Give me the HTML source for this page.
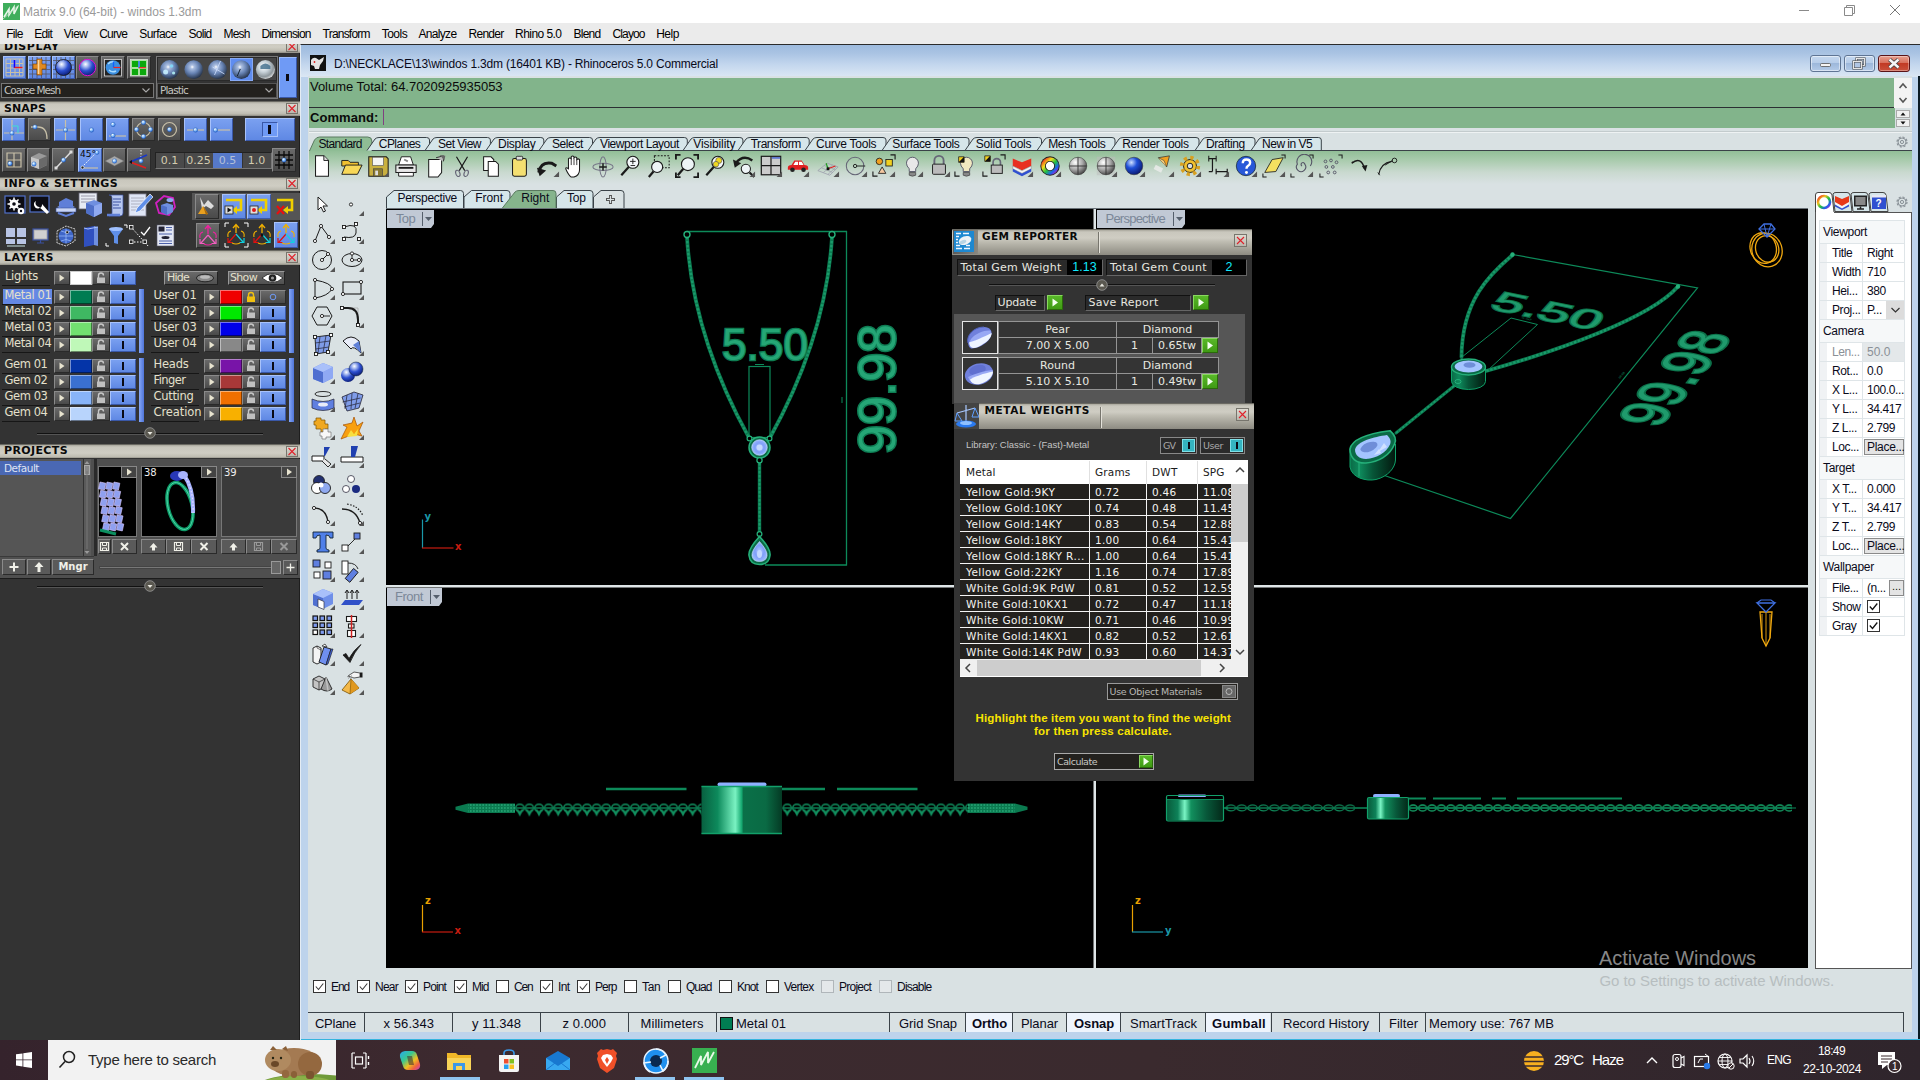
<!DOCTYPE html>
<html><head><meta charset="utf-8"><title>Matrix 9.0 (64-bit) - windos 1.3dm</title>
<style>
html,body{margin:0;padding:0;}
body{width:1920px;height:1080px;position:relative;overflow:hidden;background:#333;font-family:"Liberation Sans",sans-serif;}
div,span.t,svg.a{position:absolute;box-sizing:border-box;}
span.t{white-space:nowrap;display:block;}
.hdr{background:linear-gradient(#a9a79c 0,#c9c7bd 2px,#cfcdc3 8px,#bdbbb0 12px,#8d8b82 100%);border-top:1px solid #6a6962;}
.xb{background:linear-gradient(#dddbd2,#b9b7ad);border:1px solid #77756d;}
.btn{background:linear-gradient(#6a6a6a,#4a4a4a);border:1px solid;border-color:#8a8a8a #2a2a2a #2a2a2a #8a8a8a;}
.bon{background:linear-gradient(#7aa0f0,#5f88e4);border:1px solid;border-color:#a8c2fa #3a58a8 #3a58a8 #a8c2fa;}
.dk{background:#222;border:1px solid;border-color:#111 #666 #666 #111;}
</style></head><body>

<div style="left:0px;top:0px;width:1920px;height:23px;background:#fff;"></div>
<svg class="a" style="left:3px;top:3px" width="17" height="17" viewBox="0 0 17 17"><rect width="17" height="17" fill="#3fae5c"/><path d="M1 14 L6 6 L6 12 L11 4 L11 11 L15 3" stroke="#e8f6ea" stroke-width="1.6" fill="none"/><path d="M0 16 L16 2" stroke="#bfe5c6" stroke-width="0.8"/></svg>
<span class="t" style="left:23px;top:4px;font:400 12px/16px 'Liberation Sans',sans-serif;color:#9a9a9a;letter-spacing:-0.006px;">Matrix 9.0 (64-bit) - windos 1.3dm</span>
<svg class="a" style="left:1780px;top:0" width="140" height="23" viewBox="0 0 140 23"><path d="M19 10.500h10" stroke="#8a8a8a" stroke-width="1"/><path d="M64.500 7.500h8v8h-8z M66.500 7.500v-2h8v8h-2" stroke="#8a8a8a" fill="none" stroke-width="1"/><path d="M110 5l10 10M120 5l-10 10" stroke="#777" stroke-width="1"/></svg>
<div style="left:0px;top:23px;width:1920px;height:21px;background:#ebebeb;"></div>
<span class="t" style="left:6.2px;top:26px;font:400 12px/17px 'Liberation Sans',sans-serif;color:#000;letter-spacing:-0.734px;">File</span>
<span class="t" style="left:34.3px;top:26px;font:400 12px/17px 'Liberation Sans',sans-serif;color:#000;letter-spacing:-0.719px;">Edit</span>
<span class="t" style="left:63.8px;top:26px;font:400 12px/17px 'Liberation Sans',sans-serif;color:#000;letter-spacing:-0.523px;">View</span>
<span class="t" style="left:99.2px;top:26px;font:400 12px/17px 'Liberation Sans',sans-serif;color:#000;letter-spacing:-0.802px;">Curve</span>
<span class="t" style="left:139.3px;top:26px;font:400 12px/17px 'Liberation Sans',sans-serif;color:#000;letter-spacing:-0.593px;">Surface</span>
<span class="t" style="left:188.5px;top:26px;font:400 12px/17px 'Liberation Sans',sans-serif;color:#000;letter-spacing:-0.737px;">Solid</span>
<span class="t" style="left:223.5px;top:26px;font:400 12px/17px 'Liberation Sans',sans-serif;color:#000;letter-spacing:-0.785px;">Mesh</span>
<span class="t" style="left:261.4px;top:26px;font:400 12px/17px 'Liberation Sans',sans-serif;color:#000;letter-spacing:-0.832px;">Dimension</span>
<span class="t" style="left:322.6px;top:26px;font:400 12px/17px 'Liberation Sans',sans-serif;color:#000;letter-spacing:-0.792px;">Transform</span>
<span class="t" style="left:381.7px;top:26px;font:400 12px/17px 'Liberation Sans',sans-serif;color:#000;letter-spacing:-0.502px;">Tools</span>
<span class="t" style="left:418.5px;top:26px;font:400 12px/17px 'Liberation Sans',sans-serif;color:#000;letter-spacing:-0.684px;">Analyze</span>
<span class="t" style="left:468.5px;top:26px;font:400 12px/17px 'Liberation Sans',sans-serif;color:#000;letter-spacing:-0.726px;">Render</span>
<span class="t" style="left:515.1px;top:26px;font:400 12px/17px 'Liberation Sans',sans-serif;color:#000;letter-spacing:-0.563px;">Rhino 5.0</span>
<span class="t" style="left:573.5px;top:26px;font:400 12px/17px 'Liberation Sans',sans-serif;color:#000;letter-spacing:-0.758px;">Blend</span>
<span class="t" style="left:612.5px;top:26px;font:400 12px/17px 'Liberation Sans',sans-serif;color:#000;letter-spacing:-0.875px;">Clayoo</span>
<span class="t" style="left:656.2px;top:26px;font:400 12px/17px 'Liberation Sans',sans-serif;color:#000;letter-spacing:-0.520px;">Help</span>
<div style="left:0;top:44px;width:300px;height:996px;background:#333;overflow:hidden;border-right:1px solid #1e1e1e"></div>
<svg width="0" height="0" style="position:absolute"><defs><radialGradient id="gd" cx=".35" cy=".3" r=".8"><stop offset="0" stop-color="#fff"/><stop offset=".35" stop-color="#9fd0ff"/><stop offset="1" stop-color="#1c62d8"/></radialGradient><radialGradient id="gs" cx=".38" cy=".3" r=".75"><stop offset="0" stop-color="#fff"/><stop offset=".18" stop-color="#b9c9f5"/><stop offset=".55" stop-color="#2c4fd0"/><stop offset="1" stop-color="#0a1a70"/></radialGradient><radialGradient id="gm" cx=".42" cy=".36" r=".7"><stop offset="0" stop-color="#fff"/><stop offset=".15" stop-color="#a9bde0"/><stop offset=".5" stop-color="#6783b3"/><stop offset="1" stop-color="#1b2638"/></radialGradient><radialGradient id="gc" cx=".4" cy=".35" r=".7"><stop offset="0" stop-color="#fff"/><stop offset=".4" stop-color="#c9d3da"/><stop offset=".75" stop-color="#8e979c"/><stop offset="1" stop-color="#e8e8e8"/></radialGradient><linearGradient id="gb" x1="0" y1="0" x2="1" y2="1"><stop offset="0" stop-color="#a9c0f5"/><stop offset="1" stop-color="#2f51b8"/></linearGradient></defs></svg>
<div style="left:0;top:44px;width:300px;height:9px;overflow:hidden"><div class="hdr" style="left:0;top:-6px;width:300px;height:15px"></div><span class="t" style="left:4px;top:-5.500px;font:700 11px/15px DejaVu Sans,sans-serif;color:#0a0a0a;letter-spacing:.55px">DISPLAY</span><div class="xb" style="left:286px;top:-3px;width:12px;height:11px"><svg width="10" height="9" viewBox="0 0 10 9" style="display:block"><path d="M1.5 1l7 7M8.5 1l-7 7" stroke="#e0202a" stroke-width="1.1"/></svg></div></div>
<div class="bon" style="left:3px;top:56px;width:23px;height:23px;"></div>
<div class="bon" style="left:28px;top:56px;width:23px;height:23px;"></div>
<div class="bon" style="left:52px;top:56px;width:23px;height:23px;"></div>
<div class="btn" style="left:76px;top:56px;width:23px;height:23px;"></div>
<div class="btn" style="left:101px;top:56px;width:24px;height:23px;"></div>
<div class="btn" style="left:127px;top:56px;width:24px;height:23px;"></div>
<svg class="a" style="left:3px;top:56px" width="23" height="23" viewBox="0 0 23 23"><path d="M3 3h17v17h-17z" fill="none" stroke="#c9c0a8" stroke-width="1"/><path d="M7.5 3v17M12 3v17M16.5 3v17M3 7.5h17M3 12h17M3 16.5h17" stroke="#c9c0a8" stroke-width="1"/><path d="M11.5 4v8" stroke="#10f" stroke-width="1.6"/><path d="M11.5 11.5h8" stroke="#f01818" stroke-width="1.4"/></svg>
<svg class="a" style="left:28px;top:56px" width="23" height="23" viewBox="0 0 23 23"><path d="M1 4.5h21M1 9h21M1 13.500h21M1 18h21M4.500 1v21M9 1v21M13.500 1v21M18 1v21" stroke="#556" stroke-width=".8"/><path d="M9 3h5v5h4v5h-4v6h-5v-6h-4v-5h4z" fill="#e08a20" stroke="#7a3d00" stroke-width=".6"/><path d="M10.500 4v14" stroke="#ffd79a" stroke-width="1.6"/></svg>
<svg class="a" style="left:52px;top:56px" width="23" height="23" viewBox="0 0 23 23"><path d="M1 4.5h21M1 9h21M1 13.500h21M1 18h21M4.500 1v21M9 1v21M13.500 1v21M18 1v21" stroke="#556" stroke-width=".8"/><circle cx="11.5" cy="11.5" r="8" fill="url(#gs)" stroke="#111" stroke-width=".8"/></svg>
<svg class="a" style="left:76px;top:56px" width="23" height="23" viewBox="0 0 23 23"><circle cx="11.5" cy="11.5" r="8.200" fill="url(#gs)" stroke="#e010d0" stroke-width="1"/></svg>
<svg class="a" style="left:101px;top:56px" width="24" height="23" viewBox="0 0 24 23"><rect x="3.500" y="3.500" width="17" height="16.500" fill="#222" stroke="#ddd" stroke-width=".8"/><circle cx="12" cy="11.500" r="7.300" fill="#3c8fe0"/><path d="M7 8q3-3 6-2M8 14q3 3 7 1" stroke="#a9dcff" stroke-width="1.500" fill="none"/><path d="M12.500 5.500v6" stroke="#1060ff" stroke-width="1.300"/><path d="M12.500 11.500h7" stroke="#f02020" stroke-width="1.200"/></svg>
<svg class="a" style="left:127px;top:56px" width="24" height="23" viewBox="0 0 24 23"><rect x="3.500" y="3.500" width="17" height="16.500" fill="#a8e0a0" stroke="#ddd" stroke-width=".8"/><path d="M5 5h6v6h-6zM13 5h6v6h-6zM5 13h6v6h-6zM13 13h6v6h-6z" fill="#0ca80c"/><path d="M12 5v7" stroke="#1060ff" stroke-width="1.300"/><path d="M12 11.700h7" stroke="#f02020" stroke-width="1.200"/></svg>
<div style="left:1px;top:83px;width:153px;height:15px;background:#23211e;border:1px solid #777;"></div>
<span class="t" style="left:4px;top:83px;font:400 10.5px/15px 'DejaVu Sans','Liberation Sans',sans-serif;color:#c4c4c0;letter-spacing:-1.038px;">Coarse Mesh</span>
<svg class="a" style="left:140px;top:86px" width="12" height="9" viewBox="0 0 12 9"><path d="M2.500 2.500l3.500 3.500l3.500-3.500" stroke="#aaa" fill="none" stroke-width="1.100"/></svg>
<div style="left:156px;top:56px;width:122px;height:43px;border:1px solid #777;background:#333"></div>
<div style="left:157px;top:57px;width:120px;height:24px;background:#454545;border:1px solid #2a2a2a"></div>
<div style="left:230px;top:58px;width:23px;height:23px;background:#5f8df0;border:1px solid #86a9f5"></div>
<svg class="a" style="left:156px;top:56px" width="122" height="26" viewBox="0 0 122 26"><circle cx="13.599999999999994" cy="13.600" r="9.500" fill="url(#gm)"/><circle cx="9.599999999999994" cy="16" r="2.500" fill="#c8f0ff" opacity=".9"/><circle cx="15.599999999999994" cy="10" r="1.800" fill="#7fe0ff" opacity=".8"/><circle cx="17.599999999999994" cy="17" r="1.600" fill="#bff" opacity=".8"/><circle cx="37.69999999999999" cy="13.600" r="9.300" fill="url(#gm)"/><circle cx="61.5" cy="13.600" r="9.500" fill="url(#gm)"/><path d="M56.5 11l12 7M64.5 5l-6 14" stroke="#cfe0ff" stroke-width=".9" opacity=".9"/><circle cx="85.30000000000001" cy="13.600" r="9.300" fill="url(#gm)"/><path d="M84.30000000000001 13l-3 7" stroke="#123" stroke-width="1"/><circle cx="109.39999999999998" cy="13.600" r="9.500" fill="url(#gc)"/><path d="M104.39999999999998 10q5-5 10 0v3h-10z" fill="#3c6a8a" opacity=".8"/></svg>
<div style="left:157px;top:83px;width:120px;height:15px;background:#23211e;border:1px solid #555;"></div>
<span class="t" style="left:160px;top:83px;font:400 10.5px/15px 'DejaVu Sans','Liberation Sans',sans-serif;color:#c4c4c0;letter-spacing:-0.851px;">Plastic</span>
<svg class="a" style="left:263px;top:86px" width="12" height="9" viewBox="0 0 12 9"><path d="M2.500 2.500l3.500 3.500l3.500-3.500" stroke="#aaa" fill="none" stroke-width="1.100"/></svg>
<div style="left:279px;top:57px;width:18px;height:41px;background:#6f9af5;border:1px solid;border-color:#9dbcfa #3a58a8 #3a58a8 #9dbcfa"></div>
<div style="left:286px;top:74px;width:3px;height:7px;background:#0a0a14"></div>
<div class="hdr" style="left:0px;top:101px;width:300px;height:15px;"></div>
<span class="t" style="left:4px;top:101px;font:700 11px/15px 'DejaVu Sans','Liberation Sans',sans-serif;color:#0a0a0a;letter-spacing:0.075px;">SNAPS</span>
<div class="xb" style="left:286px;top:103px;width:12px;height:11px;"><svg width="10" height="9" viewBox="0 0 10 9" style="display:block"><path d="M1.5 1l7 7M8.5 1l-7 7" stroke="#e0202a" stroke-width="1.1"/></svg></div>
<div class="bon" style="left:2px;top:118px;width:23px;height:23px;"></div>
<div class="btn" style="left:28px;top:118px;width:23px;height:23px;"></div>
<div class="bon" style="left:54px;top:118px;width:23px;height:23px;"></div>
<div class="bon" style="left:80px;top:118px;width:23px;height:23px;"></div>
<div class="bon" style="left:106px;top:118px;width:23px;height:23px;"></div>
<div class="btn" style="left:132px;top:118px;width:23px;height:23px;"></div>
<div class="btn" style="left:158px;top:118px;width:23px;height:23px;"></div>
<div class="bon" style="left:184px;top:118px;width:23px;height:23px;"></div>
<div class="bon" style="left:210px;top:118px;width:23px;height:23px;"></div>
<svg class="a" style="left:2px;top:118px" width="23" height="23" viewBox="0 0 23 23"><path d="M10 2v20M2 15h20" stroke="#c8c0a8" stroke-width="1.200"/><path d="M10 8h6v7" stroke="#40e0d0" stroke-width="1" fill="none"/><circle cx="10" cy="15" r="2.2" fill="url(#gd)" stroke="#1a4fa8" stroke-width=".4"/></svg>
<svg class="a" style="left:28px;top:118px" width="23" height="23" viewBox="0 0 23 23"><path d="M3 9h7q9 0 9 12" stroke="#c8c0a8" stroke-width="1.300" fill="none"/><circle cx="7" cy="9" r="2.2" fill="url(#gd)" stroke="#1a4fa8" stroke-width=".4"/></svg>
<svg class="a" style="left:54px;top:118px" width="23" height="23" viewBox="0 0 23 23"><path d="M11.5 2v20M2 12h19" stroke="#c8c0a8" stroke-width="1.200"/><circle cx="11.5" cy="12" r="2.2" fill="url(#gd)" stroke="#1a4fa8" stroke-width=".4"/></svg>
<svg class="a" style="left:80px;top:118px" width="23" height="23" viewBox="0 0 23 23"><circle cx="11.5" cy="12" r="2.2" fill="url(#gd)" stroke="#1a4fa8" stroke-width=".4"/></svg>
<svg class="a" style="left:106px;top:118px" width="23" height="23" viewBox="0 0 23 23"><path d="M3 18h17" stroke="#c8c0a8" stroke-width="1.200"/><circle cx="7" cy="6.5" r="2.2" fill="url(#gd)" stroke="#1a4fa8" stroke-width=".4"/><circle cx="7" cy="17.5" r="2.2" fill="url(#gd)" stroke="#1a4fa8" stroke-width=".4"/></svg>
<svg class="a" style="left:132px;top:118px" width="23" height="23" viewBox="0 0 23 23"><circle cx="11.500" cy="11.500" r="7" fill="none" stroke="#c8c0a8" stroke-width="1.200"/><circle cx="11.5" cy="4.5" r="2.2" fill="url(#gd)" stroke="#1a4fa8" stroke-width=".4"/><circle cx="11.5" cy="18.5" r="2.2" fill="url(#gd)" stroke="#1a4fa8" stroke-width=".4"/><circle cx="4.5" cy="11.5" r="2.2" fill="url(#gd)" stroke="#1a4fa8" stroke-width=".4"/><circle cx="18.5" cy="11.5" r="2.2" fill="url(#gd)" stroke="#1a4fa8" stroke-width=".4"/></svg>
<svg class="a" style="left:158px;top:118px" width="23" height="23" viewBox="0 0 23 23"><circle cx="11.500" cy="11.500" r="7" fill="none" stroke="#c8c0a8" stroke-width="1.200"/><circle cx="11.5" cy="11.5" r="2.2" fill="url(#gd)" stroke="#1a4fa8" stroke-width=".4"/></svg>
<svg class="a" style="left:184px;top:118px" width="23" height="23" viewBox="0 0 23 23"><path d="M3 12h17" stroke="#c8c0a8" stroke-width="1.200"/><circle cx="11.5" cy="12" r="2.2" fill="url(#gd)" stroke="#1a4fa8" stroke-width=".4"/></svg>
<svg class="a" style="left:210px;top:118px" width="23" height="23" viewBox="0 0 23 23"><path d="M5 12h15" stroke="#c8c0a8" stroke-width="1.200"/><circle cx="5.5" cy="12" r="2.2" fill="url(#gd)" stroke="#1a4fa8" stroke-width=".4"/></svg>
<div class="bon" style="left:245px;top:118px;width:50px;height:23px;"></div>
<div style="left:262px;top:122px;width:16px;height:15px;border:1px solid;border-color:#3a58a8 #a8c2fa #a8c2fa #3a58a8;background:#6f9af5"></div>
<div style="left:268px;top:125px;width:3px;height:9px;background:#0a0a14"></div>
<div class="btn" style="left:2px;top:148px;width:24px;height:24px;"></div>
<div class="btn" style="left:27px;top:148px;width:23px;height:24px;"></div>
<div class="btn" style="left:52px;top:148px;width:23px;height:24px;"></div>
<div class="bon" style="left:78px;top:148px;width:24px;height:24px;"></div>
<div class="btn" style="left:103px;top:148px;width:23px;height:24px;"></div>
<div class="btn" style="left:127px;top:148px;width:24px;height:24px;"></div>
<svg class="a" style="left:2px;top:148px" width="24" height="24" viewBox="0 0 24 24"><path d="M5 5h14v14h-14zM12 5v14M5 12h14" stroke="#c8c0a8" fill="none" stroke-width="1.200"/><circle cx="8" cy="15.5" r="2.2" fill="url(#gd)" stroke="#1a4fa8" stroke-width=".4"/></svg>
<svg class="a" style="left:27px;top:148px" width="23" height="24" viewBox="0 0 23 24"><path d="M4 9l8-4 8 3v9l-8 4-8-3z" fill="#9a9a9a"/><path d="M4 9l8 2.500v9.500l-8-3z" fill="#c8c8c8"/><path d="M12 11.500l8-3.500v9l-8 4z" fill="#6a6a6a"/><circle cx="7" cy="16" r="2.2" fill="url(#gd)" stroke="#1a4fa8" stroke-width=".4"/></svg>
<svg class="a" style="left:52px;top:148px" width="23" height="24" viewBox="0 0 23 24"><path d="M4 20L19 4" stroke="#ddd" stroke-width="1.400"/><rect x="2.500" y="18.500" width="3" height="3" fill="#ddd"/><rect x="17.500" y="2.500" width="3" height="3" fill="#ddd"/><circle cx="11.5" cy="12" r="2.2" fill="url(#gd)" stroke="#1a4fa8" stroke-width=".4"/></svg>
<svg class="a" style="left:78px;top:148px" width="24" height="24" viewBox="0 0 24 24"><path d="M3 20h17" stroke="#c8c0a8" stroke-width="1.200"/><path d="M4 19L19 4" stroke="#fff" stroke-width="1" stroke-dasharray="1.500 1.500"/><circle cx="4.500" cy="19.500" r="1.500" fill="#222" stroke="#fff" stroke-width=".6"/><circle cx="19" cy="4.5" r="2" fill="url(#gd)" stroke="#1a4fa8" stroke-width=".4"/></svg>
<span class="t" style="left:80px;top:149px;font:400 9px/11px 'DejaVu Sans','Liberation Sans',sans-serif;color:#0a0a0a;">45°</span>
<svg class="a" style="left:103px;top:148px" width="23" height="24" viewBox="0 0 23 24"><path d="M2 13l9.500-5 9.500 5-9.500 5z" fill="#a8a8a8" stroke="#666" stroke-width=".5"/><circle cx="11.5" cy="13" r="2.2" fill="url(#gd)" stroke="#1a4fa8" stroke-width=".4"/></svg>
<svg class="a" style="left:127px;top:148px" width="24" height="24" viewBox="0 0 24 24"><path d="M14 2v10" stroke="#fff" stroke-width="1" stroke-dasharray="1.500 1.500"/><path d="M3 14l17-7" stroke="#1838c8" stroke-width="1.500"/><path d="M3 14l16 6" stroke="#e02020" stroke-width="1.500"/><path d="M2 14l3-2v4z" fill="#111"/><circle cx="14" cy="13" r="2.2" fill="url(#gd)" stroke="#1a4fa8" stroke-width=".4"/></svg>
<div style="left:155px;top:152px;width:117px;height:17px;background:#4a4a4a;border:1px solid;border-color:#222 #777 #777 #222"></div>
<div style="left:213px;top:153px;width:29px;height:15px;background:#5679c9"></div>
<span class="t" style="left:155px;top:153px;font:400 11px/15px 'DejaVu Sans','Liberation Sans',sans-serif;color:#d4ccb0;width:29px;text-align:center;">0.1</span>
<span class="t" style="left:184px;top:153px;font:400 11px/15px 'DejaVu Sans','Liberation Sans',sans-serif;color:#d4ccb0;width:29px;text-align:center;">0.25</span>
<div style="left:184px;top:153px;width:1px;height:15px;background:#333"></div>
<span class="t" style="left:213px;top:153px;font:400 11px/15px 'DejaVu Sans','Liberation Sans',sans-serif;color:#b4c0d8;width:29px;text-align:center;">0.5</span>
<span class="t" style="left:242px;top:153px;font:400 11px/15px 'DejaVu Sans','Liberation Sans',sans-serif;color:#d4ccb0;width:29px;text-align:center;">1.0</span>
<div style="left:242px;top:153px;width:1px;height:15px;background:#333"></div>
<div class="btn" style="left:272px;top:148px;width:24px;height:24px;"></div>
<svg class="a" style="left:272px;top:148px" width="24" height="24" viewBox="0 0 24 24"><path d="M7 3v18M12 3v18M17 3v18M3 7h18M3 12h18M3 17h18" stroke="#0a0a0a" stroke-width="1.300"/><circle cx="12" cy="12" r="2.2" fill="url(#gd)" stroke="#1a4fa8" stroke-width=".4"/></svg>
<div class="hdr" style="left:0px;top:177px;width:300px;height:14px;"></div>
<span class="t" style="left:4px;top:177px;font:700 11px/14px 'DejaVu Sans','Liberation Sans',sans-serif;color:#0a0a0a;letter-spacing:0.376px;">INFO &amp; SETTINGS</span>
<div class="xb" style="left:286px;top:178px;width:12px;height:11px;"><svg width="10" height="9" viewBox="0 0 10 9" style="display:block"><path d="M1.5 1l7 7M8.5 1l-7 7" stroke="#e0202a" stroke-width="1.1"/></svg></div>
<svg class="a" style="left:4px;top:193px" width="23" height="26" viewBox="0 0 23 26"><rect x="1" y="3" width="20" height="17" fill="#0c0c14" stroke="#5070c8" stroke-width="1.200"/><circle cx="10" cy="11" r="4.500" fill="#fff"/><circle cx="10" cy="11" r="1.800" fill="#0c0c14"/><circle cx="17" cy="18" r="3.300" fill="#fff"/><circle cx="17" cy="18" r="1.200" fill="#0c0c14"/><path d="M10 4.500v13M3.500 11h13M5.500 6.500l9 9M14.500 6.500l-9 9" stroke="#fff" stroke-width="1.500"/><circle cx="10" cy="11" r="1.800" fill="#0c0c14"/></svg>
<svg class="a" style="left:29px;top:193px" width="23" height="26" viewBox="0 0 23 26"><rect x="1" y="3" width="19" height="16" fill="#0c0c14" stroke="#5070c8" stroke-width="1.200"/><path d="M7 8a4 4 0 1 0 6 3l7 8-2 2-8-7a4 4 0 0 1-3-6z" fill="#fff"/></svg>
<svg class="a" style="left:54px;top:193px" width="24" height="26" viewBox="0 0 24 26"><path d="M3 14l9-4 9 4-9 4z" fill="#7f9ce8"/><path d="M5 9l7-4 7 3v6l-7 3-7-3z" fill="#5f7fd8"/><path d="M2 15h20v4h-20z" fill="#c8d4f4" stroke="#3a50a0" stroke-width=".6"/><path d="M4 20l8 3 8-3" stroke="#5f7fd8" stroke-width="2" fill="none"/></svg>
<svg class="a" style="left:78px;top:192px" width="25" height="28" viewBox="0 0 25 28"><rect x="1" y="1" width="18" height="16" fill="#e8ecf4" stroke="#667" stroke-width=".8"/><path d="M3 4h14M3 7h14M3 10h14" stroke="#889" stroke-width=".8"/><path d="M8 11l8-3 8 3v10l-8 4-8-4z" fill="#6f8fe0"/><path d="M8 11l8 3v11l-8-4z" fill="#4f6fc8"/><path d="M16 14l8-3v10l-8 4z" fill="#8fa9f0"/></svg>
<svg class="a" style="left:105px;top:193px" width="22" height="26" viewBox="0 0 22 26"><path d="M4 2h14v18q0 3-3 3h-11q3 0 3-3v-15q0-3-3-3z" fill="#b8c8f0" stroke="#3a50a0" stroke-width=".7"/><path d="M8 6h8M8 9h8M8 12h6M8 15h8" stroke="#3a50a0" stroke-width="1"/><path d="M2 22h13" stroke="#5f7fd8" stroke-width="2.500"/></svg>
<svg class="a" style="left:128px;top:192px" width="25" height="27" viewBox="0 0 25 27"><rect x="1" y="2" width="17" height="22" fill="#dfe6f6" stroke="#889" stroke-width=".8"/><path d="M3 6h13M3 9h13M3 12h13M3 15h13M3 18h13" stroke="#99a" stroke-width=".7"/><path d="M22 2l3 3-13 14-5 2 2-5z" fill="#5f8fe8" stroke="#fff" stroke-width=".7"/></svg>
<svg class="a" style="left:153px;top:193px" width="24" height="26" viewBox="0 0 24 26"><path d="M3 10l8-7 9 2 2 9-6 8-10-2z" fill="none" stroke="#d020c0" stroke-width="1.800"/><path d="M8 12l6-2 6 2v7l-6 3-6-3z" fill="#6f8fe0"/><path d="M8 12l6 2v8l-6-3z" fill="#4f6fc8"/><ellipse cx="17" cy="7" rx="3.500" ry="2" fill="#8fa9f0"/></svg>
<div style="left:192px;top:193px;width:108px;height:27px;background:#555"></div>
<div class="btn" style="left:195px;top:194px;width:24px;height:25px;"></div>
<div class="bon" style="left:222px;top:194px;width:24px;height:25px;"></div>
<div class="bon" style="left:247px;top:194px;width:24px;height:25px;"></div>
<svg class="a" style="left:195px;top:194px" width="24" height="25" viewBox="0 0 24 25"><path d="M5 3l4 8 4-5 6 6-3 3-5-3-4 3z" fill="#ddd"/><path d="M3 20l5-8 5 8z" fill="#e8a020"/><path d="M8 12l5 8-2 1z" fill="#a86808"/></svg>
<svg class="a" style="left:222px;top:194px" width="24" height="25" viewBox="0 0 24 25"><path d="M4 6h15v10h-5" stroke="#f0d000" stroke-width="2.600" fill="none"/><path d="M15 12v8l-5-4z" fill="#f0d000"/><rect x="3" y="12" width="8" height="8" fill="#ddd" stroke="#222" stroke-width=".8"/><path d="M5.500 13.500v5l4-2.500z" fill="#111"/></svg>
<svg class="a" style="left:247px;top:194px" width="24" height="25" viewBox="0 0 24 25"><path d="M4 6h15v10h-5" stroke="#f0d000" stroke-width="2.600" fill="none"/><path d="M15 12v8l-5-4z" fill="#f0d000"/><rect x="3" y="12" width="8" height="8" fill="#ddd" stroke="#222" stroke-width=".8"/><circle cx="7" cy="16" r="2" fill="#e01818"/></svg>
<svg class="a" style="left:273px;top:194px" width="24" height="25" viewBox="0 0 24 25"><path d="M4 6h15v10h-5" stroke="#f0d000" stroke-width="2.600" fill="none"/><path d="M15 12v8l-5-4z" fill="#f0d000"/><path d="M4 12l7 8M11 12l-7 8" stroke="#e81010" stroke-width="2.200"/></svg>
<svg class="a" style="left:4px;top:224px" width="23" height="26" viewBox="0 0 23 26"><path d="M2 4h9v9h-9zM13 4h9v9h-9zM2 15h9v5h-9zM13 15h9v5h-9z" fill="#b8c4e4"/><path d="M3 22h18" stroke="#9aa" stroke-width="1.500"/></svg>
<svg class="a" style="left:31px;top:226px" width="19" height="22" viewBox="0 0 19 22"><rect x="2" y="3" width="15" height="11" fill="#aaa" stroke="#3a50a0" stroke-width="1.200"/><rect x="3.500" y="4.500" width="12" height="8" fill="#d0d0d0"/><path d="M6 17h7M9.500 14v3" stroke="#3a50a0" stroke-width="1.200"/></svg>
<svg class="a" style="left:54px;top:223px" width="24" height="26" viewBox="0 0 24 26"><path d="M3 8l9-5 9 3v12l-9 5-9-3z" fill="none" stroke="#fff" stroke-width=".8" stroke-dasharray="2 1"/><circle cx="12" cy="13" r="7.500" fill="#3f66c8"/><path d="M5 13h14M12 5.500v15M7 8q5 3 10 0M7 18q5-3 10 0" stroke="#9fc0ff" stroke-width=".7" fill="none"/><rect x="12" y="8" width="2.500" height="2.500" fill="#111" stroke="#fff" stroke-width=".5"/></svg>
<svg class="a" style="left:81px;top:224px" width="19" height="26" viewBox="0 0 19 26"><path d="M3 4l10-2v19l-10 2z" fill="#3050c0"/><path d="M13 2l4 1v19l-4-1z" fill="#6f8fe0"/><path d="M3 4l4 1 10-2" stroke="#a8c0ff" stroke-width="1" fill="none"/></svg>
<svg class="a" style="left:104px;top:223px" width="24" height="27" viewBox="0 0 24 27"><path d="M5 6h14l-5 7v8l-4-1v-7z" fill="#5f8fe8"/><ellipse cx="12" cy="6" rx="7" ry="2" fill="#9fc0ff"/><path d="M2 20v3h3M20 2h3v3" stroke="#fff" stroke-width="1" fill="none"/></svg>
<svg class="a" style="left:128px;top:224px" width="26" height="26" viewBox="0 0 26 26"><path d="M3 3l18 20M3 18h14" stroke="#fff" stroke-width="1" stroke-dasharray="1.500 1.500"/><rect x="1.500" y="1.500" width="3.500" height="3.500" fill="#222" stroke="#fff" stroke-width=".8"/><rect x="1.500" y="16" width="3.500" height="3.500" fill="#222" stroke="#fff" stroke-width=".8"/><rect x="15" y="16" width="3.500" height="3.500" fill="#222" stroke="#fff" stroke-width=".8"/><path d="M13 8l3 3 6-8" stroke="#fff" stroke-width="1.300" fill="none"/></svg>
<svg class="a" style="left:156px;top:224px" width="20" height="25" viewBox="0 0 20 25"><rect x="1" y="1" width="17" height="21" fill="#e4e8f4" stroke="#556" stroke-width=".6"/><rect x="2.500" y="2.500" width="6" height="5" fill="#223"/><path d="M10 3.500h6M10 6h6M3 10h13M3 17h13M3 19.500h13" stroke="#3a50a0" stroke-width=".9"/><ellipse cx="9.500" cy="13.500" rx="4" ry="1.500" fill="#223"/></svg>
<div class="btn" style="left:196px;top:223px;width:24px;height:25px;"></div>
<div class="bon" style="left:274px;top:222px;width:24px;height:26px;"></div>
<svg class="a" style="left:196px;top:223px" width="24" height="25" viewBox="0 0 24 25"><path d="M12 3v8M9 6l3-3.500 3 3.500" stroke="#f020a0" stroke-width="1.300" fill="none"/><path d="M12 12l-7 8M4 16v4.500h4.500" stroke="#f060c0" stroke-width="1.200" fill="none"/><path d="M12 12l7 8M20 16v4.500h-4.500" stroke="#f060c0" stroke-width="1.200" fill="none"/><path d="M7 9q-4 1-3 6M17 9q4 1 3 6M8 21q4 2 8 0" stroke="#f020a0" stroke-width="1.100" fill="none"/></svg>
<svg class="a" style="left:224px;top:222px" width="25" height="26" viewBox="0 0 25 26"><path d="M12 3v8M9 6l3-3.500 3 3.500" stroke="#f0b000" stroke-width="1.300" fill="none"/><path d="M12 12l-7 8M4 16v4.500h4.500" stroke="#e01010" stroke-width="1.200" fill="none"/><path d="M12 12l7 8M20 16v4.500h-4.500" stroke="#10d0e0" stroke-width="1.200" fill="none"/><path d="M7 9q-4 1-3 6M17 9q4 1 3 6M8 21q4 2 8 0" stroke="#f0b000" stroke-width="1.100" fill="none"/><path d="M1 5v-4h4M20 1h4v4M1 21v4h4M24 21v4h-4" stroke="#fff" stroke-width="1" fill="none"/></svg>
<svg class="a" style="left:250px;top:222px" width="23" height="26" viewBox="0 0 23 26"><path d="M12 3v8M9 6l3-3.500 3 3.500" stroke="#f0b000" stroke-width="1.300" fill="none"/><path d="M12 12l-7 8M4 16v4.500h4.500" stroke="#e01010" stroke-width="1.200" fill="none"/><path d="M12 12l7 8M20 16v4.500h-4.500" stroke="#10d0e0" stroke-width="1.200" fill="none"/><path d="M7 9q-4 1-3 6M17 9q4 1 3 6M8 21q4 2 8 0" stroke="#f0b000" stroke-width="1.100" fill="none"/><circle cx="12" cy="13" r="1.500" fill="#111"/></svg>
<svg class="a" style="left:274px;top:222px" width="24" height="26" viewBox="0 0 24 26"><path d="M12 3v8M9 6l3-3.500 3 3.500" stroke="#f0b000" stroke-width="1.300" fill="none"/><path d="M12 12l-7 8M4 16v4.500h4.500" stroke="#e01010" stroke-width="1.200" fill="none"/><path d="M12 12l7 8M20 16v4.500h-4.500" stroke="#10d0e0" stroke-width="1.200" fill="none"/><path d="M7 9q-4 1-3 6M17 9q4 1 3 6M8 21q4 2 8 0" stroke="#f0b000" stroke-width="1.100" fill="none"/></svg>
<div class="hdr" style="left:0px;top:250px;width:300px;height:15px;"></div>
<span class="t" style="left:4px;top:250px;font:700 11px/15px 'DejaVu Sans','Liberation Sans',sans-serif;color:#0a0a0a;letter-spacing:0.610px;">LAYERS</span>
<div class="xb" style="left:286px;top:252px;width:12px;height:11px;"><svg width="10" height="9" viewBox="0 0 10 9" style="display:block"><path d="M1.5 1l7 7M8.5 1l-7 7" stroke="#e0202a" stroke-width="1.1"/></svg></div>
<span class="t" style="left:5px;top:268.3px;font:400 11.5px/16px 'DejaVu Sans','Liberation Sans',sans-serif;color:#e4e0cc;letter-spacing:-0.282px;">Lights</span>
<div style="left:2px;top:285px;width:48px;height:1px;background:#161616"></div>
<div class="btn" style="left:54px;top:271px;width:16px;height:14px;"></div>
<svg class="a" style="left:54px;top:271px" width="16" height="14" viewBox="0 0 16 14"><path d="M5.500 3.500v7l5-3.500z" fill="#e8e4d0"/></svg>
<div style="left:70px;top:271px;width:22px;height:14px;background:#fff;border:1px solid #ccc"></div>
<div class="btn" style="left:92px;top:271px;width:18px;height:14px;"></div>
<svg class="a" style="left:92px;top:271px" width="18" height="14" viewBox="0 0 18 14"><path d="M6.500 7v-2.500a2.500 2.500 0 0 1 5 0" stroke="#c8c8c8" stroke-width="1.400" fill="none"/><rect x="5" y="6.500" width="8" height="5.500" fill="#c0c0c0"/></svg>
<div class="bon" style="left:110px;top:271px;width:26px;height:14px;"></div>
<div style="left:122px;top:274px;width:2px;height:8px;background:#0a0a14"></div>
<div style="left:164px;top:271px;width:54px;height:14px;background:linear-gradient(#6a6a6a,#505050);border:1px solid;border-color:#999 #222 #222 #999"></div>
<span class="t" style="left:167px;top:270px;font:400 11px/16px 'DejaVu Sans','Liberation Sans',sans-serif;color:#e4e0cc;letter-spacing:-0.770px;">Hide</span>
<svg class="a" style="left:195px;top:273px" width="22" height="10" viewBox="0 0 22 10"><ellipse cx="10" cy="5" rx="8.500" ry="3.800" fill="#888" stroke="#111" stroke-width=".8"/><ellipse cx="10" cy="4" rx="5" ry="1.800" fill="#bbb"/></svg>
<div style="left:228px;top:271px;width:57px;height:14px;background:linear-gradient(#6a6a6a,#505050);border:1px solid;border-color:#999 #222 #222 #999"></div>
<span class="t" style="left:230px;top:270px;font:400 11px/16px 'DejaVu Sans','Liberation Sans',sans-serif;color:#e4e0cc;letter-spacing:-0.670px;">Show</span>
<svg class="a" style="left:261px;top:272px" width="24" height="12" viewBox="0 0 24 12"><path d="M1 6q10.500-9 21 0q-10.500 9-21 0z" fill="#fff" stroke="#111" stroke-width=".8"/><circle cx="11.500" cy="6" r="3.800" fill="#222"/><circle cx="11.500" cy="6" r="1.600" fill="#999"/></svg>
<div style="left:3px;top:289px;width:49px;height:15px;background:#6488e4"></div>
<span class="t" style="left:4.5px;top:287.3px;font:400 11.5px/16px 'DejaVu Sans','Liberation Sans',sans-serif;color:#e4e0cc;letter-spacing:-0.380px;">Metal 01</span>
<div style="left:2px;top:304px;width:48px;height:1px;background:#161616"></div>
<div class="btn" style="left:54px;top:290px;width:16px;height:14px;"></div>
<svg class="a" style="left:54px;top:290px" width="16" height="14" viewBox="0 0 16 14"><path d="M5.500 3.500v7l5-3.500z" fill="#e8e4d0"/></svg>
<div style="left:70px;top:290px;width:22px;height:14px;background:#007c52;border:1px solid;border-color:rgba(255,255,255,.45) rgba(0,0,0,.45) rgba(0,0,0,.45) rgba(255,255,255,.45)"></div>
<div class="btn" style="left:92px;top:290px;width:18px;height:14px;"></div>
<svg class="a" style="left:92px;top:290px" width="18" height="14" viewBox="0 0 18 14"><path d="M6.500 7v-2.500a2.500 2.500 0 0 1 5 0" stroke="#c8c8c8" stroke-width="1.400" fill="none"/><rect x="5" y="6.500" width="8" height="5.500" fill="#c0c0c0"/></svg>
<div class="bon" style="left:110px;top:290px;width:26px;height:14px;"></div>
<div style="left:122px;top:293px;width:2px;height:8px;background:#0a0a14"></div>
<span class="t" style="left:4.5px;top:303.3px;font:400 11.5px/16px 'DejaVu Sans','Liberation Sans',sans-serif;color:#e4e0cc;letter-spacing:-0.380px;">Metal 02</span>
<div style="left:2px;top:320px;width:48px;height:1px;background:#161616"></div>
<div class="btn" style="left:54px;top:306px;width:16px;height:14px;"></div>
<svg class="a" style="left:54px;top:306px" width="16" height="14" viewBox="0 0 16 14"><path d="M5.500 3.500v7l5-3.500z" fill="#e8e4d0"/></svg>
<div style="left:70px;top:306px;width:22px;height:14px;background:#3fb862;border:1px solid;border-color:rgba(255,255,255,.45) rgba(0,0,0,.45) rgba(0,0,0,.45) rgba(255,255,255,.45)"></div>
<div class="btn" style="left:92px;top:306px;width:18px;height:14px;"></div>
<svg class="a" style="left:92px;top:306px" width="18" height="14" viewBox="0 0 18 14"><path d="M6.500 7v-2.500a2.500 2.500 0 0 1 5 0" stroke="#c8c8c8" stroke-width="1.400" fill="none"/><rect x="5" y="6.500" width="8" height="5.500" fill="#c0c0c0"/></svg>
<div class="bon" style="left:110px;top:306px;width:26px;height:14px;"></div>
<div style="left:122px;top:309px;width:2px;height:8px;background:#0a0a14"></div>
<span class="t" style="left:4.5px;top:319.3px;font:400 11.5px/16px 'DejaVu Sans','Liberation Sans',sans-serif;color:#e4e0cc;letter-spacing:-0.380px;">Metal 03</span>
<div style="left:2px;top:336px;width:48px;height:1px;background:#161616"></div>
<div class="btn" style="left:54px;top:322px;width:16px;height:14px;"></div>
<svg class="a" style="left:54px;top:322px" width="16" height="14" viewBox="0 0 16 14"><path d="M5.500 3.500v7l5-3.500z" fill="#e8e4d0"/></svg>
<div style="left:70px;top:322px;width:22px;height:14px;background:#72e070;border:1px solid;border-color:rgba(255,255,255,.45) rgba(0,0,0,.45) rgba(0,0,0,.45) rgba(255,255,255,.45)"></div>
<div class="btn" style="left:92px;top:322px;width:18px;height:14px;"></div>
<svg class="a" style="left:92px;top:322px" width="18" height="14" viewBox="0 0 18 14"><path d="M6.500 7v-2.500a2.500 2.500 0 0 1 5 0" stroke="#c8c8c8" stroke-width="1.400" fill="none"/><rect x="5" y="6.500" width="8" height="5.500" fill="#c0c0c0"/></svg>
<div class="bon" style="left:110px;top:322px;width:26px;height:14px;"></div>
<div style="left:122px;top:325px;width:2px;height:8px;background:#0a0a14"></div>
<span class="t" style="left:4.5px;top:335.3px;font:400 11.5px/16px 'DejaVu Sans','Liberation Sans',sans-serif;color:#e4e0cc;letter-spacing:-0.380px;">Metal 04</span>
<div style="left:2px;top:352px;width:48px;height:1px;background:#161616"></div>
<div class="btn" style="left:54px;top:338px;width:16px;height:14px;"></div>
<svg class="a" style="left:54px;top:338px" width="16" height="14" viewBox="0 0 16 14"><path d="M5.500 3.500v7l5-3.500z" fill="#e8e4d0"/></svg>
<div style="left:70px;top:338px;width:22px;height:14px;background:#bff8b8;border:1px solid;border-color:rgba(255,255,255,.45) rgba(0,0,0,.45) rgba(0,0,0,.45) rgba(255,255,255,.45)"></div>
<div class="btn" style="left:92px;top:338px;width:18px;height:14px;"></div>
<svg class="a" style="left:92px;top:338px" width="18" height="14" viewBox="0 0 18 14"><path d="M6.500 7v-2.500a2.500 2.500 0 0 1 5 0" stroke="#c8c8c8" stroke-width="1.400" fill="none"/><rect x="5" y="6.500" width="8" height="5.500" fill="#c0c0c0"/></svg>
<div class="bon" style="left:110px;top:338px;width:26px;height:14px;"></div>
<div style="left:122px;top:341px;width:2px;height:8px;background:#0a0a14"></div>
<span class="t" style="left:4.5px;top:356.3px;font:400 11.5px/16px 'DejaVu Sans','Liberation Sans',sans-serif;color:#e4e0cc;letter-spacing:-0.413px;">Gem 01</span>
<div style="left:2px;top:373px;width:48px;height:1px;background:#161616"></div>
<div class="btn" style="left:54px;top:359px;width:16px;height:14px;"></div>
<svg class="a" style="left:54px;top:359px" width="16" height="14" viewBox="0 0 16 14"><path d="M5.500 3.500v7l5-3.500z" fill="#e8e4d0"/></svg>
<div style="left:70px;top:359px;width:22px;height:14px;background:#0434a8;border:1px solid;border-color:rgba(255,255,255,.45) rgba(0,0,0,.45) rgba(0,0,0,.45) rgba(255,255,255,.45)"></div>
<div class="btn" style="left:92px;top:359px;width:18px;height:14px;"></div>
<svg class="a" style="left:92px;top:359px" width="18" height="14" viewBox="0 0 18 14"><path d="M6.500 7v-2.500a2.500 2.500 0 0 1 5 0" stroke="#c8c8c8" stroke-width="1.400" fill="none"/><rect x="5" y="6.500" width="8" height="5.500" fill="#c0c0c0"/></svg>
<div class="bon" style="left:110px;top:359px;width:26px;height:14px;"></div>
<div style="left:122px;top:362px;width:2px;height:8px;background:#0a0a14"></div>
<span class="t" style="left:4.5px;top:372.3px;font:400 11.5px/16px 'DejaVu Sans','Liberation Sans',sans-serif;color:#e4e0cc;letter-spacing:-0.413px;">Gem 02</span>
<div style="left:2px;top:389px;width:48px;height:1px;background:#161616"></div>
<div class="btn" style="left:54px;top:375px;width:16px;height:14px;"></div>
<svg class="a" style="left:54px;top:375px" width="16" height="14" viewBox="0 0 16 14"><path d="M5.500 3.500v7l5-3.500z" fill="#e8e4d0"/></svg>
<div style="left:70px;top:375px;width:22px;height:14px;background:#3a70d0;border:1px solid;border-color:rgba(255,255,255,.45) rgba(0,0,0,.45) rgba(0,0,0,.45) rgba(255,255,255,.45)"></div>
<div class="btn" style="left:92px;top:375px;width:18px;height:14px;"></div>
<svg class="a" style="left:92px;top:375px" width="18" height="14" viewBox="0 0 18 14"><path d="M6.500 7v-2.500a2.500 2.500 0 0 1 5 0" stroke="#c8c8c8" stroke-width="1.400" fill="none"/><rect x="5" y="6.500" width="8" height="5.500" fill="#c0c0c0"/></svg>
<div class="bon" style="left:110px;top:375px;width:26px;height:14px;"></div>
<div style="left:122px;top:378px;width:2px;height:8px;background:#0a0a14"></div>
<span class="t" style="left:4.5px;top:388.3px;font:400 11.5px/16px 'DejaVu Sans','Liberation Sans',sans-serif;color:#e4e0cc;letter-spacing:-0.413px;">Gem 03</span>
<div style="left:2px;top:405px;width:48px;height:1px;background:#161616"></div>
<div class="btn" style="left:54px;top:391px;width:16px;height:14px;"></div>
<svg class="a" style="left:54px;top:391px" width="16" height="14" viewBox="0 0 16 14"><path d="M5.500 3.500v7l5-3.500z" fill="#e8e4d0"/></svg>
<div style="left:70px;top:391px;width:22px;height:14px;background:#88b4f8;border:1px solid;border-color:rgba(255,255,255,.45) rgba(0,0,0,.45) rgba(0,0,0,.45) rgba(255,255,255,.45)"></div>
<div class="btn" style="left:92px;top:391px;width:18px;height:14px;"></div>
<svg class="a" style="left:92px;top:391px" width="18" height="14" viewBox="0 0 18 14"><path d="M6.500 7v-2.500a2.500 2.500 0 0 1 5 0" stroke="#c8c8c8" stroke-width="1.400" fill="none"/><rect x="5" y="6.500" width="8" height="5.500" fill="#c0c0c0"/></svg>
<div class="bon" style="left:110px;top:391px;width:26px;height:14px;"></div>
<div style="left:122px;top:394px;width:2px;height:8px;background:#0a0a14"></div>
<span class="t" style="left:4.5px;top:404.3px;font:400 11.5px/16px 'DejaVu Sans','Liberation Sans',sans-serif;color:#e4e0cc;letter-spacing:-0.413px;">Gem 04</span>
<div style="left:2px;top:421px;width:48px;height:1px;background:#161616"></div>
<div class="btn" style="left:54px;top:407px;width:16px;height:14px;"></div>
<svg class="a" style="left:54px;top:407px" width="16" height="14" viewBox="0 0 16 14"><path d="M5.500 3.500v7l5-3.500z" fill="#e8e4d0"/></svg>
<div style="left:70px;top:407px;width:22px;height:14px;background:#b8d4fc;border:1px solid;border-color:rgba(255,255,255,.45) rgba(0,0,0,.45) rgba(0,0,0,.45) rgba(255,255,255,.45)"></div>
<div class="btn" style="left:92px;top:407px;width:18px;height:14px;"></div>
<svg class="a" style="left:92px;top:407px" width="18" height="14" viewBox="0 0 18 14"><path d="M6.500 7v-2.500a2.500 2.500 0 0 1 5 0" stroke="#c8c8c8" stroke-width="1.400" fill="none"/><rect x="5" y="6.500" width="8" height="5.500" fill="#c0c0c0"/></svg>
<div class="bon" style="left:110px;top:407px;width:26px;height:14px;"></div>
<div style="left:122px;top:410px;width:2px;height:8px;background:#0a0a14"></div>
<span class="t" style="left:153.5px;top:287.3px;font:400 11.5px/16px 'DejaVu Sans','Liberation Sans',sans-serif;color:#e4e0cc;letter-spacing:-0.214px;">User 01</span>
<div style="left:151px;top:304px;width:48px;height:1px;background:#161616"></div>
<div class="btn" style="left:204px;top:290px;width:16px;height:14px;"></div>
<svg class="a" style="left:204px;top:290px" width="16" height="14" viewBox="0 0 16 14"><path d="M5.500 3.500v7l5-3.500z" fill="#e8e4d0"/></svg>
<div style="left:220px;top:290px;width:22px;height:14px;background:#f00000;border:1px solid;border-color:rgba(255,255,255,.45) rgba(0,0,0,.45) rgba(0,0,0,.45) rgba(255,255,255,.45)"></div>
<div class="btn" style="left:242px;top:290px;width:18px;height:14px;"></div>
<svg class="a" style="left:242px;top:290px" width="18" height="14" viewBox="0 0 18 14"><path d="M6.500 7v-2a2.500 2.500 0 0 1 5 0v2" stroke="#f0c010" stroke-width="1.400" fill="none"/><rect x="5" y="6.500" width="8" height="5.500" fill="#f0c010"/></svg>
<div class="btn" style="left:260px;top:290px;width:26px;height:14px;"></div>
<svg class="a" style="left:260px;top:290px" width="26" height="14" viewBox="0 0 26 14"><circle cx="13" cy="7" r="2.800" fill="none" stroke="#6f9af5" stroke-width="1"/></svg>
<span class="t" style="left:153.5px;top:303.3px;font:400 11.5px/16px 'DejaVu Sans','Liberation Sans',sans-serif;color:#e4e0cc;letter-spacing:-0.214px;">User 02</span>
<div style="left:151px;top:320px;width:48px;height:1px;background:#161616"></div>
<div class="btn" style="left:204px;top:306px;width:16px;height:14px;"></div>
<svg class="a" style="left:204px;top:306px" width="16" height="14" viewBox="0 0 16 14"><path d="M5.500 3.500v7l5-3.500z" fill="#e8e4d0"/></svg>
<div style="left:220px;top:306px;width:22px;height:14px;background:#00e800;border:1px solid;border-color:rgba(255,255,255,.45) rgba(0,0,0,.45) rgba(0,0,0,.45) rgba(255,255,255,.45)"></div>
<div class="btn" style="left:242px;top:306px;width:18px;height:14px;"></div>
<svg class="a" style="left:242px;top:306px" width="18" height="14" viewBox="0 0 18 14"><path d="M6.500 7v-2.500a2.500 2.500 0 0 1 5 0" stroke="#c8c8c8" stroke-width="1.400" fill="none"/><rect x="5" y="6.500" width="8" height="5.500" fill="#c0c0c0"/></svg>
<div class="bon" style="left:260px;top:306px;width:26px;height:14px;"></div>
<div style="left:272px;top:309px;width:2px;height:8px;background:#0a0a14"></div>
<span class="t" style="left:153.5px;top:319.3px;font:400 11.5px/16px 'DejaVu Sans','Liberation Sans',sans-serif;color:#e4e0cc;letter-spacing:-0.214px;">User 03</span>
<div style="left:151px;top:336px;width:48px;height:1px;background:#161616"></div>
<div class="btn" style="left:204px;top:322px;width:16px;height:14px;"></div>
<svg class="a" style="left:204px;top:322px" width="16" height="14" viewBox="0 0 16 14"><path d="M5.500 3.500v7l5-3.500z" fill="#e8e4d0"/></svg>
<div style="left:220px;top:322px;width:22px;height:14px;background:#0000e8;border:1px solid;border-color:rgba(255,255,255,.45) rgba(0,0,0,.45) rgba(0,0,0,.45) rgba(255,255,255,.45)"></div>
<div class="btn" style="left:242px;top:322px;width:18px;height:14px;"></div>
<svg class="a" style="left:242px;top:322px" width="18" height="14" viewBox="0 0 18 14"><path d="M6.500 7v-2.500a2.500 2.500 0 0 1 5 0" stroke="#c8c8c8" stroke-width="1.400" fill="none"/><rect x="5" y="6.500" width="8" height="5.500" fill="#c0c0c0"/></svg>
<div class="bon" style="left:260px;top:322px;width:26px;height:14px;"></div>
<div style="left:272px;top:325px;width:2px;height:8px;background:#0a0a14"></div>
<span class="t" style="left:153.5px;top:335.3px;font:400 11.5px/16px 'DejaVu Sans','Liberation Sans',sans-serif;color:#e4e0cc;letter-spacing:-0.214px;">User 04</span>
<div style="left:151px;top:352px;width:48px;height:1px;background:#161616"></div>
<div class="btn" style="left:204px;top:338px;width:16px;height:14px;"></div>
<svg class="a" style="left:204px;top:338px" width="16" height="14" viewBox="0 0 16 14"><path d="M5.500 3.500v7l5-3.500z" fill="#e8e4d0"/></svg>
<div style="left:220px;top:338px;width:22px;height:14px;background:#888;border:1px solid;border-color:rgba(255,255,255,.45) rgba(0,0,0,.45) rgba(0,0,0,.45) rgba(255,255,255,.45)"></div>
<div class="btn" style="left:242px;top:338px;width:18px;height:14px;"></div>
<svg class="a" style="left:242px;top:338px" width="18" height="14" viewBox="0 0 18 14"><path d="M6.500 7v-2.500a2.500 2.500 0 0 1 5 0" stroke="#c8c8c8" stroke-width="1.400" fill="none"/><rect x="5" y="6.500" width="8" height="5.500" fill="#c0c0c0"/></svg>
<div class="bon" style="left:260px;top:338px;width:26px;height:14px;"></div>
<div style="left:272px;top:341px;width:2px;height:8px;background:#0a0a14"></div>
<span class="t" style="left:153.5px;top:356.3px;font:400 11.5px/16px 'DejaVu Sans','Liberation Sans',sans-serif;color:#e4e0cc;letter-spacing:-0.213px;">Heads</span>
<div style="left:151px;top:373px;width:48px;height:1px;background:#161616"></div>
<div class="btn" style="left:204px;top:359px;width:16px;height:14px;"></div>
<svg class="a" style="left:204px;top:359px" width="16" height="14" viewBox="0 0 16 14"><path d="M5.500 3.500v7l5-3.500z" fill="#e8e4d0"/></svg>
<div style="left:220px;top:359px;width:22px;height:14px;background:#7814a8;border:1px solid;border-color:rgba(255,255,255,.45) rgba(0,0,0,.45) rgba(0,0,0,.45) rgba(255,255,255,.45)"></div>
<div class="btn" style="left:242px;top:359px;width:18px;height:14px;"></div>
<svg class="a" style="left:242px;top:359px" width="18" height="14" viewBox="0 0 18 14"><path d="M6.500 7v-2.500a2.500 2.500 0 0 1 5 0" stroke="#c8c8c8" stroke-width="1.400" fill="none"/><rect x="5" y="6.500" width="8" height="5.500" fill="#c0c0c0"/></svg>
<div class="bon" style="left:260px;top:359px;width:26px;height:14px;"></div>
<div style="left:272px;top:362px;width:2px;height:8px;background:#0a0a14"></div>
<span class="t" style="left:153.5px;top:372.3px;font:400 11.5px/16px 'DejaVu Sans','Liberation Sans',sans-serif;color:#e4e0cc;letter-spacing:-0.561px;">Finger</span>
<div style="left:151px;top:389px;width:48px;height:1px;background:#161616"></div>
<div class="btn" style="left:204px;top:375px;width:16px;height:14px;"></div>
<svg class="a" style="left:204px;top:375px" width="16" height="14" viewBox="0 0 16 14"><path d="M5.500 3.500v7l5-3.500z" fill="#e8e4d0"/></svg>
<div style="left:220px;top:375px;width:22px;height:14px;background:#a83838;border:1px solid;border-color:rgba(255,255,255,.45) rgba(0,0,0,.45) rgba(0,0,0,.45) rgba(255,255,255,.45)"></div>
<div class="btn" style="left:242px;top:375px;width:18px;height:14px;"></div>
<svg class="a" style="left:242px;top:375px" width="18" height="14" viewBox="0 0 18 14"><path d="M6.500 7v-2.500a2.500 2.500 0 0 1 5 0" stroke="#c8c8c8" stroke-width="1.400" fill="none"/><rect x="5" y="6.500" width="8" height="5.500" fill="#c0c0c0"/></svg>
<div class="bon" style="left:260px;top:375px;width:26px;height:14px;"></div>
<div style="left:272px;top:378px;width:2px;height:8px;background:#0a0a14"></div>
<span class="t" style="left:153.5px;top:388.3px;font:400 11.5px/16px 'DejaVu Sans','Liberation Sans',sans-serif;color:#e4e0cc;letter-spacing:-0.303px;">Cutting</span>
<div style="left:151px;top:405px;width:48px;height:1px;background:#161616"></div>
<div class="btn" style="left:204px;top:391px;width:16px;height:14px;"></div>
<svg class="a" style="left:204px;top:391px" width="16" height="14" viewBox="0 0 16 14"><path d="M5.500 3.500v7l5-3.500z" fill="#e8e4d0"/></svg>
<div style="left:220px;top:391px;width:22px;height:14px;background:#f07000;border:1px solid;border-color:rgba(255,255,255,.45) rgba(0,0,0,.45) rgba(0,0,0,.45) rgba(255,255,255,.45)"></div>
<div class="btn" style="left:242px;top:391px;width:18px;height:14px;"></div>
<svg class="a" style="left:242px;top:391px" width="18" height="14" viewBox="0 0 18 14"><path d="M6.500 7v-2.500a2.500 2.500 0 0 1 5 0" stroke="#c8c8c8" stroke-width="1.400" fill="none"/><rect x="5" y="6.500" width="8" height="5.500" fill="#c0c0c0"/></svg>
<div class="bon" style="left:260px;top:391px;width:26px;height:14px;"></div>
<div style="left:272px;top:394px;width:2px;height:8px;background:#0a0a14"></div>
<span class="t" style="left:153.5px;top:404.3px;font:400 11.5px/16px 'DejaVu Sans','Liberation Sans',sans-serif;color:#e4e0cc;letter-spacing:-0.082px;">Creation</span>
<div style="left:151px;top:421px;width:48px;height:1px;background:#161616"></div>
<div class="btn" style="left:204px;top:407px;width:16px;height:14px;"></div>
<svg class="a" style="left:204px;top:407px" width="16" height="14" viewBox="0 0 16 14"><path d="M5.500 3.500v7l5-3.500z" fill="#e8e4d0"/></svg>
<div style="left:220px;top:407px;width:22px;height:14px;background:#f8b000;border:1px solid;border-color:rgba(255,255,255,.45) rgba(0,0,0,.45) rgba(0,0,0,.45) rgba(255,255,255,.45)"></div>
<div class="btn" style="left:242px;top:407px;width:18px;height:14px;"></div>
<svg class="a" style="left:242px;top:407px" width="18" height="14" viewBox="0 0 18 14"><path d="M6.500 7v-2.500a2.500 2.500 0 0 1 5 0" stroke="#c8c8c8" stroke-width="1.400" fill="none"/><rect x="5" y="6.500" width="8" height="5.500" fill="#c0c0c0"/></svg>
<div class="bon" style="left:260px;top:407px;width:26px;height:14px;"></div>
<div style="left:272px;top:410px;width:2px;height:8px;background:#0a0a14"></div>
<div style="left:139px;top:289px;width:5px;height:64px;background:linear-gradient(90deg,#86a8f8,#4f74d8)"></div>
<div style="left:139px;top:358px;width:5px;height:64px;background:linear-gradient(90deg,#86a8f8,#4f74d8)"></div>
<div style="left:289px;top:289px;width:5px;height:64px;background:linear-gradient(90deg,#86a8f8,#4f74d8)"></div>
<div style="left:289px;top:358px;width:5px;height:64px;background:linear-gradient(90deg,#86a8f8,#4f74d8)"></div>
<div style="left:37px;top:433px;width:226px;height:1px;background:#111"></div>
<div style="left:37px;top:434px;width:226px;height:1px;background:#555"></div>
<svg class="a" style="left:144px;top:427px" width="12" height="12" viewBox="0 0 12 12"><circle cx="6" cy="6" r="5.300" fill="#5a5850" stroke="#999" stroke-width=".8"/><path d="M3.500 5h5l-2.500 3z" fill="#e8e8e0"/></svg>
<div class="hdr" style="left:0px;top:444px;width:300px;height:14px;"></div>
<span class="t" style="left:4px;top:444px;font:700 11px/14px 'DejaVu Sans','Liberation Sans',sans-serif;color:#0a0a0a;letter-spacing:0.376px;">PROJECTS</span>
<div class="xb" style="left:286px;top:446px;width:12px;height:11px;"><svg width="10" height="9" viewBox="0 0 10 9" style="display:block"><path d="M1.5 1l7 7M8.5 1l-7 7" stroke="#e0202a" stroke-width="1.1"/></svg></div>
<div style="left:0px;top:459px;width:300px;height:98px;background:#4f4f4f"></div>
<div style="left:0px;top:459px;width:83px;height:97px;background:#555"></div>
<div style="left:0px;top:461px;width:81px;height:14px;background:#4a68b4"></div>
<span class="t" style="left:4px;top:460px;font:400 10.5px/16px 'DejaVu Sans','Liberation Sans',sans-serif;color:#dfe4f4;letter-spacing:-0.481px;">Default</span>
<div style="left:83px;top:459px;width:8px;height:97px;background:#5a5a5a;border-left:1px solid #333"></div>
<div style="left:84px;top:465px;width:6px;height:10px;background:#888;border:1px solid #aaa"></div>
<svg class="a" style="left:83px;top:459px" width="8" height="97" viewBox="0 0 8 97"><path d="M1.500 5l2.500-3 2.500 3zM1.500 92l2.500 3 2.500-3z" fill="#999"/><path d="M4 12v78" stroke="#777" stroke-width="1"/></svg>
<div style="left:94px;top:459px;width:3px;height:120px;background:#2a2a2a"></div>
<div style="left:98px;top:466px;width:39px;height:71px;background:#000;border:1px solid #777"></div>
<div style="left:121px;top:466px;width:16px;height:12px;background:#444;border:1px solid #888"></div>
<svg class="a" style="left:121px;top:466px" width="16" height="12" viewBox="0 0 16 12"><path d="M6 2.500v7l5-3.500z" fill="#e8e4d0"/></svg>
<div style="left:141px;top:466px;width:76px;height:71px;background:#000;border:1px solid #777"></div>
<div style="left:201px;top:466px;width:16px;height:12px;background:#444;border:1px solid #888"></div>
<svg class="a" style="left:201px;top:466px" width="16" height="12" viewBox="0 0 16 12"><path d="M6 2.500v7l5-3.500z" fill="#e8e4d0"/></svg>
<span class="t" style="left:144px;top:466px;font:400 10px/13px 'DejaVu Sans','Liberation Sans',sans-serif;color:#eee;">38</span>
<div style="left:221px;top:466px;width:76px;height:71px;background:#3a3a3a;border:1px solid #777"></div>
<div style="left:281px;top:466px;width:16px;height:12px;background:#444;border:1px solid #888"></div>
<svg class="a" style="left:281px;top:466px" width="16" height="12" viewBox="0 0 16 12"><path d="M6 2.500v7l5-3.500z" fill="#e8e4d0"/></svg>
<span class="t" style="left:224px;top:466px;font:400 10px/13px 'DejaVu Sans','Liberation Sans',sans-serif;color:#eee;">39</span>
<svg class="a" style="left:98px;top:478px" width="39" height="58" viewBox="0 0 39 58"><g fill="#8fa0f0" stroke="#d8c8ff" stroke-width=".6"><rect x="2.0" y="4.0" width="6" height="7" transform="rotate(12 2 4)"/><rect x="9.0" y="4.0" width="6" height="7" transform="rotate(12 9 4)"/><rect x="16.0" y="4.0" width="6" height="7" transform="rotate(12 16 4)"/><rect x="2.8" y="12.0" width="6" height="7" transform="rotate(12 2 12)"/><rect x="9.8" y="12.0" width="6" height="7" transform="rotate(12 9 12)"/><rect x="16.8" y="12.0" width="6" height="7" transform="rotate(12 16 12)"/><rect x="3.6" y="20.0" width="6" height="7" transform="rotate(12 2 20)"/><rect x="10.6" y="20.0" width="6" height="7" transform="rotate(12 9 20)"/><rect x="17.6" y="20.0" width="6" height="7" transform="rotate(12 16 20)"/><rect x="4.4" y="28.0" width="6" height="7" transform="rotate(12 2 28)"/><rect x="11.4" y="28.0" width="6" height="7" transform="rotate(12 9 28)"/><rect x="18.4" y="28.0" width="6" height="7" transform="rotate(12 16 28)"/><rect x="5.2" y="36.0" width="6" height="7" transform="rotate(12 2 36)"/><rect x="12.2" y="36.0" width="6" height="7" transform="rotate(12 9 36)"/><rect x="19.2" y="36.0" width="6" height="7" transform="rotate(12 16 36)"/><rect x="6.0" y="44.0" width="6" height="7" transform="rotate(12 2 44)"/><rect x="13.0" y="44.0" width="6" height="7" transform="rotate(12 9 44)"/><rect x="20.0" y="44.0" width="6" height="7" transform="rotate(12 16 44)"/></g><path d="M2 52l16 4" stroke="#0c9060" stroke-width="3"/></svg>
<svg class="a" style="left:141px;top:466px" width="76" height="71" viewBox="0 0 76 71"><ellipse cx="39" cy="40" rx="12" ry="24" transform="rotate(-14 39 40)" fill="none" stroke="#0e9a68" stroke-width="3.600"/><ellipse cx="39" cy="40" rx="12" ry="24" transform="rotate(-14 39 40)" fill="none" stroke="#4fd8a8" stroke-width=".9"/><path d="M43 9q10 14 9 38" stroke="#a8b4ff" stroke-width="4" fill="none"/><path d="M43 9q10 14 9 38" stroke="#e4e0ff" stroke-width="1.200" fill="none" stroke-dasharray="1.500 2"/><ellipse cx="36" cy="10" rx="7" ry="5" fill="#2838b8"/><ellipse cx="42" cy="9" rx="5" ry="4" fill="#a8b4ff"/></svg>
<div style="left:98px;top:539px;width:13px;height:15px;background:#5a5a5a;border:1px solid;border-color:#8a8a8a #2a2a2a #2a2a2a #8a8a8a"></div>
<svg class="a" style="left:98px;top:539px" width="13" height="15" viewBox="0 0 13 15"><path d="M2.5 3.500h8v8h-8z" fill="none" stroke="#f0f0e8" stroke-width="1.200"/><path d="M4.5 3.500v3h4v-3M4.5 11.500v-2.500h4v2.500" stroke="#f0f0e8" stroke-width="1" fill="none"/></svg>
<div style="left:112px;top:539px;width:25px;height:15px;background:#5a5a5a;border:1px solid;border-color:#8a8a8a #2a2a2a #2a2a2a #8a8a8a"></div>
<svg class="a" style="left:112px;top:539px" width="25" height="15" viewBox="0 0 25 15"><path d="M9.0 4l7 7M16.0 4l-7 7" stroke="#f0f0e8" stroke-width="2"/></svg>
<div style="left:141px;top:539px;width:25px;height:15px;background:#5a5a5a;border:1px solid;border-color:#8a8a8a #2a2a2a #2a2a2a #8a8a8a"></div>
<svg class="a" style="left:141px;top:539px" width="25" height="15" viewBox="0 0 25 15"><path d="M12.5 4l-4 4.500h2.500v3h3v-3h2.500z" fill="#f0f0e8"/></svg>
<div style="left:166px;top:539px;width:25px;height:15px;background:#5a5a5a;border:1px solid;border-color:#8a8a8a #2a2a2a #2a2a2a #8a8a8a"></div>
<svg class="a" style="left:166px;top:539px" width="25" height="15" viewBox="0 0 25 15"><path d="M8.5 3.500h8v8h-8z" fill="none" stroke="#f0f0e8" stroke-width="1.200"/><path d="M10.5 3.500v3h4v-3M10.5 11.500v-2.500h4v2.500" stroke="#f0f0e8" stroke-width="1" fill="none"/></svg>
<div style="left:191px;top:539px;width:26px;height:15px;background:#5a5a5a;border:1px solid;border-color:#8a8a8a #2a2a2a #2a2a2a #8a8a8a"></div>
<svg class="a" style="left:191px;top:539px" width="26" height="15" viewBox="0 0 26 15"><path d="M9.5 4l7 7M16.5 4l-7 7" stroke="#f0f0e8" stroke-width="2"/></svg>
<div style="left:221px;top:539px;width:25px;height:15px;background:#5a5a5a;border:1px solid;border-color:#8a8a8a #2a2a2a #2a2a2a #8a8a8a"></div>
<svg class="a" style="left:221px;top:539px" width="25" height="15" viewBox="0 0 25 15"><path d="M12.5 4l-4 4.500h2.500v3h3v-3h2.500z" fill="#f0f0e8"/></svg>
<div style="left:246px;top:539px;width:25px;height:15px;background:#5a5a5a;border:1px solid;border-color:#8a8a8a #2a2a2a #2a2a2a #8a8a8a"></div>
<svg class="a" style="left:246px;top:539px" width="25" height="15" viewBox="0 0 25 15"><path d="M8.5 3.500h8v8h-8z" fill="none" stroke="#999" stroke-width="1.200"/><path d="M10.5 3.500v3h4v-3M10.5 11.500v-2.500h4v2.500" stroke="#999" stroke-width="1" fill="none"/></svg>
<div style="left:271px;top:539px;width:26px;height:15px;background:#5a5a5a;border:1px solid;border-color:#8a8a8a #2a2a2a #2a2a2a #8a8a8a"></div>
<svg class="a" style="left:271px;top:539px" width="26" height="15" viewBox="0 0 26 15"><path d="M9.5 4l7 7M16.5 4l-7 7" stroke="#999" stroke-width="2"/></svg>
<div style="left:0px;top:556px;width:300px;height:23px;background:#4f4f4f"></div>
<div style="left:0px;top:578px;width:300px;height:1px;background:#1c1c1c"></div>
<div style="left:0px;top:556px;width:94px;height:1px;background:#3a3a3a"></div>
<div style="left:2px;top:559px;width:24px;height:16px;background:#5a5a5a;border:1px solid;border-color:#8a8a8a #2a2a2a #2a2a2a #8a8a8a"></div>
<div style="left:27px;top:559px;width:24px;height:16px;background:#5a5a5a;border:1px solid;border-color:#8a8a8a #2a2a2a #2a2a2a #8a8a8a"></div>
<div style="left:52px;top:559px;width:42px;height:16px;background:#5a5a5a;border:1px solid;border-color:#8a8a8a #2a2a2a #2a2a2a #8a8a8a"></div>
<svg class="a" style="left:2px;top:559px" width="24" height="16" viewBox="0 0 24 16"><path d="M12 3.500v9M7.500 8h9" stroke="#f0f0e8" stroke-width="2"/></svg>
<svg class="a" style="left:27px;top:559px" width="24" height="16" viewBox="0 0 24 16"><path d="M12 3l-4.500 5h3v5h3v-5h3z" fill="#f0f0e8"/></svg>
<span class="t" style="left:52px;top:559px;font:700 10px/16px 'DejaVu Sans','Liberation Sans',sans-serif;color:#f0f0e8;width:42px;text-align:center;">Mngr</span>
<div style="left:99px;top:566px;width:180px;height:3px;background:#777;border:1px solid #444"></div>
<div style="left:271px;top:561px;width:10px;height:13px;background:#666;border:1px solid #999"></div>
<div style="left:283px;top:560px;width:15px;height:15px;background:#5a5a5a;border:1px solid;border-color:#8a8a8a #2a2a2a #2a2a2a #8a8a8a"></div>
<svg class="a" style="left:283px;top:560px" width="15" height="15" viewBox="0 0 15 15"><path d="M7.500 3.500v8M3.500 7.500h8" stroke="#f0f0e8" stroke-width="1.300"/></svg>
<div style="left:37px;top:586px;width:226px;height:1px;background:#111"></div>
<div style="left:37px;top:587px;width:226px;height:1px;background:#555"></div>
<svg class="a" style="left:144px;top:580px" width="12" height="12" viewBox="0 0 12 12"><circle cx="6" cy="6" r="5.300" fill="#5a5850" stroke="#999" stroke-width=".8"/><path d="M3.500 5h5l-2.500 3z" fill="#e8e8e0"/></svg>
<div style="left:300px;top:44px;width:1620px;height:996px;background:#bdd3ec;border-top:1px solid #2b2b2b;border-left:1px solid #e4ecf4"></div>
<div style="left:301px;top:45px;width:1619px;height:32px;background:linear-gradient(#9dbbdf 0,#a9c3e3 8px,#c4d7ee 20px,#dbe7f4 100%)"></div>
<div style="left:1918px;top:76px;width:2px;height:964px;background:#0a1a24"></div>
<div style="left:308px;top:76px;width:1604px;height:956px;background:#d9e1e3"></div>
<div style="left:301px;top:1038.5px;width:1619px;height:1.5px;background:#35b4de"></div>
<svg class="a" style="left:310px;top:55px;" width="16" height="16" viewBox="0 0 16 16"><rect width="16" height="16" fill="#111"/><path d="M1 5q2-3 5-2l3 2 5-3-1 4-3 4-1 4h-4l-1-3-3-1z" fill="#e4e4e4"/><circle cx="4.500" cy="7" r=".9" fill="#e02020"/></svg>
<span class="t" style="left:334px;top:57px;font:400 12px/15px 'Liberation Sans',sans-serif;color:#0a0a1a;letter-spacing:-0.194px;">D:\NECKLACE\13\windos 1.3dm (16401 KB) - Rhinoceros 5.0 Commercial</span>
<div style="left:1810px;top:55px;width:31px;height:17px;border-radius:3px;border:1px solid #5f7594;background:linear-gradient(#c5d8ef 0,#b7cde9 45%,#9db8db 50%,#b4cbe8 100%);box-shadow:inset 0 0 0 1px rgba(255,255,255,.5)"></div>
<div style="left:1844px;top:55px;width:31px;height:17px;border-radius:3px;border:1px solid #5f7594;background:linear-gradient(#c5d8ef 0,#b7cde9 45%,#9db8db 50%,#b4cbe8 100%);box-shadow:inset 0 0 0 1px rgba(255,255,255,.5)"></div>
<div style="left:1878px;top:55px;width:32px;height:17px;border-radius:3px;border:1px solid #5a1418;background:linear-gradient(#e8a090 0,#d8705c 45%,#c23a24 50%,#c9513c 100%);box-shadow:inset 0 0 0 1px rgba(255,255,255,.35)"></div>
<svg class="a" style="left:1810px;top:55px;" width="31" height="17" viewBox="0 0 31 17"><rect x="10.500" y="8.500" width="10" height="3" rx="1" fill="#f4f4f4" stroke="#555" stroke-width=".8"/></svg>
<svg class="a" style="left:1844px;top:55px;" width="31" height="17" viewBox="0 0 31 17"><rect x="12.500" y="3.500" width="8" height="7" fill="none" stroke="#555" stroke-width="2.200"/><rect x="12.500" y="3.500" width="8" height="7" fill="none" stroke="#f4f4f4" stroke-width=".9"/><rect x="9.500" y="6.500" width="8" height="7" fill="#b0c6e4" stroke="#555" stroke-width="2.200"/><rect x="9.500" y="6.500" width="8" height="7" fill="none" stroke="#f4f4f4" stroke-width=".9"/></svg>
<svg class="a" style="left:1878px;top:55px;" width="32" height="17" viewBox="0 0 32 17"><path d="M11.500 4.500l9 8M20.500 4.500l-9 8" stroke="#444" stroke-width="4.200"/><path d="M11.500 4.500l9 8M20.500 4.500l-9 8" stroke="#f6f6f6" stroke-width="2.400"/></svg>
<div style="left:309px;top:78px;width:1585px;height:30px;background:#82b48b"></div>
<div style="left:309px;top:107px;width:1602px;height:1px;background:#2b2f33"></div>
<div style="left:309px;top:108px;width:1586px;height:20px;background:#82b48b"></div>
<div style="left:1894px;top:78px;width:18px;height:30px;background:#f3f3f3"></div>
<svg class="a" style="left:1894px;top:78px;" width="18" height="30" viewBox="0 0 18 30"><path d="M5.500 10l3.500-4 3.500 4M5.500 20l3.500 4 3.500-4" stroke="#555" stroke-width="1.600" fill="none"/></svg>
<div style="left:1895px;top:108px;width:17px;height:20px;background:#d9e1e3"></div>
<div style="left:1896px;top:110px;width:14px;height:8px;background:#f0f0f0;border:1px solid #aaa"></div>
<div style="left:1896px;top:119px;width:14px;height:8px;background:#f0f0f0;border:1px solid #aaa"></div>
<svg class="a" style="left:1896px;top:110px;" width="14" height="17" viewBox="0 0 14 17"><path d="M4.500 5.500l2.500-3 2.500 3zM4.500 11.500l2.500 3 2.500-3z" fill="#111"/></svg>
<span class="t" style="left:310px;top:78px;font:400 13px/17px 'Liberation Sans',sans-serif;color:#0a0a0a;letter-spacing:-0.032px;">Volume Total: 64.7020925935053</span>
<span class="t" style="left:310px;top:109px;font:700 13px/17px 'Liberation Sans',sans-serif;color:#0a0a0a;letter-spacing:0.077px;">Command:</span>
<div style="left:383px;top:109px;width:1px;height:16px;background:#804080"></div>
<div style="left:309px;top:131px;width:1603px;height:1px;background:#c3cbcd"></div>
<div style="left:309px;top:132px;width:1603px;height:1px;background:#eef2f3"></div>
<div style="left:309px;top:150px;width:1603px;height:34px;background:linear-gradient(#8fbd95 0,#a9cbad 30%,#c9d9cf 65%,#d9e1e3 100%)"></div>
<svg class="a" style="left:309px;top:135.5px;" width="1603" height="16" viewBox="0 0 1603 16"><path d="M0.5 15 L5.5 4 Q7.5 1 10.5 1 H58.80000000000001 Q62.80000000000001 1 62.80000000000001 5 V15" fill="#8fbd95" stroke="#5a7a60" stroke-width="1"/><path d="M58 14.5 L66 3 Q67.5 1.500 70 1.500 H117.5 Q120.5 1.500 120.5 4 V14.500" fill="#d6e6ea" stroke="#3a4248" stroke-width="1"/><path d="M116 14.5 L124 3 Q125.5 1.500 128 1.500 H178.39999999999998 Q181.39999999999998 1.500 181.39999999999998 4 V14.500" fill="#d6e6ea" stroke="#3a4248" stroke-width="1"/><path d="M177 14.5 L185 3 Q186.5 1.500 189 1.500 H231.79999999999995 Q234.79999999999995 1.500 234.79999999999995 4 V14.500" fill="#d6e6ea" stroke="#3a4248" stroke-width="1"/><path d="M230 14.5 L238 3 Q239.5 1.500 242 1.500 H280.5 Q283.5 1.500 283.5 4 V14.500" fill="#d6e6ea" stroke="#3a4248" stroke-width="1"/><path d="M279 14.5 L287 3 Q288.5 1.500 291 1.500 H375.29999999999995 Q378.29999999999995 1.500 378.29999999999995 4 V14.500" fill="#d6e6ea" stroke="#3a4248" stroke-width="1"/><path d="M374 14.5 L382 3 Q383.5 1.500 386 1.500 H430.9 Q433.9 1.500 433.9 4 V14.500" fill="#d6e6ea" stroke="#3a4248" stroke-width="1"/><path d="M429 14.5 L437 3 Q438.5 1.500 441 1.500 H497.20000000000005 Q500.20000000000005 1.500 500.20000000000005 4 V14.500" fill="#d6e6ea" stroke="#3a4248" stroke-width="1"/><path d="M496 14.5 L504 3 Q505.5 1.500 508 1.500 H574 Q577 1.500 577 4 V14.500" fill="#d6e6ea" stroke="#3a4248" stroke-width="1"/><path d="M573 14.5 L581 3 Q582.5 1.500 585 1.500 H657 Q660 1.500 660 4 V14.500" fill="#d6e6ea" stroke="#3a4248" stroke-width="1"/><path d="M656 14.5 L664 3 Q665.5 1.500 668 1.500 H729.5 Q732.5 1.500 732.5 4 V14.500" fill="#d6e6ea" stroke="#3a4248" stroke-width="1"/><path d="M728 14.5 L736 3 Q737.5 1.500 740 1.500 H803 Q806 1.500 806 4 V14.500" fill="#d6e6ea" stroke="#3a4248" stroke-width="1"/><path d="M802 14.5 L810 3 Q811.5 1.500 814 1.500 H887 Q890 1.500 890 4 V14.500" fill="#d6e6ea" stroke="#3a4248" stroke-width="1"/><path d="M886 14.5 L894 3 Q895.5 1.500 898 1.500 H943 Q946 1.500 946 4 V14.500" fill="#d6e6ea" stroke="#3a4248" stroke-width="1"/><path d="M942 14.5 L950 3 Q951.5 1.500 954 1.500 H1009.3 Q1012.3 1.500 1012.3 4 V14.500" fill="#d6e6ea" stroke="#3a4248" stroke-width="1"/><path d="M62.80000000000001 14.500H1603" stroke="#3a4248" stroke-width="1"/></svg>
<span class="t" style="left:318.4px;top:137px;font:400 12px/15px 'Liberation Sans',sans-serif;color:#0a0a14;letter-spacing:-0.662px;">Standard</span>
<span class="t" style="left:378.8px;top:137px;font:400 12px/15px 'Liberation Sans',sans-serif;color:#0a0a14;letter-spacing:-0.551px;">CPlanes</span>
<span class="t" style="left:438.1px;top:137px;font:400 12px/15px 'Liberation Sans',sans-serif;color:#0a0a14;letter-spacing:-0.542px;">Set View</span>
<span class="t" style="left:498px;top:137px;font:400 12px/15px 'Liberation Sans',sans-serif;color:#0a0a14;letter-spacing:-0.278px;">Display</span>
<span class="t" style="left:551.9px;top:137px;font:400 12px/15px 'Liberation Sans',sans-serif;color:#0a0a14;letter-spacing:-0.375px;">Select</span>
<span class="t" style="left:600.1px;top:137px;font:400 12px/15px 'Liberation Sans',sans-serif;color:#0a0a14;letter-spacing:-0.469px;">Viewport Layout</span>
<span class="t" style="left:693.3px;top:137px;font:400 12px/15px 'Liberation Sans',sans-serif;color:#0a0a14;letter-spacing:-0.113px;">Visibility</span>
<span class="t" style="left:750.7px;top:137px;font:400 12px/15px 'Liberation Sans',sans-serif;color:#0a0a14;letter-spacing:-0.458px;">Transform</span>
<span class="t" style="left:816px;top:137px;font:400 12px/15px 'Liberation Sans',sans-serif;color:#0a0a14;letter-spacing:-0.258px;">Curve Tools</span>
<span class="t" style="left:892.3px;top:137px;font:400 12px/15px 'Liberation Sans',sans-serif;color:#0a0a14;letter-spacing:-0.414px;">Surface Tools</span>
<span class="t" style="left:975.7px;top:137px;font:400 12px/15px 'Liberation Sans',sans-serif;color:#0a0a14;letter-spacing:-0.192px;">Solid Tools</span>
<span class="t" style="left:1048.2px;top:137px;font:400 12px/15px 'Liberation Sans',sans-serif;color:#0a0a14;letter-spacing:-0.327px;">Mesh Tools</span>
<span class="t" style="left:1122.2px;top:137px;font:400 12px/15px 'Liberation Sans',sans-serif;color:#0a0a14;letter-spacing:-0.340px;">Render Tools</span>
<span class="t" style="left:1206px;top:137px;font:400 12px/15px 'Liberation Sans',sans-serif;color:#0a0a14;letter-spacing:-0.414px;">Drafting</span>
<span class="t" style="left:1262.1px;top:137px;font:400 12px/15px 'Liberation Sans',sans-serif;color:#0a0a14;letter-spacing:-0.521px;">New in V5</span>
<svg class="a" style="left:1894px;top:134px;" width="16" height="16" viewBox="0 0 16 16"><circle cx="8" cy="8" r="5" fill="none" stroke="#8a9298" stroke-width="1.200" stroke-dasharray="2.200 1.700"/><circle cx="8" cy="8" r="4" fill="none" stroke="#8a9298" stroke-width="1"/><circle cx="8" cy="8" r="1.600" fill="none" stroke="#8a9298" stroke-width="1"/></svg>
<svg class="a" style="left:1894px;top:194px;" width="16" height="16" viewBox="0 0 16 16"><circle cx="8" cy="8" r="5" fill="none" stroke="#8a9298" stroke-width="1.200" stroke-dasharray="2.200 1.700"/><circle cx="8" cy="8" r="4" fill="none" stroke="#8a9298" stroke-width="1"/><circle cx="8" cy="8" r="1.600" fill="none" stroke="#8a9298" stroke-width="1"/></svg>
<svg class="a" style="left:310px;top:154px" width="24" height="24" viewBox="0 0 26 26"><path d="M6 2h9l5 5v17h-14z" fill="#fff" stroke="#1a1a1a" stroke-width="1.100"/><path d="M15 2v5h5" fill="#ddd" stroke="#1a1a1a" stroke-width="1"/></svg>
<svg class="a" style="left:339px;top:154px" width="24" height="24" viewBox="0 0 26 26"><path d="M3 7h7l2 2h9v4h-18z" fill="#f0c030" stroke="#1a1a1a" stroke-width="1"/><path d="M3 22l4-10h18l-5 10z" fill="#f8d858" stroke="#1a1a1a" stroke-width="1"/></svg>
<svg class="a" style="left:366px;top:154px" width="24" height="24" viewBox="0 0 26 26"><path d="M3 3h19l2 2v19h-21z" fill="#c9b040" stroke="#1a1a1a" stroke-width="1.100"/><rect x="7" y="3.500" width="12" height="9" fill="#f4f4f4" stroke="#555" stroke-width=".7"/><rect x="8" y="16" width="10" height="8" fill="#8a7a30" stroke="#444" stroke-width=".7"/><rect x="10" y="18" width="3" height="5" fill="#ddd"/><path d="M25 19v6h-6z" fill="#555"/></svg>
<svg class="a" style="left:394px;top:154px" width="24" height="24" viewBox="0 0 26 26"><path d="M8 3h10l3 9h-16z" fill="#fff" stroke="#1a1a1a" stroke-width="1"/><path d="M2 12h22v8h-22z" fill="#e8e8e8" stroke="#1a1a1a" stroke-width="1.100"/><path d="M5 20h16v4h-16z" fill="#fff" stroke="#1a1a1a" stroke-width="1"/><path d="M5 15h16" stroke="#1a1a1a" stroke-width="2"/><path d="M11 6l4 2" stroke="#888" stroke-width="2"/></svg>
<svg class="a" style="left:425px;top:154px" width="24" height="24" viewBox="0 0 26 26"><path d="M4 6h14v14l-4 5h-10z" fill="#fff" stroke="#1a1a1a" stroke-width="1.100"/><path d="M12 4l8-2v6" fill="#bbb" stroke="#1a1a1a" stroke-width=".9"/><path d="M16 1l6 1-1 5z" fill="#666"/></svg>
<svg class="a" style="left:450px;top:154px" width="24" height="24" viewBox="0 0 26 26"><path d="M7 3l9 15M19 3l-9 15" stroke="#1a1a1a" stroke-width="1.300"/><ellipse cx="8.500" cy="21" rx="2.200" ry="3.500" fill="none" stroke="#667" stroke-width="1.200" transform="rotate(-20 8.500 21)"/><ellipse cx="17.500" cy="21" rx="2.200" ry="3.500" fill="none" stroke="#667" stroke-width="1.200" transform="rotate(20 17.500 21)"/></svg>
<svg class="a" style="left:479px;top:154px" width="24" height="24" viewBox="0 0 26 26"><path d="M5 3h8l3 3v12h-11z" fill="#fff" stroke="#1a1a1a" stroke-width="1.100"/><path d="M10 8h8l3 3v13h-11z" fill="#fff" stroke="#1a1a1a" stroke-width="1.100"/></svg>
<svg class="a" style="left:507px;top:154px" width="24" height="24" viewBox="0 0 26 26"><rect x="6" y="5" width="15" height="19" rx="2" fill="#f4e070" stroke="#1a1a1a" stroke-width="1.100"/><rect x="10" y="2.500" width="7" height="4" rx="1" fill="#ddd" stroke="#1a1a1a" stroke-width=".9"/></svg>
<svg class="a" style="left:536px;top:154px" width="24" height="24" viewBox="0 0 26 26"><path d="M3 20q2-12 14-10l5 3" fill="none" stroke="#1a1a1a" stroke-width="3.200"/><path d="M1 15l3 9 7-6z" fill="#1a1a1a"/><path d="M25 19v6h-6z" fill="#555"/></svg>
<svg class="a" style="left:562px;top:154px" width="24" height="24" viewBox="0 0 26 26"><path d="M7 12v-7q1.500-1.500 3 0v-2q1.500-1.500 3 0v1q1.500-1.500 3 0v2q1.500-1.500 3 0v11q0 6-6 8h-3q-3-2-6-9q0-2 3 0z" fill="#fff" stroke="#1a1a1a" stroke-width="1.100"/><path d="M10 5v7M13 4v8M16 6v6" stroke="#1a1a1a" stroke-width=".9"/></svg>
<svg class="a" style="left:591px;top:154px" width="24" height="24" viewBox="0 0 26 26"><ellipse cx="13" cy="14" rx="11" ry="4" fill="none" stroke="#778" stroke-width="1.100"/><ellipse cx="13" cy="14" rx="3.500" ry="11" fill="none" stroke="#778" stroke-width="1.100"/><path d="M9 14h8M13 10v8" stroke="#1a1a1a" stroke-width="1.600"/></svg>
<svg class="a" style="left:619px;top:154px" width="24" height="24" viewBox="0 0 26 26"><circle cx="15" cy="9" r="6.500" fill="#f4f8fa" stroke="#1a1a1a" stroke-width="1.200"/><path d="M10.500 14l-8 9" stroke="#1a1a1a" stroke-width="2.400"/><path d="M12 8h6M15 5v6M12.500 12.500h5" stroke="#1a1a1a" stroke-width="1"/></svg>
<svg class="a" style="left:647px;top:154px" width="24" height="24" viewBox="0 0 26 26"><rect x="8" y="2" width="16" height="13" fill="none" stroke="#1a1a1a" stroke-width="1.100" stroke-dasharray="2 1.500"/><circle cx="11" cy="14" r="6" fill="#eef4f6" stroke="#1a1a1a" stroke-width="1.200"/><path d="M7 19l-5 6" stroke="#1a1a1a" stroke-width="2.400"/></svg>
<svg class="a" style="left:675px;top:154px" width="24" height="24" viewBox="0 0 26 26"><circle cx="14" cy="11" r="7" fill="#eef4f6" stroke="#1a1a1a" stroke-width="1.200"/><path d="M9 16l-6 7" stroke="#1a1a1a" stroke-width="2.400"/><path d="M1 6v-5h5M20 1h5v5M25 20v5h-5M6 25h-5v-5" fill="none" stroke="#1a1a1a" stroke-width="2"/></svg>
<svg class="a" style="left:704px;top:154px" width="24" height="24" viewBox="0 0 26 26"><circle cx="15" cy="9" r="6.500" fill="#f4f8fa" stroke="#1a1a1a" stroke-width="1.200"/><path d="M10.500 14l-8 9" stroke="#1a1a1a" stroke-width="2.400"/><circle cx="16" cy="7" r="3.300" fill="#f0d820" stroke="#555" stroke-width=".7"/><circle cx="13" cy="11" r="3" fill="#f0d820" stroke="#555" stroke-width=".7"/></svg>
<svg class="a" style="left:732px;top:154px" width="24" height="24" viewBox="0 0 26 26"><path d="M4 10q8-10 18-3" fill="none" stroke="#1a1a1a" stroke-width="2.600"/><path d="M1 6l2 9 7-5z" fill="#1a1a1a"/><circle cx="15" cy="16" r="5" fill="#eef4f6" stroke="#1a1a1a" stroke-width="1.100"/><path d="M19 20l5 5" stroke="#1a1a1a" stroke-width="2.200"/><path d="M25 19v6h-6z" fill="#555"/></svg>
<svg class="a" style="left:759px;top:154px" width="24" height="24" viewBox="0 0 26 26"><rect x="2.500" y="2.500" width="21" height="20" fill="#ccc" stroke="#1a1a1a" stroke-width="1.300"/><path d="M13 2.500v20M2.500 12.500h21" stroke="#1a1a1a" stroke-width="1.300"/><rect x="14" y="3.500" width="9" height="1.500" fill="#4060d0"/><path d="M25 19v6h-6z" fill="#555"/></svg>
<svg class="a" style="left:786px;top:154px" width="24" height="24" viewBox="0 0 26 26"><path d="M2 15q0-3 4-3l3-5h8l3 5q4 0 4 3v2h-22z" fill="#e02020"/><path d="M8 12l2-3.500h3v3.500zM14 8.500h3l2 3.500h-5z" fill="#fff"/><circle cx="7" cy="17" r="2.500" fill="#222"/><circle cx="19" cy="17" r="2.500" fill="#222"/><path d="M25 19v6h-6z" fill="#555"/></svg>
<svg class="a" style="left:816px;top:154px" width="24" height="24" viewBox="0 0 26 26"><path d="M2 18l10-8 12 4-9 9z" fill="none" stroke="#99a" stroke-width=".8"/><path d="M6 15l12 5M9 12.500l12 4.500M8 20l10-8M13 22l9-8" stroke="#99a" stroke-width=".7"/><path d="M13 16l8-3" stroke="#e02020" stroke-width="1.300"/><path d="M13 16l-2-6" stroke="#20a020" stroke-width="1.300"/><rect x="11.500" y="14.500" width="3" height="3" fill="#111"/><path d="M25 19v6h-6z" fill="#555"/></svg>
<svg class="a" style="left:844px;top:154px" width="24" height="24" viewBox="0 0 26 26"><circle cx="12" cy="13" r="9.500" fill="none" stroke="#667" stroke-width="1.100"/><circle cx="12" cy="13" r="1.800" fill="none" stroke="#1a1a1a" stroke-width="1"/><path d="M14 13h9" stroke="#1a1a1a" stroke-width="1"/><path d="M25 19v6h-6z" fill="#555"/></svg>
<svg class="a" style="left:872px;top:154px" width="24" height="24" viewBox="0 0 26 26"><rect x="15" y="6" width="7" height="7" fill="#f0d020" stroke="#1a1a1a" stroke-width=".9"/><circle cx="8" cy="8" r="3.500" fill="#f0a020" stroke="#1a1a1a" stroke-width=".9"/><path d="M7 21l4-7 4 7z" fill="#f4c8a0" stroke="#1a1a1a" stroke-width=".9"/><path d="M1 19v5h5M20 1h5v5" stroke="#1a1a1a" stroke-width="1.200" fill="none"/><path d="M25 19v6h-6z" fill="#555"/></svg>
<svg class="a" style="left:900px;top:154px" width="24" height="24" viewBox="0 0 26 26"><path d="M7 10a6.500 6.500 0 1 1 13 0q0 3-3 6v3h-7v-3q-3-3-3-6z" fill="#e8e8e8" stroke="#556" stroke-width="1"/><path d="M10 20h7v3q-3.500 2-7 0z" fill="#888" stroke="#444" stroke-width=".8"/><path d="M25 19v6h-6z" fill="#555"/></svg>
<svg class="a" style="left:927px;top:154px" width="24" height="24" viewBox="0 0 26 26"><path d="M8 11v-4a5 5 0 0 1 10 0v4" fill="none" stroke="#667" stroke-width="2"/><rect x="6" y="11" width="14" height="11" rx="1" fill="#bbb" stroke="#1a1a1a" stroke-width="1"/><path d="M25 19v6h-6z" fill="#555"/></svg>
<svg class="a" style="left:954px;top:154px" width="24" height="24" viewBox="0 0 26 26"><path d="M7 10a6.500 6.500 0 1 1 13 0q0 3-3 6v3h-7v-3q-3-3-3-6z" fill="#f0e8c0" stroke="#556" stroke-width="1"/><path d="M10 20h7v3q-3.500 2-7 0z" fill="#888" stroke="#444" stroke-width=".8"/><path d="M5 3h6v6h-6z" fill="#f0d020" stroke="#1a1a1a" stroke-width=".8"/><path d="M5 9l6-6v6z" fill="#111"/><path d="M1 19v5h5" stroke="#1a1a1a" stroke-width="1.200" fill="none"/></svg>
<svg class="a" style="left:982px;top:154px" width="24" height="24" viewBox="0 0 26 26"><path d="M12 12v-3a4 4 0 0 1 8 0v3" fill="none" stroke="#667" stroke-width="1.800"/><rect x="10" y="12" width="12" height="9" fill="#bbb" stroke="#1a1a1a" stroke-width="1"/><path d="M3 2h6v6h-6z" fill="#f0d020" stroke="#1a1a1a" stroke-width=".8"/><path d="M3 8l6-6v6z" fill="#111"/><path d="M1 19v5h5M20 1h5v5" stroke="#1a1a1a" stroke-width="1.200" fill="none"/></svg>
<svg class="a" style="left:1010px;top:154px" width="24" height="24" viewBox="0 0 26 26"><path d="M3 5l10 4 10-4v8l-10 5-10-5z" fill="#e83020"/><path d="M3 13l10 5 10-5v3l-10 5-10-5z" fill="#f4f4f4" stroke="#777" stroke-width=".5"/><path d="M3 16l10 5 10-5v3l-10 5-10-5z" fill="#3050d0"/><path d="M25 19v6h-6z" fill="#555"/></svg>
<svg class="a" style="left:1038px;top:154px" width="24" height="24" viewBox="0 0 26 26"><circle cx="13" cy="13" r="10.500" fill="#222"/><circle cx="13" cy="13" r="7.500" fill="none" stroke="url(#rb)" stroke-width="4"/><circle cx="13" cy="13" r="4.500" fill="#fff"/><defs><linearGradient id="rb" x1="0" y1="0" x2="1" y2="1"><stop offset="0" stop-color="#f02020"/><stop offset=".3" stop-color="#f0e020"/><stop offset=".55" stop-color="#20c040"/><stop offset=".8" stop-color="#2060f0"/><stop offset="1" stop-color="#c020c0"/></linearGradient></defs><path d="M25 19v6h-6z" fill="#555"/></svg>
<svg class="a" style="left:1066px;top:154px" width="24" height="24" viewBox="0 0 26 26"><defs><radialGradient id="sg" cx=".35" cy=".3" r=".8"><stop offset="0" stop-color="#fff"/><stop offset=".5" stop-color="#aaa"/><stop offset="1" stop-color="#333"/></radialGradient><radialGradient id="sb" cx=".35" cy=".3" r=".8"><stop offset="0" stop-color="#cfe0ff"/><stop offset=".4" stop-color="#2050d8"/><stop offset="1" stop-color="#061060"/></radialGradient></defs><circle cx="13" cy="13" r="9.500" fill="url(#sg)" stroke="#333" stroke-width=".6"/><path d="M13 3.500v19M3.500 13h19" stroke="#333" stroke-width="1"/></svg>
<svg class="a" style="left:1094px;top:154px" width="24" height="24" viewBox="0 0 26 26"><rect x="3" y="3" width="20" height="20" fill="#bbb" opacity=".5"/><circle cx="13" cy="13" r="9.500" fill="url(#sg)" stroke="#333" stroke-width=".6"/><path d="M13 3.500v19M3.500 13h19" stroke="#333" stroke-width="1"/><path d="M25 19v6h-6z" fill="#555"/></svg>
<svg class="a" style="left:1122px;top:154px" width="24" height="24" viewBox="0 0 26 26"><circle cx="13" cy="13" r="9.500" fill="url(#sb)" stroke="#333" stroke-width=".6"/><path d="M25 19v6h-6z" fill="#555"/></svg>
<svg class="a" style="left:1151px;top:154px" width="24" height="24" viewBox="0 0 26 26"><path d="M8 4l12-2-3 12z" fill="#f0a020" stroke="#333" stroke-width=".8"/><path d="M8 4l6 3 3 7" fill="#f8d080" stroke="#333" stroke-width=".6"/><path d="M4 14l8 4" stroke="#eee" stroke-width="5" opacity=".8"/><path d="M25 19v6h-6z" fill="#555"/></svg>
<svg class="a" style="left:1178px;top:154px" width="24" height="24" viewBox="0 0 26 26"><circle cx="13" cy="13" r="7" fill="#f0c030" stroke="#1a1a1a" stroke-width="1"/><circle cx="13" cy="13" r="9" fill="none" stroke="#d8a020" stroke-width="4" stroke-dasharray="3.500 3.570"/><circle cx="13" cy="13" r="3" fill="#d9e1e3" stroke="#1a1a1a" stroke-width="1"/><path d="M25 19v6h-6z" fill="#555"/></svg>
<svg class="a" style="left:1206px;top:154px" width="24" height="24" viewBox="0 0 26 26"><path d="M3 5h8M7 5v14M3 19h4M11 19h12M11 16v6M23 16v6" stroke="#1a1a1a" stroke-width="1.300" fill="none"/><path d="M3 2v6M11 2v6" stroke="#1a1a1a" stroke-width="1.100"/><path d="M25 19v6h-6z" fill="#555"/></svg>
<svg class="a" style="left:1234px;top:154px" width="24" height="24" viewBox="0 0 26 26"><circle cx="13" cy="13" r="10.500" fill="#2858d8" stroke="#123" stroke-width=".8"/><path d="M9.500 10q0-4 4-4t4 3.500q0 2-2.500 3.500-1.500 1-1.500 3" stroke="#fff" stroke-width="2.600" fill="none"/><circle cx="13.500" cy="20" r="1.600" fill="#fff"/><path d="M25 19v6h-6z" fill="#555"/></svg>
<svg class="a" style="left:1262px;top:154px" width="24" height="24" viewBox="0 0 26 26"><path d="M3 20l8-14 12-2-8 15z" fill="#f4e060" stroke="#1a1a1a" stroke-width=".9"/><path d="M1 21v4h4M21 1h4v4" stroke="#1a1a1a" stroke-width="1.100" fill="none"/><path d="M25 19v6h-6z" fill="#555"/></svg>
<svg class="a" style="left:1290px;top:154px" width="24" height="24" viewBox="0 0 26 26"><path d="M13 13a2 2 0 1 1 3-2a5 5 0 1 1-8 0a8 8 0 1 1 14 2" fill="none" stroke="#556" stroke-width="1.200"/><path d="M1 21v4h4M21 1h4v4" stroke="#1a1a1a" stroke-width="1.100" fill="none"/><path d="M25 19v6h-6z" fill="#555"/></svg>
<svg class="a" style="left:1319px;top:154px" width="24" height="24" viewBox="0 0 26 26"><g fill="none" stroke="#556" stroke-width="1"><circle cx="7" cy="8" r="1.500"/><circle cx="13" cy="7" r="1.500"/><circle cx="19" cy="9" r="1.500"/><circle cx="8" cy="14" r="1.500"/><circle cx="15" cy="14" r="1.500"/><circle cx="10" cy="20" r="1.500"/><circle cx="17" cy="20" r="1.500"/></g><path d="M1 21v4h4M21 1h4v4" stroke="#1a1a1a" stroke-width="1.100" fill="none"/></svg>
<svg class="a" style="left:1348px;top:154px" width="24" height="24" viewBox="0 0 26 26"><path d="M4 10q10-8 14 6" fill="none" stroke="#1a1a1a" stroke-width="1.600"/><path d="M15 13l4 6 2-7z" fill="#1a1a1a"/><circle cx="5" cy="9" r="1" fill="#1a1a1a"/></svg>
<svg class="a" style="left:1376px;top:154px" width="24" height="24" viewBox="0 0 26 26"><path d="M3 22q2-12 14-14" fill="none" stroke="#1a1a1a" stroke-width="1.200"/><path d="M10 12l8-5" stroke="#1a1a1a" stroke-width="1"/><circle cx="20" cy="7" r="2.500" fill="none" stroke="#1a1a1a" stroke-width="1"/><path d="M2 20l2 3" stroke="#1a1a1a"/></svg>
<svg class="a" style="left:310px;top:191px;" width="26" height="26" viewBox="0 0 26 26"><path d="M8 6v13l3-3 2.500 5 2-1-2.500-5h4.500z" fill="#fff" stroke="#1a1a1a" stroke-width="1"/></svg>
<svg class="a" style="left:339px;top:191px;" width="26" height="26" viewBox="0 0 26 26"><circle cx="12" cy="13.5" r="1.600" fill="#fff" stroke="#1a1a1a" stroke-width=".9"/><path d="M25 20v5h-5z" fill="#555"/></svg>
<svg class="a" style="left:310px;top:219px;" width="26" height="26" viewBox="0 0 26 26"><path d="M5 22l6-15 8 11" fill="none" stroke="#1a1a1a" stroke-width="1"/><circle cx="5" cy="22" r="1.600" fill="#fff" stroke="#1a1a1a" stroke-width=".9"/><circle cx="11" cy="7" r="1.600" fill="#fff" stroke="#1a1a1a" stroke-width=".9"/><circle cx="19" cy="18" r="1.600" fill="#fff" stroke="#1a1a1a" stroke-width=".9"/><path d="M25 20v5h-5z" fill="#555"/></svg>
<svg class="a" style="left:339px;top:219px;" width="26" height="26" viewBox="0 0 26 26"><path d="M5 8q14-5 12 6q-1 6-12 4" fill="none" stroke="#1a1a1a" stroke-width="1"/><rect x="3.5" y="6.5" width="3" height="3" fill="#fff" stroke="#1a1a1a" stroke-width=".9"/><rect x="15.5" y="3.5" width="3" height="3" fill="#fff" stroke="#1a1a1a" stroke-width=".9"/><rect x="3.5" y="18.5" width="3" height="3" fill="#fff" stroke="#1a1a1a" stroke-width=".9"/><rect x="18.5" y="18.5" width="3" height="3" fill="#fff" stroke="#1a1a1a" stroke-width=".9"/><path d="M25 20v5h-5z" fill="#555"/></svg>
<svg class="a" style="left:310px;top:247px;" width="26" height="26" viewBox="0 0 26 26"><circle cx="12" cy="13" r="9.500" fill="none" stroke="#1a1a1a" stroke-width="1"/><path d="M12 13l6-6" stroke="#1a1a1a" stroke-width="1"/><circle cx="12" cy="13" r="1.600" fill="#fff" stroke="#1a1a1a" stroke-width=".9"/><circle cx="18" cy="7" r="1.600" fill="#fff" stroke="#1a1a1a" stroke-width=".9"/><path d="M25 20v5h-5z" fill="#555"/></svg>
<svg class="a" style="left:339px;top:247px;" width="26" height="26" viewBox="0 0 26 26"><ellipse cx="13" cy="13" rx="10" ry="6.500" fill="none" stroke="#1a1a1a" stroke-width="1"/><path d="M13 7v6h7" stroke="#1a1a1a" stroke-width=".9" fill="none"/><circle cx="13" cy="6.5" r="1.600" fill="#fff" stroke="#1a1a1a" stroke-width=".9"/><circle cx="13" cy="13" r="1.600" fill="#fff" stroke="#1a1a1a" stroke-width=".9"/><circle cx="20" cy="13" r="1.600" fill="#fff" stroke="#1a1a1a" stroke-width=".9"/><path d="M25 20v5h-5z" fill="#555"/></svg>
<svg class="a" style="left:310px;top:275px;" width="26" height="26" viewBox="0 0 26 26"><path d="M5 5q17 3 17 9q-4 7-17 9z" fill="none" stroke="#1a1a1a" stroke-width="1"/><circle cx="5" cy="5" r="1.600" fill="#fff" stroke="#1a1a1a" stroke-width=".9"/><circle cx="5" cy="23" r="1.600" fill="#fff" stroke="#1a1a1a" stroke-width=".9"/><circle cx="22" cy="14" r="1.600" fill="#fff" stroke="#1a1a1a" stroke-width=".9"/><path d="M25 20v5h-5z" fill="#555"/></svg>
<svg class="a" style="left:339px;top:275px;" width="26" height="26" viewBox="0 0 26 26"><rect x="4" y="7" width="18" height="12" fill="none" stroke="#1a1a1a" stroke-width="1.100"/><circle cx="4" cy="19" r="1.600" fill="#fff" stroke="#1a1a1a" stroke-width=".9"/><circle cx="22" cy="7" r="1.600" fill="#fff" stroke="#1a1a1a" stroke-width=".9"/><path d="M25 20v5h-5z" fill="#555"/></svg>
<svg class="a" style="left:310px;top:303px;" width="26" height="26" viewBox="0 0 26 26"><path d="M7 4h10l5 9-5 9h-10l-5-9z" fill="none" stroke="#1a1a1a" stroke-width="1"/><path d="M12 13h8" stroke="#1a1a1a" stroke-width=".9"/><circle cx="12" cy="13" r="1.600" fill="#fff" stroke="#1a1a1a" stroke-width=".9"/><path d="M25 20v5h-5z" fill="#555"/></svg>
<svg class="a" style="left:339px;top:303px;" width="26" height="26" viewBox="0 0 26 26"><path d="M3 5h16v17" fill="none" stroke="#aaa" stroke-width=".8"/><path d="M3 5h6q10 0 10 12v5" fill="none" stroke="#1a1a1a" stroke-width="2"/><rect x="1.5" y="3.5" width="3" height="3" fill="#fff" stroke="#1a1a1a" stroke-width=".9"/><rect x="17.5" y="20.5" width="3" height="3" fill="#fff" stroke="#1a1a1a" stroke-width=".9"/><path d="M25 20v5h-5z" fill="#555"/></svg>
<svg class="a" style="left:310px;top:331px;" width="26" height="26" viewBox="0 0 26 26"><path d="M5 6l16-2-3 17-12 2z" fill="#7f9ce8" stroke="#1a1a1a" stroke-width=".9"/><path d="M10 5.500l-2 17M16 4.500l-3 17.500M5 12l15-2M5.500 18l13.500-2" stroke="#223" stroke-width=".7"/><rect x="3.5" y="4.5" width="3" height="3" fill="#fff" stroke="#1a1a1a" stroke-width=".9"/><rect x="19.5" y="2.5" width="3" height="3" fill="#fff" stroke="#1a1a1a" stroke-width=".9"/><rect x="16.5" y="19.5" width="3" height="3" fill="#fff" stroke="#1a1a1a" stroke-width=".9"/><rect x="4.5" y="21.5" width="3" height="3" fill="#fff" stroke="#1a1a1a" stroke-width=".9"/><path d="M25 20v5h-5z" fill="#555"/></svg>
<svg class="a" style="left:339px;top:331px;" width="26" height="26" viewBox="0 0 26 26"><path d="M4 10q8-8 16 0l2 12q-8-8-10-4z" fill="#e8ecf8" stroke="#1a1a1a" stroke-width="1"/><path d="M14 14l8 8-2-12z" fill="#5f7fd8"/><path d="M25 20v5h-5z" fill="#555"/></svg>
<svg class="a" style="left:310px;top:359px;" width="26" height="26" viewBox="0 0 26 26"><path d="M3 9l10-5 10 4v11l-10 5-10-4z" fill="#6f8fe8"/><path d="M3 9l10 4v11l-10-4z" fill="#4f6fd0"/><path d="M13 13l10-5v11l-10 5z" fill="#8fa9f4"/><path d="M3 9l10-5 10 4-10 5z" fill="#a9c0fa"/><path d="M25 20v5h-5z" fill="#555"/></svg>
<svg class="a" style="left:339px;top:359px;" width="26" height="26" viewBox="0 0 26 26"><circle cx="9" cy="16" r="7" fill="url(#gs)"/><circle cx="17" cy="10" r="7" fill="url(#gs)" stroke="#123" stroke-width=".5"/><path d="M25 20v5h-5z" fill="#555"/></svg>
<svg class="a" style="left:310px;top:387px;" width="26" height="26" viewBox="0 0 26 26"><ellipse cx="13" cy="7" rx="8" ry="2.500" fill="none" stroke="#1a1a1a" stroke-width=".9"/><path d="M2 12q11 5 22 0v9q-11 5-22 0z" fill="#5f7fe0" stroke="#223" stroke-width=".7"/><ellipse cx="13" cy="17.500" rx="5" ry="2" fill="#e8ecf8"/><path d="M25 20v5h-5z" fill="#555"/></svg>
<svg class="a" style="left:339px;top:387px;" width="26" height="26" viewBox="0 0 26 26"><path d="M3 10l12-5 9 3-4 13-12 3z" fill="#7f9ce8" stroke="#223" stroke-width=".8"/><path d="M8 8l-2 14M13 6l-1 16M19 6.500l-3 15M3.500 15l18-4M5 20l16-4" stroke="#223" stroke-width=".7"/><path d="M25 20v5h-5z" fill="#555"/></svg>
<svg class="a" style="left:310px;top:415px;" width="26" height="26" viewBox="0 0 26 26"><path d="M6 3h5v2h4v4h3v5h-3v3h-4v-3h-5v-4h-2v-4h2z" fill="#f0a820" stroke="#7a5000" stroke-width=".7"/><path d="M13 14h5v3h3v5h-5v2h-4v-3h-2v-4h3z" fill="#f8f8f8" stroke="#777" stroke-width=".7"/><path d="M25 20v5h-5z" fill="#555"/></svg>
<svg class="a" style="left:339px;top:415px;" width="26" height="26" viewBox="0 0 26 26"><path d="M2 24l6-12-4-2 9-2 2-6 3 9 6-4-4 9 3 5-8-2z" fill="#f8a010" stroke="#a85000" stroke-width=".7"/><path d="M8 22l4-7 3 4 4-5-1 7z" fill="#f8e040"/><path d="M25 20v5h-5z" fill="#555"/></svg>
<svg class="a" style="left:310px;top:443px;" width="26" height="26" viewBox="0 0 26 26"><path d="M2 13h12v5h-12z" fill="#fff" stroke="#1a1a1a" stroke-width="1"/><path d="M14 4h6l-5 9h-1z" fill="#2040b0"/><path d="M12 18l6 6 3-3-6-5" fill="#e8e8e8" stroke="#1a1a1a" stroke-width=".9"/><path d="M25 20v5h-5z" fill="#555"/></svg>
<svg class="a" style="left:339px;top:443px;" width="26" height="26" viewBox="0 0 26 26"><path d="M2 14h22v5h-22z" fill="#fff" stroke="#1a1a1a" stroke-width="1"/><path d="M12 3h7l-3 11h-4z" fill="#2040b0"/><path d="M25 20v5h-5z" fill="#555"/></svg>
<svg class="a" style="left:310px;top:472px;" width="26" height="26" viewBox="0 0 26 26"><circle cx="9" cy="9" r="5.500" fill="#223070" stroke="#1a1a1a" stroke-width=".8"/><circle cx="7" cy="16" r="5.500" fill="#fff" stroke="#1a1a1a" stroke-width=".9"/><circle cx="15" cy="16" r="5.500" fill="#8fa9f0" stroke="#1a1a1a" stroke-width=".9"/><circle cx="11" cy="13" r="2.500" fill="#fff"/><path d="M25 20v5h-5z" fill="#555"/></svg>
<svg class="a" style="left:339px;top:472px;" width="26" height="26" viewBox="0 0 26 26"><circle cx="12" cy="7" r="3.500" fill="#fff" stroke="#445" stroke-width=".9"/><circle cx="7" cy="17" r="3.500" fill="#fff" stroke="#445" stroke-width=".9"/><circle cx="17" cy="17" r="4" fill="#1a2a80"/><path d="M25 20v5h-5z" fill="#555"/></svg>
<svg class="a" style="left:310px;top:501px;" width="26" height="26" viewBox="0 0 26 26"><path d="M4 7q12 0 14 14" fill="none" stroke="#1a1a1a" stroke-width="1.400"/><circle cx="4" cy="7" r="1.600" fill="#fff" stroke="#1a1a1a" stroke-width=".9"/><circle cx="18" cy="21" r="1.600" fill="#fff" stroke="#1a1a1a" stroke-width=".9"/><path d="M25 20v5h-5z" fill="#555"/></svg>
<svg class="a" style="left:339px;top:501px;" width="26" height="26" viewBox="0 0 26 26"><path d="M3 8q14 0 18 14" fill="none" stroke="#1a1a1a" stroke-width="1.400"/><path d="M8 3q12 2 16 12" fill="none" stroke="#1a1a1a" stroke-width="1.200" stroke-dasharray="1.500 1.500"/><circle cx="21" cy="22" r="1.600" fill="#fff" stroke="#1a1a1a" stroke-width=".9"/><path d="M25 20v5h-5z" fill="#555"/></svg>
<svg class="a" style="left:310px;top:529px;" width="26" height="26" viewBox="0 0 26 26"><path d="M3 3h20v6h-3q0-3-4-3v13q0 2 3 2v2h-12v-2q3 0 3-2v-13q-4 0-4 3h-3z" fill="#4f7fe8" stroke="#123" stroke-width=".9"/><path d="M25 20v5h-5z" fill="#555"/></svg>
<svg class="a" style="left:339px;top:529px;" width="26" height="26" viewBox="0 0 26 26"><path d="M7 19l10-10" stroke="#1a1a1a" stroke-width=".9"/><rect x="3" y="16" width="6" height="6" fill="#fff" stroke="#1a1a1a" stroke-width=".9"/><rect x="15" y="4" width="6" height="6" fill="#5f7fe0" stroke="#1a1a1a" stroke-width=".9"/><path d="M25 20v5h-5z" fill="#555"/></svg>
<svg class="a" style="left:310px;top:557px;" width="26" height="26" viewBox="0 0 26 26"><rect x="3" y="3" width="7" height="7" fill="#5f7fe0" stroke="#1a1a1a" stroke-width=".9"/><rect x="15" y="5" width="6" height="6" fill="#fff" stroke="#1a1a1a" stroke-width=".9"/><rect x="4" y="15" width="6" height="6" fill="#fff" stroke="#1a1a1a" stroke-width=".9"/><rect x="13" y="14" width="8" height="8" fill="#5f7fe0" stroke="#1a1a1a" stroke-width=".9"/><path d="M25 20v5h-5z" fill="#555"/></svg>
<svg class="a" style="left:339px;top:557px;" width="26" height="26" viewBox="0 0 26 26"><rect x="3" y="4" width="6" height="13" fill="#fff" stroke="#1a1a1a" stroke-width=".9"/><path d="M9 6q8 0 10 6" fill="none" stroke="#1a1a1a" stroke-width=".9"/><rect x="10" y="12" width="6" height="13" fill="#5f7fe0" stroke="#1a1a1a" stroke-width=".9" transform="rotate(40 13 18)"/><path d="M25 20v5h-5z" fill="#555"/></svg>
<svg class="a" style="left:310px;top:585px;" width="26" height="26" viewBox="0 0 26 26"><path d="M3 9l10-5 10 4v11l-10 5-10-4z" fill="#6f8fe8"/><path d="M3 9l10 4v11l-10-4z" fill="#4f6fd0"/><path d="M3 9l10-5 10 4-10 5z" fill="#a9c0fa"/><path d="M8 14l6 2.500v8l-6-2.500z" fill="#fff" stroke="#334" stroke-width=".7"/><path d="M25 20v5h-5z" fill="#555"/></svg>
<svg class="a" style="left:339px;top:585px;" width="26" height="26" viewBox="0 0 26 26"><path d="M2 20l4-5h18l-4 5z" fill="#3050c8"/><path d="M8 14v-8M13 14v-8M18 14v-8M6 8l2-3 2 3M11 8l2-3 2 3M16 8l2-3 2 3" stroke="#1a1a1a" stroke-width="1" fill="none"/><path d="M25 20v5h-5z" fill="#555"/></svg>
<svg class="a" style="left:310px;top:613px;" width="26" height="26" viewBox="0 0 26 26"><g stroke="#111" stroke-width="1.200"><rect x="3" y="3" width="4.500" height="4.500" fill="#7f9cf0"/><rect x="10" y="3" width="4.500" height="4.500" fill="#7f9cf0"/><rect x="17" y="3" width="4.500" height="4.500" fill="#7f9cf0"/><rect x="3" y="10" width="4.500" height="4.500" fill="#7f9cf0"/><rect x="10" y="10" width="4.500" height="4.500" fill="#7f9cf0"/><rect x="17" y="10" width="4.500" height="4.500" fill="#7f9cf0"/><rect x="3" y="17" width="4.500" height="4.500" fill="#fff"/><rect x="10" y="17" width="4.500" height="4.500" fill="#7f9cf0"/><rect x="17" y="17" width="4.500" height="4.500" fill="#7f9cf0"/></g><path d="M25 20v5h-5z" fill="#555"/></svg>
<svg class="a" style="left:339px;top:613px;" width="26" height="26" viewBox="0 0 26 26"><rect x="7.500" y="3.500" width="10" height="5" fill="#fff" stroke="#1a1a1a" stroke-width="1.100"/><rect x="9.500" y="11" width="5.500" height="4" fill="#fff" stroke="#1a1a1a" stroke-width="1.100"/><rect x="8.500" y="17.500" width="8" height="6" fill="#fff" stroke="#1a1a1a" stroke-width="1.100"/><path d="M12.500 2v23" stroke="#d02020" stroke-width="1.500"/><path d="M25 20v5h-5z" fill="#555"/></svg>
<svg class="a" style="left:310px;top:641px;" width="26" height="26" viewBox="0 0 26 26"><path d="M3 7l4-2 4 2v14l-4 2-4-2z" fill="#f4f4f4" stroke="#1a1a1a" stroke-width=".9"/><path d="M7 5v2l4 2" fill="none" stroke="#1a1a1a" stroke-width=".6"/><path d="M12 5l3-2 2 3z" fill="#fff" stroke="#1a1a1a" stroke-width=".7"/><path d="M14 6l7 2-5 16-7-3z" fill="#6f8ff0" stroke="#1a1a1a" stroke-width=".9"/><path d="M16 24l2-1 5-15-2 0z" fill="#3f5fd0" stroke="#1a1a1a" stroke-width=".6"/><path d="M25 20v5h-5z" fill="#555"/></svg>
<svg class="a" style="left:339px;top:641px;" width="26" height="26" viewBox="0 0 26 26"><path d="M4 14l3-1.500 3 5q5-9 12-14q-7 8-11 18z" fill="#1a1a1a" stroke="#1a1a1a" stroke-width=".8"/><path d="M25 20v5h-5z" fill="#555"/></svg>
<svg class="a" style="left:310px;top:670px;" width="26" height="26" viewBox="0 0 26 26"><path d="M3 9l6-3 6 3v8l-6 3-6-3z" fill="#c4c4c4" stroke="#222" stroke-width=".9"/><path d="M3 9l6 3 6-3M9 12v8" fill="none" stroke="#222" stroke-width=".7"/><path d="M11 19l5-12 6 12q-5 4-11 0z" fill="#9a9a9a" stroke="#222" stroke-width=".9"/><path d="M16 7l2 14" stroke="#ddd" stroke-width="1.500" opacity=".6"/><path d="M25 20v5h-5z" fill="#555"/></svg>
<svg class="a" style="left:339px;top:670px;" width="26" height="26" viewBox="0 0 26 26"><path d="M3 20l9-11 8 9-9 6z" fill="#f4b848" stroke="#7a5000" stroke-width=".8"/><path d="M12 9l8 9-9 6z" fill="#e09820"/><path d="M12 9l-1 15" stroke="#7a5000" stroke-width=".6"/><path d="M9 6l6-4 6 1v4l-6 1z" fill="#f4f4f4" stroke="#1a1a1a" stroke-width=".7"/><path d="M21 2.500h2.500v5h-2.500z" fill="#1a1a1a"/><path d="M8 7l4-3M9 8.500l4-3M11 9l3-2" stroke="#888" stroke-width=".8"/><path d="M25 20v5h-5z" fill="#555"/></svg>
<svg class="a" style="left:386px;top:188.5px;" width="1424" height="21" viewBox="0 0 1424 21"><path d="M0.5 19.500V8L8 1.500H74.5Q77.5 1.500 77.5 4.500V19.500" fill="#d6e6ea" stroke="#3a4248" stroke-width="1"/><path d="M78.0 19.500V8L85.5 1.500H121Q124 1.500 124 4.500V19.500" fill="#d6e6ea" stroke="#3a4248" stroke-width="1"/><path d="M170.5 19.500V8L178 1.500H204Q207 1.500 207 4.500V19.500" fill="#d6e6ea" stroke="#3a4248" stroke-width="1"/><path d="M207.5 19.500V8L215 1.500H235Q238 1.500 238 4.500V19.500" fill="#d9e1e3" stroke="#3a4248" stroke-width="1"/><path d="M116 19.500L129 3Q130.5 1.500 133 1.500H167Q170 1.500 170 4.500V19.500z" fill="#86b48c" stroke="#5a7a60" stroke-width="1"/><path d="M0 19.500H1422" stroke="#6a7278" stroke-width="1"/><path d="M224.500 6v9M220 10.500h9" stroke="#555" stroke-width="3"/><path d="M224.500 7v7M221 10.500h7" stroke="#d9e1e3" stroke-width="1.200"/></svg>
<span class="t" style="left:397.5px;top:190px;font:400 12px/17px 'Liberation Sans',sans-serif;color:#0a0a1a;letter-spacing:-0.290px;">Perspective</span>
<span class="t" style="left:475.3px;top:190px;font:400 12px/17px 'Liberation Sans',sans-serif;color:#0a0a1a;letter-spacing:-0.061px;">Front</span>
<span class="t" style="left:521.3px;top:190px;font:400 12px/17px 'Liberation Sans',sans-serif;color:#0a0a1a;letter-spacing:-0.022px;">Right</span>
<span class="t" style="left:567px;top:190px;font:400 12px/17px 'Liberation Sans',sans-serif;color:#0a0a1a;letter-spacing:-0.182px;">Top</span>
<div style="left:313px;top:980px;width:13px;height:13px;background:#fff;border:1px solid #333"></div>
<svg class="a" style="left:313px;top:980px;" width="13" height="13" viewBox="0 0 13 13"><path d="M2.800 6.500l2.700 3 4.800-6" stroke="#3a3a3a" stroke-width="1.100" fill="none"/></svg>
<span class="t" style="left:331px;top:980px;font:400 12px/15px 'Liberation Sans',sans-serif;color:#0a0a1a;letter-spacing:-1.117px;">End</span>
<div style="left:357px;top:980px;width:13px;height:13px;background:#fff;border:1px solid #333"></div>
<svg class="a" style="left:357px;top:980px;" width="13" height="13" viewBox="0 0 13 13"><path d="M2.800 6.500l2.700 3 4.800-6" stroke="#3a3a3a" stroke-width="1.100" fill="none"/></svg>
<span class="t" style="left:375px;top:980px;font:400 12px/15px 'Liberation Sans',sans-serif;color:#0a0a1a;letter-spacing:-0.752px;">Near</span>
<div style="left:405px;top:980px;width:13px;height:13px;background:#fff;border:1px solid #333"></div>
<svg class="a" style="left:405px;top:980px;" width="13" height="13" viewBox="0 0 13 13"><path d="M2.800 6.500l2.700 3 4.800-6" stroke="#3a3a3a" stroke-width="1.100" fill="none"/></svg>
<span class="t" style="left:423px;top:980px;font:400 12px/15px 'Liberation Sans',sans-serif;color:#0a0a1a;letter-spacing:-0.870px;">Point</span>
<div style="left:454px;top:980px;width:13px;height:13px;background:#fff;border:1px solid #333"></div>
<svg class="a" style="left:454px;top:980px;" width="13" height="13" viewBox="0 0 13 13"><path d="M2.800 6.500l2.700 3 4.800-6" stroke="#3a3a3a" stroke-width="1.100" fill="none"/></svg>
<span class="t" style="left:472px;top:980px;font:400 12px/15px 'Liberation Sans',sans-serif;color:#0a0a1a;letter-spacing:-0.945px;">Mid</span>
<div style="left:496px;top:980px;width:13px;height:13px;background:#fff;border:1px solid #333"></div>
<span class="t" style="left:514px;top:980px;font:400 12px/15px 'Liberation Sans',sans-serif;color:#0a0a1a;letter-spacing:-1.171px;">Cen</span>
<div style="left:540px;top:980px;width:13px;height:13px;background:#fff;border:1px solid #333"></div>
<svg class="a" style="left:540px;top:980px;" width="13" height="13" viewBox="0 0 13 13"><path d="M2.800 6.500l2.700 3 4.800-6" stroke="#3a3a3a" stroke-width="1.100" fill="none"/></svg>
<span class="t" style="left:558px;top:980px;font:400 12px/15px 'Liberation Sans',sans-serif;color:#0a0a1a;letter-spacing:-0.614px;">Int</span>
<div style="left:577px;top:980px;width:13px;height:13px;background:#fff;border:1px solid #333"></div>
<svg class="a" style="left:577px;top:980px;" width="13" height="13" viewBox="0 0 13 13"><path d="M2.800 6.500l2.700 3 4.800-6" stroke="#3a3a3a" stroke-width="1.100" fill="none"/></svg>
<span class="t" style="left:595px;top:980px;font:400 12px/15px 'Liberation Sans',sans-serif;color:#0a0a1a;letter-spacing:-0.962px;">Perp</span>
<div style="left:624px;top:980px;width:13px;height:13px;background:#fff;border:1px solid #333"></div>
<span class="t" style="left:642px;top:980px;font:400 12px/15px 'Liberation Sans',sans-serif;color:#0a0a1a;letter-spacing:-0.282px;">Tan</span>
<div style="left:668px;top:980px;width:13px;height:13px;background:#fff;border:1px solid #333"></div>
<span class="t" style="left:686px;top:980px;font:400 12px/15px 'Liberation Sans',sans-serif;color:#0a0a1a;letter-spacing:-0.963px;">Quad</span>
<div style="left:719px;top:980px;width:13px;height:13px;background:#fff;border:1px solid #333"></div>
<span class="t" style="left:737px;top:980px;font:400 12px/15px 'Liberation Sans',sans-serif;color:#0a0a1a;letter-spacing:-0.921px;">Knot</span>
<div style="left:766px;top:980px;width:13px;height:13px;background:#fff;border:1px solid #333"></div>
<span class="t" style="left:784px;top:980px;font:400 12px/15px 'Liberation Sans',sans-serif;color:#0a0a1a;letter-spacing:-0.753px;">Vertex</span>
<div style="left:821px;top:980px;width:13px;height:13px;background:#e4e8ea;border:1px solid #b0b6ba"></div>
<span class="t" style="left:839px;top:980px;font:400 12px/15px 'Liberation Sans',sans-serif;color:#0a0a1a;letter-spacing:-0.764px;">Project</span>
<div style="left:879px;top:980px;width:13px;height:13px;background:#e4e8ea;border:1px solid #b0b6ba"></div>
<span class="t" style="left:897px;top:980px;font:400 12px/15px 'Liberation Sans',sans-serif;color:#0a0a1a;letter-spacing:-0.788px;">Disable</span>
<div style="left:308px;top:1012px;width:1596px;height:1px;background:#3a4248"></div>
<div style="left:364px;top:1013px;width:1px;height:19px;background:#3a4248"></div>
<div style="left:452px;top:1013px;width:1px;height:19px;background:#3a4248"></div>
<div style="left:540px;top:1013px;width:1px;height:19px;background:#3a4248"></div>
<div style="left:628px;top:1013px;width:1px;height:19px;background:#3a4248"></div>
<div style="left:716px;top:1013px;width:1px;height:19px;background:#3a4248"></div>
<div style="left:889px;top:1013px;width:1px;height:19px;background:#3a4248"></div>
<div style="left:965px;top:1013px;width:1px;height:19px;background:#3a4248"></div>
<div style="left:1012px;top:1013px;width:1px;height:19px;background:#3a4248"></div>
<div style="left:1066px;top:1013px;width:1px;height:19px;background:#3a4248"></div>
<div style="left:1120px;top:1013px;width:1px;height:19px;background:#3a4248"></div>
<div style="left:1205px;top:1013px;width:1px;height:19px;background:#3a4248"></div>
<div style="left:1271px;top:1013px;width:1px;height:19px;background:#3a4248"></div>
<div style="left:1379px;top:1013px;width:1px;height:19px;background:#3a4248"></div>
<div style="left:1425px;top:1013px;width:1px;height:19px;background:#3a4248"></div>
<div style="left:1903px;top:1013px;width:1px;height:19px;background:#3a4248"></div>
<span class="t" style="left:315px;top:1015px;font:400 13px/17px 'Liberation Sans',sans-serif;color:#0a0a1a;letter-spacing:-0.273px;">CPlane</span>
<span class="t" style="left:383.5px;top:1015px;font:400 13px/17px 'Liberation Sans',sans-serif;color:#0a0a1a;letter-spacing:0.079px;">x 56.343</span>
<span class="t" style="left:472px;top:1015px;font:400 13px/17px 'Liberation Sans',sans-serif;color:#0a0a1a;letter-spacing:0.012px;">y 11.348</span>
<span class="t" style="left:562.5px;top:1015px;font:400 13px/17px 'Liberation Sans',sans-serif;color:#0a0a1a;letter-spacing:0.123px;">z 0.000</span>
<span class="t" style="left:640.5px;top:1015px;font:400 13px/17px 'Liberation Sans',sans-serif;color:#0a0a1a;letter-spacing:0.081px;">Millimeters</span>
<div style="left:720px;top:1017px;width:13px;height:13px;background:#007c52;border:1px solid #111"></div>
<span class="t" style="left:736px;top:1015px;font:400 13px/17px 'Liberation Sans',sans-serif;color:#0a0a1a;letter-spacing:0.018px;">Metal 01</span>
<span class="t" style="left:899px;top:1015px;font:400 13px/17px 'Liberation Sans',sans-serif;color:#0a0a1a;letter-spacing:-0.059px;">Grid Snap</span>
<div style="left:966px;top:1013px;width:46px;height:19px;background:#eef4fc"></div>
<span class="t" style="left:972px;top:1015px;font:700 13px/17px 'Liberation Sans',sans-serif;color:#0a0a1a;letter-spacing:-0.076px;">Ortho</span>
<span class="t" style="left:1021px;top:1015px;font:400 13px/17px 'Liberation Sans',sans-serif;color:#0a0a1a;letter-spacing:-0.096px;">Planar</span>
<div style="left:1067px;top:1013px;width:53px;height:19px;background:#eef4fc"></div>
<span class="t" style="left:1074px;top:1015px;font:700 13px/17px 'Liberation Sans',sans-serif;color:#0a0a1a;letter-spacing:-0.090px;">Osnap</span>
<span class="t" style="left:1130px;top:1015px;font:400 13px/17px 'Liberation Sans',sans-serif;color:#0a0a1a;letter-spacing:0.031px;">SmartTrack</span>
<div style="left:1206px;top:1013px;width:64px;height:19px;background:#eef4fc"></div>
<span class="t" style="left:1212px;top:1015px;font:700 13px/17px 'Liberation Sans',sans-serif;color:#0a0a1a;letter-spacing:0.285px;">Gumball</span>
<span class="t" style="left:1283px;top:1015px;font:400 13px/17px 'Liberation Sans',sans-serif;color:#0a0a1a;letter-spacing:0.003px;">Record History</span>
<span class="t" style="left:1389px;top:1015px;font:400 13px/17px 'Liberation Sans',sans-serif;color:#0a0a1a;letter-spacing:0.019px;">Filter</span>
<span class="t" style="left:1429px;top:1015px;font:400 13px/17px 'Liberation Sans',sans-serif;color:#0a0a1a;letter-spacing:0.081px;">Memory use: 767 MB</span>
<svg class="a" style="left:386px;top:209px" width="1422" height="759" viewBox="386 209 1422 759"><defs><linearGradient id="cyl" x1="0" y1="0" x2="1" y2="0"><stop offset="0" stop-color="#086040"/><stop offset=".2" stop-color="#0d8a5c"/><stop offset=".42" stop-color="#7af2c2"/><stop offset=".5" stop-color="#15a870"/><stop offset=".52" stop-color="#0a7048"/><stop offset=".8" stop-color="#0a6a44"/><stop offset="1" stop-color="#043a24"/></linearGradient><linearGradient id="cyl2" x1="0" y1="0" x2="1" y2="0"><stop offset="0" stop-color="#075a3a"/><stop offset=".2" stop-color="#0e8259"/><stop offset=".32" stop-color="#7af4c4"/><stop offset=".43" stop-color="#12905e"/><stop offset=".7" stop-color="#08583a"/><stop offset="1" stop-color="#032818"/></linearGradient><linearGradient id="cyp" x1="0" y1="0" x2="1" y2="0"><stop offset="0" stop-color="#0a6a46"/><stop offset=".22" stop-color="#0e8a5c"/><stop offset=".5" stop-color="#075638"/><stop offset="1" stop-color="#02180e"/></linearGradient><radialGradient id="gem" cx=".5" cy=".5" r=".6"><stop offset="0" stop-color="#b4ccff"/><stop offset=".5" stop-color="#7f9ff8"/><stop offset="1" stop-color="#a8c4ff"/></radialGradient></defs><rect x="386" y="209" width="1422" height="759" fill="#000"/><rect x="386" y="585" width="1422" height="2.500" fill="#dfe6e8"/><rect x="1093.500" y="209" width="2.500" height="759" fill="#dfe6e8"/><path d="M686.500 231.500H847M846.500 231V565.500M765 565H847" stroke="#0d8a5a" stroke-width="1.300" fill="none"/><path d="M842 397v6" stroke="#0d8a5a" stroke-width="1"/><path d="M687 237Q693 337 749.500 438.500" fill="none" stroke="#0c7a50" stroke-width="3.8" stroke-linecap="round"/><path d="M687 237Q693 337 749.500 438.500" fill="none" stroke="#1a9a6a" stroke-width="2.4" stroke-dasharray="2.400 1.600"/><path d="M832 237Q826 337 769.500 438.500" fill="none" stroke="#0c7a50" stroke-width="3.8" stroke-linecap="round"/><path d="M832 237Q826 337 769.500 438.500" fill="none" stroke="#1a9a6a" stroke-width="2.4" stroke-dasharray="2.400 1.600"/><path d="M759.500 463V532" fill="none" stroke="#0c7a50" stroke-width="3.4" stroke-linecap="round"/><path d="M759.500 463V532" fill="none" stroke="#1a9a6a" stroke-width="2.0" stroke-dasharray="2.400 1.600"/><circle cx="687" cy="234.500" r="3" fill="#000" stroke="#25b07a" stroke-width="1.400"/><circle cx="832" cy="234.500" r="3" fill="#000" stroke="#25b07a" stroke-width="1.400"/><rect x="749" y="366.500" width="21" height="71" fill="none" stroke="#0d8a5a" stroke-width="1.200"/><path d="M755 364.500h9" stroke="#0d8a5a" stroke-width="1"/><circle cx="759.500" cy="447.500" r="10.500" fill="#0a6a46" stroke="#25b07a" stroke-width="1.500"/><circle cx="759.500" cy="447.500" r="7.800" fill="url(#gem)" stroke="#cfe0ff" stroke-width=".6"/><circle cx="759.500" cy="447.500" r="3" fill="#c4d8ff"/><circle cx="759.500" cy="460.300" r="2.600" fill="#000" stroke="#25b07a" stroke-width="1.300"/><circle cx="749.500" cy="438.500" r="2.400" fill="#000" stroke="#25b07a" stroke-width="1.200"/><circle cx="769.500" cy="438.500" r="2.400" fill="#000" stroke="#25b07a" stroke-width="1.200"/><circle cx="759.500" cy="534" r="2.400" fill="#000" stroke="#25b07a" stroke-width="1.200"/><path d="M759.500 536.500Q771 549 770 555.500Q769 564.500 759.500 564.500Q750 564.500 749 555.500Q748 549 759.500 536.500Z" fill="#0a6a46" stroke="#25b07a" stroke-width="1.600"/><path d="M759.500 541.500Q768 551 767 556Q766 561.500 759.500 561.500Q753 561.500 752 556Q751 551 759.500 541.500Z" fill="url(#gem)" stroke="#cfe0ff" stroke-width=".6"/><ellipse cx="759.500" cy="554" rx="2.500" ry="4" fill="#c4d8ff"/><text x="722" y="360" font-family="Liberation Sans,sans-serif" font-size="44.500" fill="#25a676" stroke="#0e7c53" stroke-width="2.600" paint-order="stroke" textLength="86" lengthAdjust="spacingAndGlyphs">5.50</text><text transform="translate(894.500,454) rotate(-90)" font-family="Liberation Sans,sans-serif" font-size="52" fill="#25a676" stroke="#0e7c53" stroke-width="3" paint-order="stroke" textLength="130" lengthAdjust="spacingAndGlyphs">99.98</text><path d="M422.500 519.500V548" stroke="#1a98a8" stroke-width="1.200"/><path d="M422 548H453.500" stroke="#c81c10" stroke-width="1.200"/><text x="424.500" y="520" font-family="DejaVu Sans,sans-serif" font-size="10" font-weight="700" fill="#1a98a8">y</text><text x="455" y="550" font-family="DejaVu Sans,sans-serif" font-size="10" font-weight="700" fill="#c81c10">x</text><path d="M1512.500 254.500L1697.500 288L1510.500 518.500L1361 467.500" stroke="#0d8a5a" stroke-width="1.200" fill="none"/><path d="M1462 357L1511 318L1537.500 324.500L1487 371" stroke="#0d8a5a" stroke-width="1" fill="none"/><path d="M1512.500 255C1490 274 1462 300 1461.500 357" fill="none" stroke="#0c7a50" stroke-width="3.8" stroke-linecap="round"/><path d="M1512.500 255C1490 274 1462 300 1461.500 357" fill="none" stroke="#1a9a6a" stroke-width="2.4" stroke-dasharray="2.400 1.600"/><path d="M1677.500 287C1650 318 1560 350 1486 371" fill="none" stroke="#0c7a50" stroke-width="3.8" stroke-linecap="round"/><path d="M1677.500 287C1650 318 1560 350 1486 371" fill="none" stroke="#1a9a6a" stroke-width="2.4" stroke-dasharray="2.400 1.600"/><path d="M1454 386L1396 433" fill="none" stroke="#0c7a50" stroke-width="3" stroke-linecap="round"/><path d="M1454 386L1396 433" fill="none" stroke="#1a9a6a" stroke-width="1.6" stroke-dasharray="2.400 1.600"/><circle cx="1512.500" cy="254.500" r="2.200" fill="#25b07a"/><circle cx="1678" cy="286.500" r="2.200" fill="#25b07a"/><path d="M1451.500 367v14.500a17 8 0 0 0 34 0v-14.500z" fill="url(#cyp)" stroke="#0fa068" stroke-width="1"/><ellipse cx="1468.500" cy="367" rx="17" ry="8" fill="#0a6a46" stroke="#25b07a" stroke-width="1.400"/><ellipse cx="1468.500" cy="366.500" rx="13.800" ry="6" fill="#a4c4ff"/><ellipse cx="1469.500" cy="365" rx="6" ry="2.800" fill="#6f8ed8"/><ellipse cx="1458" cy="381.500" rx="3" ry="2" fill="none" stroke="#25b07a" stroke-width="1"/><path d="M1350 449V467C1352 478 1366 481.500 1376 479.500C1388 476.500 1395 468 1395.500 460V444z" fill="url(#cyp)" stroke="#0fa068" stroke-width="1"/><path d="M1350 449C1352 438 1372 433 1390 430.700C1396 436 1396 441 1394.500 444C1390 456 1378 462 1366 463C1356 463.500 1350 458 1350 449Z" fill="#0a6a46" stroke="#25b07a" stroke-width="1.600"/><path d="M1355 449.500C1357 441 1374 437 1387 435C1391 439 1391 442 1390 444.500C1386 453 1377 458 1366 459C1359 459 1355 455 1355 449.500Z" fill="#a4c4ff"/><ellipse cx="1369" cy="447" rx="9" ry="4.500" transform="rotate(-22 1369 447)" fill="#6f8ed8"/><path d="M1378 452l6-9 3 4zM1374 455l5-6 2 4z" fill="#dbe8ff" opacity=".8"/><path d="M1359 461.500v15" stroke="#25b07a" stroke-width="1.100"/><text transform="matrix(.974,.200,-.330,.440,1488,308.500)" font-family="Liberation Sans,sans-serif" font-size="56.500" fill="#1f9a6c" stroke="#0c7049" stroke-width="3.400" paint-order="stroke">5.50</text><text transform="matrix(.500,-.625,1.05,.190,1659,428)" font-family="Liberation Sans,sans-serif" font-size="59" fill="#1f9a6c" stroke="#0c7049" stroke-width="3.400" paint-order="stroke">99.98</text><text transform="matrix(.4,-.5,.5,.4,1620,379)" font-family="Liberation Sans,sans-serif" font-size="5" fill="#0d8a5a">99.98</text><text transform="matrix(.97,.24,-.5,.4,1521,318)" font-family="Liberation Sans,sans-serif" font-size="5" fill="#0d8a5a">5.50</text><g fill="none" stroke="#f0a810" stroke-width="1.300"><ellipse cx="1767" cy="250" rx="15" ry="17" transform="rotate(-18 1767 250)"/><ellipse cx="1767.500" cy="249" rx="11.500" ry="13.500" transform="rotate(-18 1767 250)"/><ellipse cx="1764" cy="247" rx="13" ry="15.500" transform="rotate(-18 1767 250)"/></g><path d="M1759 229l5-5h7l4 5-8 8z" fill="none" stroke="#3f6fe0" stroke-width="1.300"/><path d="M1759 229h16M1764 224l3 13 4-13" stroke="#3f6fe0" stroke-width="1" fill="none"/><path d="M606 789h80.500M779.500 789H825M837 789h80.500" stroke="#0d8a5a" stroke-width="2.600"/><pattern id="pc1" x="515" y="802.5" width="9.6" height="15" patternUnits="userSpaceOnUse"><ellipse cx="4.8" cy="5.5" rx="4.10" ry="3.70" fill="none" stroke="#11905f" stroke-width="1.4"/><path d="M2.20 7.0L4.8 12.20L7.40 7.0" fill="none" stroke="#11905f" stroke-width="1.700"/></pattern><rect x="515" y="802.5" width="186.5" height="15" fill="url(#pc1)"/><path d="M515 808H701.5" stroke="#0b7a50" stroke-width="1.300"/><path d="M515 803.5H468L455.5 806.8V809.8L468 813H515z" fill="#0b7a50"/><path d="M515 805H468M515 808H468M515 811H468" stroke="#2aa878" stroke-width="1.300" stroke-dasharray="1.600 1.500"/><pattern id="pc2" x="782.5" y="802.5" width="9.6" height="15" patternUnits="userSpaceOnUse"><ellipse cx="4.8" cy="5.5" rx="4.10" ry="3.70" fill="none" stroke="#11905f" stroke-width="1.4"/><path d="M2.20 7.0L4.8 12.20L7.40 7.0" fill="none" stroke="#11905f" stroke-width="1.700"/></pattern><rect x="782.5" y="802.5" width="185.5" height="15" fill="url(#pc2)"/><path d="M782.5 808H968" stroke="#0b7a50" stroke-width="1.300"/><path d="M968 803.5H1015L1027.5 806.8V809.8L1015 813H968z" fill="#0b7a50"/><path d="M968 805H1015M968 808H1015M968 811H1015" stroke="#2aa878" stroke-width="1.300" stroke-dasharray="1.600 1.500"/><rect x="717.500" y="782.500" width="49" height="4" rx="2" fill="#8fb0ff"/><rect x="701.500" y="786" width="80.500" height="48" fill="url(#cyl)"/><path d="M701.500 786.500h80.500M701.500 833.500h80.500" stroke="#12a06a" stroke-width="1.400"/><path d="M422.500 905V932" stroke="#e8a000" stroke-width="1.200"/><path d="M422 932H453" stroke="#c81c10" stroke-width="1.200"/><text x="425" y="904" font-family="DejaVu Sans,sans-serif" font-size="10" font-weight="700" fill="#e8a000">z</text><text x="454.500" y="934" font-family="DejaVu Sans,sans-serif" font-size="10" font-weight="700" fill="#c81c10">x</text><path d="M1408 798.500h18M1433 798.500h48M1492 798.500h14M1517 798.500h105" stroke="#0d8a5a" stroke-width="2"/><pattern id="pc3" x="1225.5" y="803.25" width="10.83" height="13.5" patternUnits="userSpaceOnUse"><ellipse cx="5.415" cy="4.75" rx="4.71" ry="2.95" fill="none" stroke="#0f8a5a" stroke-width="1.2"/></pattern><rect x="1225.5" y="803.25" width="129.5" height="13.5" fill="url(#pc3)"/><path d="M1225.5 808H1355" stroke="#0b7a50" stroke-width="1.300"/><path d="M1222 808H1228M1355 808H1368" stroke="#0d8a5a" stroke-width="1.600"/><pattern id="pc4" x="1408.5" y="803.25" width="9.4" height="13.5" patternUnits="userSpaceOnUse"><ellipse cx="4.7" cy="4.75" rx="4.00" ry="2.95" fill="none" stroke="#13955f" stroke-width="1.5"/></pattern><rect x="1408.5" y="803.25" width="383.5" height="13.5" fill="url(#pc4)"/><path d="M1408.5 808H1792" stroke="#0b7a50" stroke-width="1.300"/><path d="M1404 808H1796" stroke="#0d8a5a" stroke-width="1.200"/><rect x="1178" y="794.500" width="28" height="2.500" rx="1" fill="#8fb0ff"/><rect x="1373" y="794" width="27" height="4" rx="2" fill="#8fb0ff"/><rect x="1166.500" y="799" width="57" height="21.500" fill="url(#cyl2)"/><path d="M1166.500 799.500h57" stroke="#0e8a5a" stroke-width="1"/><rect x="1166.500" y="795.500" width="57" height="25.500" rx="1.500" fill="none" stroke="#12a06a" stroke-width="1.200"/><rect x="1367.500" y="797.500" width="41" height="21.500" rx="1.500" fill="url(#cyl2)" stroke="#12a06a" stroke-width="1.200"/><path d="M1132.500 905V932" stroke="#e8a000" stroke-width="1.200"/><path d="M1132 932H1163" stroke="#1a98a8" stroke-width="1.200"/><text x="1135" y="904" font-family="DejaVu Sans,sans-serif" font-size="10" font-weight="700" fill="#e8a000">z</text><text x="1165" y="934" font-family="DejaVu Sans,sans-serif" font-size="10" font-weight="700" fill="#1a98a8">y</text><path d="M1760 612h12l-2 26-4 8-4-8z" fill="none" stroke="#f0a810" stroke-width="1.300"/><path d="M1762 614v24M1770 614v24M1766 612v34" stroke="#f0a810" stroke-width=".9"/><path d="M1757 603h18l-9 9z" fill="none" stroke="#3f6fe0" stroke-width="1.300"/><path d="M1757 603l4-3h10l4 3" fill="none" stroke="#3f6fe0" stroke-width="1.200"/><text x="1599" y="965" font-family="Liberation Sans,sans-serif" font-size="19.500" fill="#878787" textLength="157" lengthAdjust="spacingAndGlyphs">Activate Windows</text></svg>
<span class="t" style="left:1599.5px;top:971px;font:400 15px/19px 'Liberation Sans',sans-serif;color:#b7bec0;letter-spacing:-0.065px;">Go to Settings to activate Windows.</span>
<svg class="a" style="left:387px;top:210px" width="47" height="18" viewBox="0 0 47 18"><path d="M0 0H47V14L44 18H0z" fill="#c1c9d5"/><path d="M35.5 2V16" stroke="#555f6c" stroke-width="1"/><path d="M38 7h7l-3.500 4z" fill="#555f6c"/></svg>
<span class="t" style="left:396px;top:211px;font:400 13px/16px 'Liberation Sans',sans-serif;color:#7b8798;letter-spacing:-0.653px;">Top</span>
<svg class="a" style="left:1097px;top:210px" width="88" height="18" viewBox="0 0 88 18"><path d="M0 0H88V14L85 18H0z" fill="#c1c9d5"/><path d="M76.5 2V16" stroke="#555f6c" stroke-width="1"/><path d="M79 7h7l-3.500 4z" fill="#555f6c"/></svg>
<span class="t" style="left:1105.5px;top:211px;font:400 13px/16px 'Liberation Sans',sans-serif;color:#7b8798;letter-spacing:-0.765px;">Perspective</span>
<svg class="a" style="left:387px;top:588px" width="55" height="18" viewBox="0 0 55 18"><path d="M0 0H55V14L52 18H0z" fill="#c1c9d5"/><path d="M43.5 2V16" stroke="#555f6c" stroke-width="1"/><path d="M46 7h7l-3.500 4z" fill="#555f6c"/></svg>
<span class="t" style="left:395px;top:589px;font:400 13px/16px 'Liberation Sans',sans-serif;color:#7b8798;letter-spacing:-0.468px;">Front</span>
<div style="left:952px;top:229px;width:300px;height:175px;background:#333"></div>
<div class="hdr" style="left:952px;top:229px;width:300px;height:26px;"></div>
<div style="left:1098px;top:232px;width:1px;height:21px;background:#77756d"></div>
<div style="left:1099px;top:232px;width:1px;height:21px;background:#e4e2da"></div>
<div style="left:953px;top:230px;width:25px;height:24px;background:linear-gradient(90deg,#5a5a5a,#8a8880)"></div>
<svg class="a" style="left:954px;top:231px" width="20" height="21" viewBox="0 0 20 21"><rect width="20" height="21" fill="#1e88d0"/><path d="M2 2.500h5M9 2.500h6M2 5.500h3M2 8.500h2M2 11.500h2M2 14.500h4M2 17.500h6M10 17.500h6M12 14.500h4" stroke="#f0f6ff" stroke-width="1.300"/><ellipse cx="11" cy="9.500" rx="6.500" ry="4.300" fill="#eef2f6" transform="rotate(-20 11 9.500)"/><ellipse cx="9" cy="11" rx="3.500" ry="1.800" fill="#b8d4e4" transform="rotate(-20 9 11)"/></svg>
<span class="t" style="left:982px;top:229px;font:700 10.5px/15px 'DejaVu Sans','Liberation Sans',sans-serif;color:#0a0a0a;letter-spacing:0.349px;">GEM REPORTER</span>
<div class="xb" style="left:1234px;top:234px;width:13px;height:13px;"><svg width="11" height="11" viewBox="0 0 11 11" style="display:block"><path d="M2 2l7 7M9 2l-7 7" stroke="#e0202a" stroke-width="1.100"/></svg></div>
<div style="left:957px;top:259px;width:146px;height:17px;background:#2a2a2a;border:1px solid;border-color:#111 #666 #666 #111"></div>
<span class="t" style="left:960.5px;top:259px;font:400 11px/17px 'DejaVu Sans','Liberation Sans',sans-serif;color:#e8e8e0;letter-spacing:0.249px;">Total Gem Weight</span>
<div style="left:1067px;top:260px;width:35px;height:15px;background:#000"></div>
<span class="t" style="left:1067px;top:260px;font:400 12.5px/15px 'Liberation Sans',sans-serif;color:#10e8fc;width:35px;text-align:center;">1.13</span>
<div style="left:1106px;top:259px;width:141px;height:17px;background:#2a2a2a;border:1px solid;border-color:#111 #666 #666 #111"></div>
<span class="t" style="left:1110px;top:259px;font:400 11px/17px 'DejaVu Sans','Liberation Sans',sans-serif;color:#e8e8e0;letter-spacing:0.376px;">Total Gem Count</span>
<div style="left:1212px;top:260px;width:34px;height:15px;background:#000"></div>
<span class="t" style="left:1212px;top:260px;font:400 12.5px/15px 'Liberation Sans',sans-serif;color:#10e8fc;width:34px;text-align:center;">2</span>
<div style="left:989px;top:284px;width:226px;height:1px;background:#111"></div>
<div style="left:989px;top:285px;width:226px;height:1px;background:#555"></div>
<svg class="a" style="left:1096px;top:279px" width="12" height="12" viewBox="0 0 12 12"><circle cx="6" cy="6" r="5.300" fill="#5a5850" stroke="#999" stroke-width=".8"/><path d="M3.500 7.500h5l-2.500-3z" fill="#e8e8e0"/></svg>
<div style="left:995px;top:295px;width:50px;height:16px;background:#2a2a2a;border:1px solid;border-color:#111 #666 #666 #111"></div>
<span class="t" style="left:997.5px;top:295px;font:400 11px/16px 'DejaVu Sans','Liberation Sans',sans-serif;color:#e8e8e0;letter-spacing:-0.140px;">Update</span>
<div style="left:1047px;top:295px;width:16px;height:15px;background:linear-gradient(#58b828,#3f9a14);border:1px solid;border-color:#8ad860 #2a6a0a #2a6a0a #8ad860"></div>
<svg class="a" style="left:1047px;top:295px" width="16" height="15" viewBox="0 0 16 15"><path d="M5.5 3.5v8l5.500-4z" fill="#f4fff0"/></svg>
<div style="left:1085px;top:295px;width:106px;height:16px;background:#2a2a2a;border:1px solid;border-color:#111 #666 #666 #111"></div>
<span class="t" style="left:1088.5px;top:295px;font:400 11px/16px 'DejaVu Sans','Liberation Sans',sans-serif;color:#e8e8e0;letter-spacing:0.276px;">Save Report</span>
<div style="left:1193px;top:295px;width:16px;height:15px;background:linear-gradient(#58b828,#3f9a14);border:1px solid;border-color:#8ad860 #2a6a0a #2a6a0a #8ad860"></div>
<svg class="a" style="left:1193px;top:295px" width="16" height="15" viewBox="0 0 16 15"><path d="M5.5 3.5v8l5.500-4z" fill="#f4fff0"/></svg>
<div style="left:954px;top:314px;width:291px;height:90px;background:#565656"></div>
<div style="left:962px;top:321px;width:36px;height:33px;background:#333;border:1px solid #e4e4e4"></div>
<svg class="a" style="left:962px;top:321px" width="36" height="33" viewBox="0 0 36 33"><path d="M6 22C4 14 12 6 22 6C28 6 31 10 29 15C27 21 18 27 10 27.500C7.500 27.500 6.500 25 6 22Z" fill="#7080dc"/><path d="M9 18C14 12 22 9 28.500 9.500L29.500 13C22 16 13 20 7 22Z" fill="#98a8f4"/><path d="M7 21.500C12 20 22 16 29.500 12C30 17 24 22 16 26C11 28 7.500 27 7 21.500Z" fill="#eef4ff"/><path d="M6 22C4 14 12 6 22 6" fill="none" stroke="#5060b8" stroke-width="1"/></svg>
<div style="left:998px;top:321px;width:119px;height:17px;background:#343434;border:1px solid #949494;"></div>
<span class="t" style="left:998px;top:322px;font:400 11px/15px 'DejaVu Sans','Liberation Sans',sans-serif;color:#e8e8e0;width:119px;text-align:center;">Pear</span>
<div style="left:1116px;top:321px;width:103px;height:17px;background:#343434;border:1px solid #949494;"></div>
<span class="t" style="left:1116px;top:322px;font:400 11px/15px 'DejaVu Sans','Liberation Sans',sans-serif;color:#e8e8e0;width:103px;text-align:center;">Diamond</span>
<div style="left:998px;top:337px;width:119px;height:17px;background:#343434;border:1px solid #949494;"></div>
<span class="t" style="left:998px;top:338px;font:400 11px/15px 'DejaVu Sans','Liberation Sans',sans-serif;color:#e8e8e0;width:119px;text-align:center;">7.00 X 5.00</span>
<div style="left:1116px;top:337px;width:37px;height:17px;background:#343434;border:1px solid #949494;"></div>
<span class="t" style="left:1116px;top:338px;font:400 11px/15px 'DejaVu Sans','Liberation Sans',sans-serif;color:#e8e8e0;width:37px;text-align:center;">1</span>
<div style="left:1152px;top:337px;width:50px;height:17px;background:#343434;border:1px solid #949494;"></div>
<span class="t" style="left:1152px;top:338px;font:400 11px/15px 'DejaVu Sans','Liberation Sans',sans-serif;color:#e8e8e0;width:50px;text-align:center;">0.65tw</span>
<div style="left:1202px;top:338px;width:16px;height:15px;background:linear-gradient(#58b828,#3f9a14);border:1px solid;border-color:#8ad860 #2a6a0a #2a6a0a #8ad860"></div>
<svg class="a" style="left:1202px;top:338px" width="16" height="15" viewBox="0 0 16 15"><path d="M5.5 3.5v8l5.500-4z" fill="#f4fff0"/></svg>
<div style="left:962px;top:357px;width:36px;height:33px;background:#333;border:1px solid #e4e4e4"></div>
<svg class="a" style="left:962px;top:357px" width="36" height="33" viewBox="0 0 36 33"><ellipse cx="17" cy="17" rx="14.300" ry="10.500" fill="#7080dc" transform="rotate(-15 17 17)"/><ellipse cx="15.500" cy="13" rx="8.500" ry="5" fill="#6070d0" transform="rotate(-15 15.500 13)"/><path d="M6 20C12 17 22 14 30.500 13L31 16C24 18 14 21 8 24Z" fill="#98a8f4"/><path d="M8 22.500C12 19.500 22 16.500 31 14.500C31 19 26 25 18 27C13 28 9 26.500 8 22.500Z" fill="#f0f6ff"/></svg>
<div style="left:998px;top:357px;width:119px;height:17px;background:#343434;border:1px solid #949494;"></div>
<span class="t" style="left:998px;top:358px;font:400 11px/15px 'DejaVu Sans','Liberation Sans',sans-serif;color:#e8e8e0;width:119px;text-align:center;">Round</span>
<div style="left:1116px;top:357px;width:103px;height:17px;background:#343434;border:1px solid #949494;"></div>
<span class="t" style="left:1116px;top:358px;font:400 11px/15px 'DejaVu Sans','Liberation Sans',sans-serif;color:#e8e8e0;width:103px;text-align:center;">Diamond</span>
<div style="left:998px;top:373px;width:119px;height:17px;background:#343434;border:1px solid #949494;"></div>
<span class="t" style="left:998px;top:374px;font:400 11px/15px 'DejaVu Sans','Liberation Sans',sans-serif;color:#e8e8e0;width:119px;text-align:center;">5.10 X 5.10</span>
<div style="left:1116px;top:373px;width:37px;height:17px;background:#343434;border:1px solid #949494;"></div>
<span class="t" style="left:1116px;top:374px;font:400 11px/15px 'DejaVu Sans','Liberation Sans',sans-serif;color:#e8e8e0;width:37px;text-align:center;">1</span>
<div style="left:1152px;top:373px;width:50px;height:17px;background:#343434;border:1px solid #949494;"></div>
<span class="t" style="left:1152px;top:374px;font:400 11px/15px 'DejaVu Sans','Liberation Sans',sans-serif;color:#e8e8e0;width:50px;text-align:center;">0.49tw</span>
<div style="left:1202px;top:374px;width:16px;height:15px;background:linear-gradient(#58b828,#3f9a14);border:1px solid;border-color:#8ad860 #2a6a0a #2a6a0a #8ad860"></div>
<svg class="a" style="left:1202px;top:374px" width="16" height="15" viewBox="0 0 16 15"><path d="M5.5 3.5v8l5.500-4z" fill="#f4fff0"/></svg>
<div style="left:954px;top:403px;width:300px;height:378px;background:#333"></div>
<div class="hdr" style="left:954px;top:403px;width:300px;height:26px;"></div>
<div style="left:1100px;top:407px;width:1px;height:21px;background:#77756d"></div>
<div style="left:1101px;top:407px;width:1px;height:21px;background:#e4e2da"></div>
<svg class="a" style="left:954px;top:403px" width="25" height="26" viewBox="0 0 25 26"><rect width="25" height="26" fill="#444"/><path d="M12 2v18M3 10l18-5" stroke="#a8c8ff" stroke-width="1.200"/><path d="M3 10l-2 8h7zM21 5l-3 9h7z" fill="none" stroke="#5f9fff" stroke-width="1"/><ellipse cx="12" cy="21" rx="10" ry="3.500" fill="#2a7af0"/><ellipse cx="12" cy="20" rx="6" ry="2" fill="#8fc0ff"/></svg>
<span class="t" style="left:984.4px;top:403px;font:700 10.5px/15px 'DejaVu Sans','Liberation Sans',sans-serif;color:#0a0a0a;letter-spacing:0.636px;">METAL WEIGHTS</span>
<div class="xb" style="left:1236px;top:408px;width:13px;height:13px;"><svg width="11" height="11" viewBox="0 0 11 11" style="display:block"><path d="M2 2l7 7M9 2l-7 7" stroke="#e0202a" stroke-width="1.100"/></svg></div>
<span class="t" style="left:966px;top:438px;font:400 9.5px/14px 'Liberation Sans',sans-serif;color:#c4c4c4;letter-spacing:-0.050px;">Library: Classic - (Fast)-Metal</span>
<div style="left:1160px;top:437px;width:37px;height:17px;background:#2a2a2a;border:1px solid #888"></div>
<span class="t" style="left:1163px;top:438px;font:400 9.5px/15px 'DejaVu Sans','Liberation Sans',sans-serif;color:#aaa;letter-spacing:-0.930px;">GV</span>
<div style="left:1182px;top:439px;width:13px;height:13px;background:#35b4c0;border:1px solid #7fe0e8"></div>
<div style="left:1188px;top:442px;width:2px;height:7px;background:#0a0a14"></div>
<div style="left:1200px;top:437px;width:45px;height:17px;background:#2a2a2a;border:1px solid #888"></div>
<span class="t" style="left:1203px;top:438px;font:400 9.5px/15px 'DejaVu Sans','Liberation Sans',sans-serif;color:#aaa;letter-spacing:-0.413px;">User</span>
<div style="left:1230px;top:439px;width:13px;height:13px;background:#35b4c0;border:1px solid #7fe0e8"></div>
<div style="left:1236px;top:442px;width:2px;height:7px;background:#0a0a14"></div>
<div style="left:960px;top:460px;width:288px;height:217px;background:#fff"></div>
<span class="t" style="left:966px;top:465px;font:400 10.5px/15px 'DejaVu Sans','Liberation Sans',sans-serif;color:#1a1a1a;letter-spacing:0.102px;">Metal</span>
<span class="t" style="left:1095px;top:465px;font:400 10.5px/15px 'DejaVu Sans','Liberation Sans',sans-serif;color:#1a1a1a;letter-spacing:0.183px;">Grams</span>
<span class="t" style="left:1152px;top:465px;font:400 10.5px/15px 'DejaVu Sans','Liberation Sans',sans-serif;color:#1a1a1a;letter-spacing:0.207px;">DWT</span>
<span class="t" style="left:1203px;top:465px;font:400 10.5px/15px 'DejaVu Sans','Liberation Sans',sans-serif;color:#1a1a1a;letter-spacing:0.189px;">SPG</span>
<div style="left:1088.5px;top:461px;width:1px;height:23px;background:#e0e0e0"></div>
<div style="left:1145.5px;top:461px;width:1px;height:23px;background:#e0e0e0"></div>
<div style="left:1196.5px;top:461px;width:1px;height:23px;background:#e0e0e0"></div>
<svg class="a" style="left:1232px;top:462px" width="16" height="16" viewBox="0 0 16 16"><path d="M4 10l4-4 4 4" stroke="#444" stroke-width="1.500" fill="none"/></svg>
<div style="left:960px;top:484px;width:271px;height:175px;background:#23211e;overflow:hidden"><div style="left:0;top:15px;width:271px;height:1px;background:#f4f4f4"></div><div style="left:0;top:31px;width:271px;height:1px;background:#f4f4f4"></div><div style="left:0;top:47px;width:271px;height:1px;background:#f4f4f4"></div><div style="left:0;top:63px;width:271px;height:1px;background:#f4f4f4"></div><div style="left:0;top:79px;width:271px;height:1px;background:#f4f4f4"></div><div style="left:0;top:95px;width:271px;height:1px;background:#f4f4f4"></div><div style="left:0;top:111px;width:271px;height:1px;background:#f4f4f4"></div><div style="left:0;top:127px;width:271px;height:1px;background:#f4f4f4"></div><div style="left:0;top:143px;width:271px;height:1px;background:#f4f4f4"></div><div style="left:0;top:159px;width:271px;height:1px;background:#f4f4f4"></div><div style="left:0;top:175px;width:271px;height:1px;background:#f4f4f4"></div><div style="left:128.500px;top:0;width:1.300px;height:175px;background:#f4f4f4"></div><div style="left:185.500px;top:0;width:1.300px;height:175px;background:#f4f4f4"></div><div style="left:236.500px;top:0;width:1.300px;height:175px;background:#f4f4f4"></div><span class="t" style="left:6px;top:0.5px;font:10.500px/15px 'DejaVu Sans',sans-serif;color:#f4f4f0;letter-spacing:.42px">Yellow Gold:9KY</span><span class="t" style="left:135px;top:0.5px;font:10.500px/15px 'DejaVu Sans',sans-serif;color:#f4f4f0;letter-spacing:.3px">0.72</span><span class="t" style="left:192px;top:0.5px;font:10.500px/15px 'DejaVu Sans',sans-serif;color:#f4f4f0;letter-spacing:.3px">0.46</span><span class="t" style="left:243px;top:0.5px;font:10.500px/15px 'DejaVu Sans',sans-serif;color:#f4f4f0;letter-spacing:.3px">11.08</span><span class="t" style="left:6px;top:16.5px;font:10.500px/15px 'DejaVu Sans',sans-serif;color:#f4f4f0;letter-spacing:.42px">Yellow Gold:10KY</span><span class="t" style="left:135px;top:16.5px;font:10.500px/15px 'DejaVu Sans',sans-serif;color:#f4f4f0;letter-spacing:.3px">0.74</span><span class="t" style="left:192px;top:16.5px;font:10.500px/15px 'DejaVu Sans',sans-serif;color:#f4f4f0;letter-spacing:.3px">0.48</span><span class="t" style="left:243px;top:16.5px;font:10.500px/15px 'DejaVu Sans',sans-serif;color:#f4f4f0;letter-spacing:.3px">11.45</span><span class="t" style="left:6px;top:32.5px;font:10.500px/15px 'DejaVu Sans',sans-serif;color:#f4f4f0;letter-spacing:.42px">Yellow Gold:14KY</span><span class="t" style="left:135px;top:32.5px;font:10.500px/15px 'DejaVu Sans',sans-serif;color:#f4f4f0;letter-spacing:.3px">0.83</span><span class="t" style="left:192px;top:32.5px;font:10.500px/15px 'DejaVu Sans',sans-serif;color:#f4f4f0;letter-spacing:.3px">0.54</span><span class="t" style="left:243px;top:32.5px;font:10.500px/15px 'DejaVu Sans',sans-serif;color:#f4f4f0;letter-spacing:.3px">12.88</span><span class="t" style="left:6px;top:48.5px;font:10.500px/15px 'DejaVu Sans',sans-serif;color:#f4f4f0;letter-spacing:.42px">Yellow Gold:18KY</span><span class="t" style="left:135px;top:48.5px;font:10.500px/15px 'DejaVu Sans',sans-serif;color:#f4f4f0;letter-spacing:.3px">1.00</span><span class="t" style="left:192px;top:48.5px;font:10.500px/15px 'DejaVu Sans',sans-serif;color:#f4f4f0;letter-spacing:.3px">0.64</span><span class="t" style="left:243px;top:48.5px;font:10.500px/15px 'DejaVu Sans',sans-serif;color:#f4f4f0;letter-spacing:.3px">15.41</span><span class="t" style="left:6px;top:64.5px;font:10.500px/15px 'DejaVu Sans',sans-serif;color:#f4f4f0;letter-spacing:.42px">Yellow Gold:18KY R...</span><span class="t" style="left:135px;top:64.5px;font:10.500px/15px 'DejaVu Sans',sans-serif;color:#f4f4f0;letter-spacing:.3px">1.00</span><span class="t" style="left:192px;top:64.5px;font:10.500px/15px 'DejaVu Sans',sans-serif;color:#f4f4f0;letter-spacing:.3px">0.64</span><span class="t" style="left:243px;top:64.5px;font:10.500px/15px 'DejaVu Sans',sans-serif;color:#f4f4f0;letter-spacing:.3px">15.41</span><span class="t" style="left:6px;top:80.5px;font:10.500px/15px 'DejaVu Sans',sans-serif;color:#f4f4f0;letter-spacing:.42px">Yellow Gold:22KY</span><span class="t" style="left:135px;top:80.5px;font:10.500px/15px 'DejaVu Sans',sans-serif;color:#f4f4f0;letter-spacing:.3px">1.16</span><span class="t" style="left:192px;top:80.5px;font:10.500px/15px 'DejaVu Sans',sans-serif;color:#f4f4f0;letter-spacing:.3px">0.74</span><span class="t" style="left:243px;top:80.5px;font:10.500px/15px 'DejaVu Sans',sans-serif;color:#f4f4f0;letter-spacing:.3px">17.89</span><span class="t" style="left:6px;top:96.5px;font:10.500px/15px 'DejaVu Sans',sans-serif;color:#f4f4f0;letter-spacing:.42px">White Gold:9K PdW</span><span class="t" style="left:135px;top:96.5px;font:10.500px/15px 'DejaVu Sans',sans-serif;color:#f4f4f0;letter-spacing:.3px">0.81</span><span class="t" style="left:192px;top:96.5px;font:10.500px/15px 'DejaVu Sans',sans-serif;color:#f4f4f0;letter-spacing:.3px">0.52</span><span class="t" style="left:243px;top:96.5px;font:10.500px/15px 'DejaVu Sans',sans-serif;color:#f4f4f0;letter-spacing:.3px">12.59</span><span class="t" style="left:6px;top:112.5px;font:10.500px/15px 'DejaVu Sans',sans-serif;color:#f4f4f0;letter-spacing:.42px">White Gold:10KX1</span><span class="t" style="left:135px;top:112.5px;font:10.500px/15px 'DejaVu Sans',sans-serif;color:#f4f4f0;letter-spacing:.3px">0.72</span><span class="t" style="left:192px;top:112.5px;font:10.500px/15px 'DejaVu Sans',sans-serif;color:#f4f4f0;letter-spacing:.3px">0.47</span><span class="t" style="left:243px;top:112.5px;font:10.500px/15px 'DejaVu Sans',sans-serif;color:#f4f4f0;letter-spacing:.3px">11.18</span><span class="t" style="left:6px;top:128.5px;font:10.500px/15px 'DejaVu Sans',sans-serif;color:#f4f4f0;letter-spacing:.42px">White Gold:10KW</span><span class="t" style="left:135px;top:128.5px;font:10.500px/15px 'DejaVu Sans',sans-serif;color:#f4f4f0;letter-spacing:.3px">0.71</span><span class="t" style="left:192px;top:128.5px;font:10.500px/15px 'DejaVu Sans',sans-serif;color:#f4f4f0;letter-spacing:.3px">0.46</span><span class="t" style="left:243px;top:128.5px;font:10.500px/15px 'DejaVu Sans',sans-serif;color:#f4f4f0;letter-spacing:.3px">10.99</span><span class="t" style="left:6px;top:144.5px;font:10.500px/15px 'DejaVu Sans',sans-serif;color:#f4f4f0;letter-spacing:.42px">White Gold:14KX1</span><span class="t" style="left:135px;top:144.5px;font:10.500px/15px 'DejaVu Sans',sans-serif;color:#f4f4f0;letter-spacing:.3px">0.82</span><span class="t" style="left:192px;top:144.5px;font:10.500px/15px 'DejaVu Sans',sans-serif;color:#f4f4f0;letter-spacing:.3px">0.52</span><span class="t" style="left:243px;top:144.5px;font:10.500px/15px 'DejaVu Sans',sans-serif;color:#f4f4f0;letter-spacing:.3px">12.61</span><span class="t" style="left:6px;top:160.5px;font:10.500px/15px 'DejaVu Sans',sans-serif;color:#f4f4f0;letter-spacing:.42px">White Gold:14K PdW</span><span class="t" style="left:135px;top:160.5px;font:10.500px/15px 'DejaVu Sans',sans-serif;color:#f4f4f0;letter-spacing:.3px">0.93</span><span class="t" style="left:192px;top:160.5px;font:10.500px/15px 'DejaVu Sans',sans-serif;color:#f4f4f0;letter-spacing:.3px">0.60</span><span class="t" style="left:243px;top:160.5px;font:10.500px/15px 'DejaVu Sans',sans-serif;color:#f4f4f0;letter-spacing:.3px">14.37</span></div>
<div style="left:1231px;top:484px;width:17px;height:175px;background:#f0f0f0"></div>
<div style="left:1231px;top:484px;width:17px;height:58px;background:#cdcdcd"></div>
<svg class="a" style="left:1232px;top:644px" width="16" height="16" viewBox="0 0 16 16"><path d="M4 6l4 4 4-4" stroke="#444" stroke-width="1.500" fill="none"/></svg>
<div style="left:960px;top:659px;width:288px;height:17px;background:#f0f0f0"></div>
<div style="left:977px;top:660px;width:224px;height:16px;background:#cdcdcd"></div>
<svg class="a" style="left:960px;top:660px" width="17" height="16" viewBox="0 0 17 16"><path d="M10 4l-4 4 4 4" stroke="#444" stroke-width="1.500" fill="none"/></svg>
<svg class="a" style="left:1214px;top:660px" width="17" height="16" viewBox="0 0 17 16"><path d="M6 4l4 4-4 4" stroke="#444" stroke-width="1.500" fill="none"/></svg>
<div style="left:1107px;top:683px;width:131px;height:17px;background:#23211e;border:1px solid #999"></div>
<span class="t" style="left:1109.5px;top:684px;font:400 9.5px/15px 'DejaVu Sans','Liberation Sans',sans-serif;color:#b8b8b4;letter-spacing:-0.289px;">Use Object Materials</span>
<div style="left:1222px;top:685px;width:14px;height:13px;background:#666;border:1px solid #888"></div>
<svg class="a" style="left:1222px;top:685px" width="14" height="13" viewBox="0 0 14 13"><circle cx="7" cy="6.500" r="3" fill="none" stroke="#bbb" stroke-width="1"/></svg>
<span class="t" style="left:975.5px;top:711px;font:700 11.5px/15px 'Liberation Sans',sans-serif;color:#f8e400;letter-spacing:0.152px;">Highlight the item you want to find the weight</span>
<span class="t" style="left:1034px;top:724px;font:700 11.5px/15px 'Liberation Sans',sans-serif;color:#f8e400;letter-spacing:0.229px;">for then press calculate.</span>
<div style="left:1054px;top:753px;width:100px;height:17px;background:#23211e;border:1px solid #aaa"></div>
<span class="t" style="left:1057px;top:754px;font:400 9.5px/15px 'DejaVu Sans','Liberation Sans',sans-serif;color:#c8c8c4;letter-spacing:-0.485px;">Calculate</span>
<div style="left:1139px;top:755px;width:14px;height:13px;background:linear-gradient(#58b828,#3f9a14);border:1px solid;border-color:#8ad860 #2a6a0a #2a6a0a #8ad860"></div>
<svg class="a" style="left:1139px;top:755px" width="14" height="13" viewBox="0 0 14 13"><path d="M4.5 2.5v8l5.500-4z" fill="#f4fff0"/></svg>
<div style="left:1815px;top:212px;width:97px;height:757px;background:#fff;border:1px solid #555"></div>
<svg class="a" style="left:1815px;top:191px" width="76" height="22" viewBox="0 0 76 22"><path d="M.500 21V4Q.500 1.500 3 1.500H14Q16.500 1.500 17 4L19 21" fill="#fff" stroke="#444" stroke-width="1"/><path d="M18 3Q18.5 1.500 21 1.500H32Q34.5 1.500 35 4L37 20.500H20z" fill="#d6e6ea" stroke="#444" stroke-width="1"/><path d="M36 3Q36.5 1.500 39 1.500H50Q52.5 1.500 53 4L55 20.500H38z" fill="#d6e6ea" stroke="#444" stroke-width="1"/><path d="M54 3Q54.5 1.500 57 1.500H68Q70.5 1.500 71 4L73 20.500H56z" fill="#d6e6ea" stroke="#444" stroke-width="1"/><circle cx="9" cy="11" r="6" fill="none" stroke="url(#rb2)" stroke-width="2.600"/><defs><linearGradient id="rb2" x1="0" y1="0" x2="1" y2="1"><stop offset="0" stop-color="#f02020"/><stop offset=".3" stop-color="#f0c020"/><stop offset=".55" stop-color="#20c040"/><stop offset=".8" stop-color="#2060f0"/><stop offset="1" stop-color="#c020c0"/></linearGradient></defs><path d="M20 5l7 3 7-3v7l-7 4-7-4z" fill="#e83818"/><path d="M20 11l7 4 7-4v2.500l-7 4-7-4z" fill="#f4f4f4"/><path d="M20 13.500l7 4 7-4v2l-7 3.500-7-3.500z" fill="#3050d0"/><rect x="39" y="4.500" width="13" height="11" fill="#222"/><rect x="40.500" y="6" width="10" height="8" fill="#888"/><path d="M42 18h7M45.500 15.500v2.500" stroke="#222" stroke-width="1.500"/><rect x="57" y="4" width="14" height="14" fill="#3050d0"/><rect x="57" y="4" width="14" height="2.500" fill="#e8e8f4"/><text x="60.500" y="16" font-size="10" font-weight="700" fill="#fff" font-family="Liberation Sans,sans-serif">?</text></svg>
<div style="left:1816px;top:212px;width:18px;height:1px;background:#fff"></div>
<div style="left:1819px;top:220px;width:86px;height:1px;background:#dfe5e8"></div>
<div style="left:1820px;top:221px;width:85px;height:23px;background:#f6f8f9"></div>
<span class="t" style="left:1823px;top:224px;font:400 12px/16px 'Liberation Sans',sans-serif;color:#0a0a1a;letter-spacing:-.3px;">Viewport</span>
<div style="left:1819px;top:243px;width:86px;height:1px;background:#dfe5e8"></div>
<div style="left:1820px;top:244px;width:7px;height:19px;background:#f0f2f4"></div>
<div style="left:1862px;top:244px;width:1px;height:19px;background:#dfe5e8"></div>
<span class="t" style="left:1832px;top:245px;font:400 12px/16px 'Liberation Sans',sans-serif;color:#0a0a1a;letter-spacing:-.4px;">Title</span>
<span class="t" style="left:1867px;top:245px;font:400 12px/16px 'Liberation Sans',sans-serif;color:#0a0a1a;letter-spacing:-.4px;">Right</span>
<div style="left:1819px;top:262px;width:86px;height:1px;background:#dfe5e8"></div>
<div style="left:1820px;top:263px;width:7px;height:19px;background:#f0f2f4"></div>
<div style="left:1862px;top:263px;width:1px;height:19px;background:#dfe5e8"></div>
<span class="t" style="left:1832px;top:264px;font:400 12px/16px 'Liberation Sans',sans-serif;color:#0a0a1a;letter-spacing:-.4px;">Width</span>
<span class="t" style="left:1867px;top:264px;font:400 12px/16px 'Liberation Sans',sans-serif;color:#0a0a1a;letter-spacing:-.4px;">710</span>
<div style="left:1819px;top:281px;width:86px;height:1px;background:#dfe5e8"></div>
<div style="left:1820px;top:282px;width:7px;height:19px;background:#f0f2f4"></div>
<div style="left:1862px;top:282px;width:1px;height:19px;background:#dfe5e8"></div>
<span class="t" style="left:1832px;top:283px;font:400 12px/16px 'Liberation Sans',sans-serif;color:#0a0a1a;letter-spacing:-.4px;">Hei...</span>
<span class="t" style="left:1867px;top:283px;font:400 12px/16px 'Liberation Sans',sans-serif;color:#0a0a1a;letter-spacing:-.4px;">380</span>
<div style="left:1819px;top:300px;width:86px;height:1px;background:#dfe5e8"></div>
<div style="left:1820px;top:301px;width:7px;height:19px;background:#f0f2f4"></div>
<div style="left:1862px;top:301px;width:1px;height:19px;background:#dfe5e8"></div>
<span class="t" style="left:1832px;top:302px;font:400 12px/16px 'Liberation Sans',sans-serif;color:#0a0a1a;letter-spacing:-.4px;">Proj...</span>
<span class="t" style="left:1867px;top:302px;font:400 12px/16px 'Liberation Sans',sans-serif;color:#0a0a1a;letter-spacing:-.4px;">P...</span>
<div style="left:1886px;top:301px;width:19px;height:18px;background:#dcdcdc"></div>
<svg class="a" style="left:1886px;top:301px" width="19" height="18" viewBox="0 0 19 18"><path d="M5.500 7l4 4 4-4" stroke="#333" stroke-width="1.200" fill="none"/></svg>
<div style="left:1819px;top:319px;width:86px;height:1px;background:#dfe5e8"></div>
<div style="left:1820px;top:320px;width:85px;height:23px;background:#f6f8f9"></div>
<span class="t" style="left:1823px;top:323px;font:400 12px/16px 'Liberation Sans',sans-serif;color:#0a0a1a;letter-spacing:-.3px;">Camera</span>
<div style="left:1819px;top:342px;width:86px;height:1px;background:#dfe5e8"></div>
<div style="left:1820px;top:343px;width:7px;height:19px;background:#f0f2f4"></div>
<div style="left:1862px;top:343px;width:1px;height:19px;background:#dfe5e8"></div>
<span class="t" style="left:1832px;top:344px;font:400 12px/16px 'Liberation Sans',sans-serif;color:#8a9096;letter-spacing:-.4px;">Len...</span>
<div style="left:1863px;top:343px;width:42px;height:18px;background:#e4e8ea"></div>
<span class="t" style="left:1867px;top:344px;font:400 12px/16px 'Liberation Sans',sans-serif;color:#8a9096;">50.0</span>
<div style="left:1819px;top:361px;width:86px;height:1px;background:#dfe5e8"></div>
<div style="left:1820px;top:362px;width:7px;height:19px;background:#f0f2f4"></div>
<div style="left:1862px;top:362px;width:1px;height:19px;background:#dfe5e8"></div>
<span class="t" style="left:1832px;top:363px;font:400 12px/16px 'Liberation Sans',sans-serif;color:#0a0a1a;letter-spacing:-.4px;">Rot...</span>
<span class="t" style="left:1867px;top:363px;font:400 12px/16px 'Liberation Sans',sans-serif;color:#0a0a1a;letter-spacing:-.4px;">0.0</span>
<div style="left:1819px;top:380px;width:86px;height:1px;background:#dfe5e8"></div>
<div style="left:1820px;top:381px;width:7px;height:19px;background:#f0f2f4"></div>
<div style="left:1862px;top:381px;width:1px;height:19px;background:#dfe5e8"></div>
<span class="t" style="left:1832px;top:382px;font:400 12px/16px 'Liberation Sans',sans-serif;color:#0a0a1a;letter-spacing:-.4px;">X L...</span>
<span class="t" style="left:1867px;top:382px;font:400 12px/16px 'Liberation Sans',sans-serif;color:#0a0a1a;letter-spacing:-.4px;">100.0...</span>
<div style="left:1819px;top:399px;width:86px;height:1px;background:#dfe5e8"></div>
<div style="left:1820px;top:400px;width:7px;height:19px;background:#f0f2f4"></div>
<div style="left:1862px;top:400px;width:1px;height:19px;background:#dfe5e8"></div>
<span class="t" style="left:1832px;top:401px;font:400 12px/16px 'Liberation Sans',sans-serif;color:#0a0a1a;letter-spacing:-.4px;">Y L...</span>
<span class="t" style="left:1867px;top:401px;font:400 12px/16px 'Liberation Sans',sans-serif;color:#0a0a1a;letter-spacing:-.4px;">34.417</span>
<div style="left:1819px;top:418px;width:86px;height:1px;background:#dfe5e8"></div>
<div style="left:1820px;top:419px;width:7px;height:19px;background:#f0f2f4"></div>
<div style="left:1862px;top:419px;width:1px;height:19px;background:#dfe5e8"></div>
<span class="t" style="left:1832px;top:420px;font:400 12px/16px 'Liberation Sans',sans-serif;color:#0a0a1a;letter-spacing:-.4px;">Z L...</span>
<span class="t" style="left:1867px;top:420px;font:400 12px/16px 'Liberation Sans',sans-serif;color:#0a0a1a;letter-spacing:-.4px;">2.799</span>
<div style="left:1819px;top:437px;width:86px;height:1px;background:#dfe5e8"></div>
<div style="left:1820px;top:438px;width:7px;height:19px;background:#f0f2f4"></div>
<div style="left:1862px;top:438px;width:1px;height:19px;background:#dfe5e8"></div>
<span class="t" style="left:1832px;top:439px;font:400 12px/16px 'Liberation Sans',sans-serif;color:#0a0a1a;letter-spacing:-.4px;">Loc...</span>
<div style="left:1864px;top:439px;width:40px;height:16px;background:#e4e4e4;border:1px solid #8a8a8a"></div>
<span class="t" style="left:1867px;top:439px;font:400 12px/16px 'Liberation Sans',sans-serif;color:#0a0a1a;letter-spacing:-.3px;">Place...</span>
<div style="left:1819px;top:456px;width:86px;height:1px;background:#dfe5e8"></div>
<div style="left:1820px;top:457px;width:85px;height:23px;background:#f6f8f9"></div>
<span class="t" style="left:1823px;top:460px;font:400 12px/16px 'Liberation Sans',sans-serif;color:#0a0a1a;letter-spacing:-.3px;">Target</span>
<div style="left:1819px;top:479px;width:86px;height:1px;background:#dfe5e8"></div>
<div style="left:1820px;top:480px;width:7px;height:19px;background:#f0f2f4"></div>
<div style="left:1862px;top:480px;width:1px;height:19px;background:#dfe5e8"></div>
<span class="t" style="left:1832px;top:481px;font:400 12px/16px 'Liberation Sans',sans-serif;color:#0a0a1a;letter-spacing:-.4px;">X T...</span>
<span class="t" style="left:1867px;top:481px;font:400 12px/16px 'Liberation Sans',sans-serif;color:#0a0a1a;letter-spacing:-.4px;">0.000</span>
<div style="left:1819px;top:498px;width:86px;height:1px;background:#dfe5e8"></div>
<div style="left:1820px;top:499px;width:7px;height:19px;background:#f0f2f4"></div>
<div style="left:1862px;top:499px;width:1px;height:19px;background:#dfe5e8"></div>
<span class="t" style="left:1832px;top:500px;font:400 12px/16px 'Liberation Sans',sans-serif;color:#0a0a1a;letter-spacing:-.4px;">Y T...</span>
<span class="t" style="left:1867px;top:500px;font:400 12px/16px 'Liberation Sans',sans-serif;color:#0a0a1a;letter-spacing:-.4px;">34.417</span>
<div style="left:1819px;top:517px;width:86px;height:1px;background:#dfe5e8"></div>
<div style="left:1820px;top:518px;width:7px;height:19px;background:#f0f2f4"></div>
<div style="left:1862px;top:518px;width:1px;height:19px;background:#dfe5e8"></div>
<span class="t" style="left:1832px;top:519px;font:400 12px/16px 'Liberation Sans',sans-serif;color:#0a0a1a;letter-spacing:-.4px;">Z T...</span>
<span class="t" style="left:1867px;top:519px;font:400 12px/16px 'Liberation Sans',sans-serif;color:#0a0a1a;letter-spacing:-.4px;">2.799</span>
<div style="left:1819px;top:536px;width:86px;height:1px;background:#dfe5e8"></div>
<div style="left:1820px;top:537px;width:7px;height:19px;background:#f0f2f4"></div>
<div style="left:1862px;top:537px;width:1px;height:19px;background:#dfe5e8"></div>
<span class="t" style="left:1832px;top:538px;font:400 12px/16px 'Liberation Sans',sans-serif;color:#0a0a1a;letter-spacing:-.4px;">Loc...</span>
<div style="left:1864px;top:538px;width:40px;height:16px;background:#e4e4e4;border:1px solid #8a8a8a"></div>
<span class="t" style="left:1867px;top:538px;font:400 12px/16px 'Liberation Sans',sans-serif;color:#0a0a1a;letter-spacing:-.3px;">Place...</span>
<div style="left:1819px;top:555px;width:86px;height:1px;background:#dfe5e8"></div>
<div style="left:1820px;top:556px;width:85px;height:23px;background:#f6f8f9"></div>
<span class="t" style="left:1823px;top:559px;font:400 12px/16px 'Liberation Sans',sans-serif;color:#0a0a1a;letter-spacing:-.3px;">Wallpaper</span>
<div style="left:1819px;top:578px;width:86px;height:1px;background:#dfe5e8"></div>
<div style="left:1820px;top:579px;width:7px;height:19px;background:#f0f2f4"></div>
<div style="left:1862px;top:579px;width:1px;height:19px;background:#dfe5e8"></div>
<span class="t" style="left:1832px;top:580px;font:400 12px/16px 'Liberation Sans',sans-serif;color:#0a0a1a;letter-spacing:-.4px;">File...</span>
<span class="t" style="left:1867px;top:580px;font:400 12px/16px 'Liberation Sans',sans-serif;color:#0a0a1a;letter-spacing:-.4px;">(n...</span>
<div style="left:1889px;top:580px;width:15px;height:16px;background:#e4e4e4;border:1px solid #8a8a8a"></div>
<span class="t" style="left:1892px;top:578px;font:400 11px/16px 'Liberation Sans',sans-serif;color:#111;">...</span>
<div style="left:1819px;top:597px;width:86px;height:1px;background:#dfe5e8"></div>
<div style="left:1820px;top:598px;width:7px;height:19px;background:#f0f2f4"></div>
<div style="left:1862px;top:598px;width:1px;height:19px;background:#dfe5e8"></div>
<span class="t" style="left:1832px;top:599px;font:400 12px/16px 'Liberation Sans',sans-serif;color:#0a0a1a;letter-spacing:-.4px;">Show</span>
<div style="left:1867px;top:600px;width:13px;height:13px;background:#fff;border:1px solid #333"></div>
<svg class="a" style="left:1867px;top:600px" width="13" height="13" viewBox="0 0 13 13"><path d="M2.800 6.500l2.700 3 4.800-6" stroke="#111" stroke-width="1.300" fill="none"/></svg>
<div style="left:1819px;top:616px;width:86px;height:1px;background:#dfe5e8"></div>
<div style="left:1820px;top:617px;width:7px;height:19px;background:#f0f2f4"></div>
<div style="left:1862px;top:617px;width:1px;height:19px;background:#dfe5e8"></div>
<span class="t" style="left:1832px;top:618px;font:400 12px/16px 'Liberation Sans',sans-serif;color:#0a0a1a;letter-spacing:-.4px;">Gray</span>
<div style="left:1867px;top:619px;width:13px;height:13px;background:#fff;border:1px solid #333"></div>
<svg class="a" style="left:1867px;top:619px" width="13" height="13" viewBox="0 0 13 13"><path d="M2.800 6.500l2.700 3 4.800-6" stroke="#111" stroke-width="1.300" fill="none"/></svg>
<div style="left:1819px;top:635px;width:86px;height:1px;background:#dfe5e8"></div>
<div style="left:1819px;top:220px;width:1px;height:415px;background:#dfe5e8"></div>
<div style="left:1904px;top:220px;width:1px;height:415px;background:#dfe5e8"></div>
<div style="left:0px;top:1040px;width:1920px;height:40px;background:linear-gradient(90deg,#35232c 0,#3d2a2f 25%,#3a2a2e 60%,#2f252c 100%)"></div>
<svg class="a" style="left:16px;top:1052px" width="16" height="16" viewBox="0 0 16 16"><path d="M0 2.300l6.500-.9v6.100h-6.500zM7.300 1.300l8.700-1.300v7.500h-8.700zM0 8.300h6.500v6.100l-6.500-.9zM7.300 8.300h8.700v7.700l-8.700-1.300z" fill="#fff"/></svg>
<div style="left:48px;top:1040px;width:288px;height:40px;background:#f2f2f2;overflow:hidden"><svg width="288" height="40" viewBox="0 0 288 40" style="position:absolute;left:0;top:0"><ellipse cx="262" cy="46" rx="52" ry="12" fill="#6f9a3a"/><ellipse cx="250" cy="44" rx="36" ry="8" fill="#8ab048"/><ellipse cx="246" cy="22" rx="25" ry="14" fill="#a47a52"/><ellipse cx="230" cy="20" rx="13" ry="11" fill="#b08a60"/><ellipse cx="262" cy="24" rx="12" ry="12" fill="#94683f"/><path d="M222 10l3-4 4 4zM234 9l4-3 2 5z" fill="#8a6038"/><ellipse cx="227" cy="24" rx="4" ry="3" fill="#6a4828"/><circle cx="225" cy="18" r="1.200" fill="#221"/><circle cx="233" cy="18" r="1.200" fill="#221"/><rect x="234" y="30" width="7" height="8" rx="3" fill="#94683f"/><rect x="258" y="31" width="8" height="8" rx="3" fill="#7a5430"/><rect x="243" y="31" width="6" height="7" rx="3" fill="#8a6038"/><circle cx="21" cy="17" r="5.500" fill="none" stroke="#222" stroke-width="1.500"/><path d="M17 21.500l-5.500 6" stroke="#222" stroke-width="1.600"/></svg></div>
<span class="t" style="left:88px;top:1050px;font:400 15px/20px 'Liberation Sans',sans-serif;color:#2a2a2a;letter-spacing:-0.240px;">Type here to search</span>
<svg class="a" style="left:350px;top:1052px" width="20" height="17" viewBox="0 0 20 17"><path d="M2 1v15M2 1h3M2 16h3M16 1v15M16 1h-3M16 16h-3" stroke="#fff" stroke-width="1.200" fill="none"/><rect x="5.500" y="5" width="7" height="7" fill="none" stroke="#fff" stroke-width="1.200"/><path d="M18.500 4v3M18.500 10v3" stroke="#fff" stroke-width="1.400"/></svg>
<svg class="a" style="left:397px;top:1048px" width="26" height="26" viewBox="0 0 26 26"><defs><linearGradient id="cp" x1="0" y1="0" x2="1" y2="1"><stop offset="0" stop-color="#28a8f0"/><stop offset=".35" stop-color="#38c890"/><stop offset=".6" stop-color="#f0c020"/><stop offset=".8" stop-color="#f06040"/><stop offset="1" stop-color="#c040d0"/></linearGradient></defs><path d="M8 3h7q4 0 5 4l3 9q1 5-4 6h-8q-4 0-5-4l-3-9q-1-5 5-6z" fill="url(#cp)"/><path d="M10 8h5l2 9h-5z" fill="#3d2a2f" opacity=".55"/></svg>
<svg class="a" style="left:446px;top:1050px" width="26" height="22" viewBox="0 0 26 22"><path d="M1 3h9l2 2h13v15h-24z" fill="#f0b828"/><path d="M1 8h24v12h-24z" fill="#f8d458"/><path d="M7 13h12v7h-12z" fill="#3a98e8"/><path d="M10 16h6v4h-6z" fill="#f8d458"/></svg>
<div style="left:440px;top:1077px;width:40px;height:3px;background:#8ec4f0"></div>
<svg class="a" style="left:496px;top:1048px" width="26" height="26" viewBox="0 0 26 26"><path d="M3 7h20v15q0 2-2 2h-16q-2 0-2-2z" fill="#f4f4f4"/><path d="M8 7v-2q0-3 5-3t5 3v2" stroke="#3a98e8" stroke-width="1.600" fill="none"/><rect x="8" y="11" width="4.500" height="4.500" fill="#f05030"/><rect x="13.500" y="11" width="4.500" height="4.500" fill="#80c020"/><rect x="8" y="16.500" width="4.500" height="4.500" fill="#28a0f0"/><rect x="13.500" y="16.500" width="4.500" height="4.500" fill="#f8c020"/></svg>
<svg class="a" style="left:545px;top:1050px" width="26" height="22" viewBox="0 0 26 22"><path d="M1 8l12-7 12 7v12h-24z" fill="#1878d0"/><path d="M1 8l12 8 12-8v12h-24z" fill="#38a8f0"/><path d="M1 20l9-7M25 20l-9-7" stroke="#1878d0" stroke-width="1"/></svg>
<svg class="a" style="left:595px;top:1048px" width="24" height="26" viewBox="0 0 24 26"><path d="M12 1l4 1 2-1 4 4-1 3 1 3-3 9-7 5-7-5-3-9 1-3-1-3 4-4 2 1z" fill="#f05028"/><path d="M12 6l4 1 2 3-2 4-4 5-4-5-2-4 2-3z" fill="#fff"/><path d="M12 9l2 3-2 4-2-4z" fill="#f05028"/></svg>
<svg class="a" style="left:642px;top:1047px" width="28" height="28" viewBox="0 0 28 28"><circle cx="14" cy="14" r="12" fill="#1e90f0" stroke="#e8f4ff" stroke-width="1.500"/><circle cx="14" cy="14" r="6" fill="#0a2a50"/><path d="M14 2a12 12 0 0 1 10 6l-6 3M26 14a12 12 0 0 1-5 10l-3-6M8 25a12 12 0 0 1-6-9l7-1" stroke="#e8f4ff" stroke-width="1.600" fill="none"/></svg>
<div style="left:635px;top:1077px;width:40px;height:3px;background:#8ec4f0"></div>
<svg class="a" style="left:692px;top:1048px" width="25" height="25" viewBox="0 0 25 25"><rect width="25" height="25" fill="#38b050"/><path d="M3 20l6-12v9l7-13v11l6-11" stroke="#e8fae8" stroke-width="1.800" fill="none"/></svg>
<div style="left:684px;top:1077px;width:40px;height:3px;background:#8ec4f0"></div>
<svg class="a" style="left:1520px;top:1048px" width="30" height="26" viewBox="0 0 30 26"><circle cx="14" cy="13" r="10" fill="#f8b020"/><path d="M3 9h24M2 13.500h26M4 18h22" stroke="#3a2a2e" stroke-width="1.300"/><path d="M6 9h18M4 13.500h22" stroke="#f8d070" stroke-width="2.200" opacity=".0"/></svg>
<span class="t" style="left:1554px;top:1050px;font:400 15px/20px 'Liberation Sans',sans-serif;color:#fff;letter-spacing:-1.128px;">29°C</span>
<span class="t" style="left:1592px;top:1050px;font:400 15px/20px 'Liberation Sans',sans-serif;color:#fff;letter-spacing:-1.004px;">Haze</span>
<svg class="a" style="left:1644px;top:1052px" width="200" height="18" viewBox="0 0 200 18"><path d="M3 11l5-5 5 5" stroke="#fff" stroke-width="1.400" fill="none"/><rect x="29" y="2.500" width="8" height="13" rx="2" fill="none" stroke="#fff" stroke-width="1.200"/><circle cx="33" cy="7" r="1.500" fill="none" stroke="#fff" stroke-width="1"/><path d="M37 6l3-1.500v9l-3-1.500" stroke="#fff" stroke-width="1.100" fill="none"/><rect x="50.500" y="4.500" width="14" height="10" fill="none" stroke="#fff" stroke-width="1.200"/><path d="M54 11l2-4h3M61 2l4 3" stroke="#fff" stroke-width="1" fill="none"/><circle cx="63" cy="14" r="3.200" fill="#2a7ae8"/><circle cx="81" cy="9" r="7" fill="none" stroke="#fff" stroke-width="1.200"/><ellipse cx="81" cy="9" rx="3" ry="7" fill="none" stroke="#fff" stroke-width="1"/><path d="M74 9h14M75.500 5.500h11M75.500 12.500h11" stroke="#fff" stroke-width=".9"/><circle cx="87" cy="14" r="3.200" fill="#3a2a2e" stroke="#fff" stroke-width="1"/><path d="M85 16l4-4" stroke="#fff" stroke-width="1"/><path d="M96 7h3l4-4v12l-4-4h-3z" fill="none" stroke="#fff" stroke-width="1.200"/><path d="M105 6q2 3 0 6M108 4q3.500 5 0 10" stroke="#fff" stroke-width="1.100" fill="none"/></svg>
<span class="t" style="left:1767px;top:1052px;font:400 12px/16px 'Liberation Sans',sans-serif;color:#fff;letter-spacing:-0.668px;">ENG</span>
<span class="t" style="left:1818px;top:1043px;font:400 12px/16px 'Liberation Sans',sans-serif;color:#fff;letter-spacing:-0.605px;">18:49</span>
<span class="t" style="left:1803px;top:1061px;font:400 12px/16px 'Liberation Sans',sans-serif;color:#fff;letter-spacing:-0.338px;">22-10-2024</span>
<svg class="a" style="left:1876px;top:1050px" width="28" height="24" viewBox="0 0 28 24"><path d="M2 2h17v13h-8l-5 4v-4h-4z" fill="#fff"/><path d="M5 6h11M5 9h11M5 12h7" stroke="#3a2a2e" stroke-width="1.100"/><circle cx="18.500" cy="16" r="6.500" fill="#3a2a2e" stroke="#fff" stroke-width="1.200"/><text x="16" y="20" font-size="10" fill="#fff" font-family="Liberation Sans,sans-serif">1</text></svg>
</body></html>
